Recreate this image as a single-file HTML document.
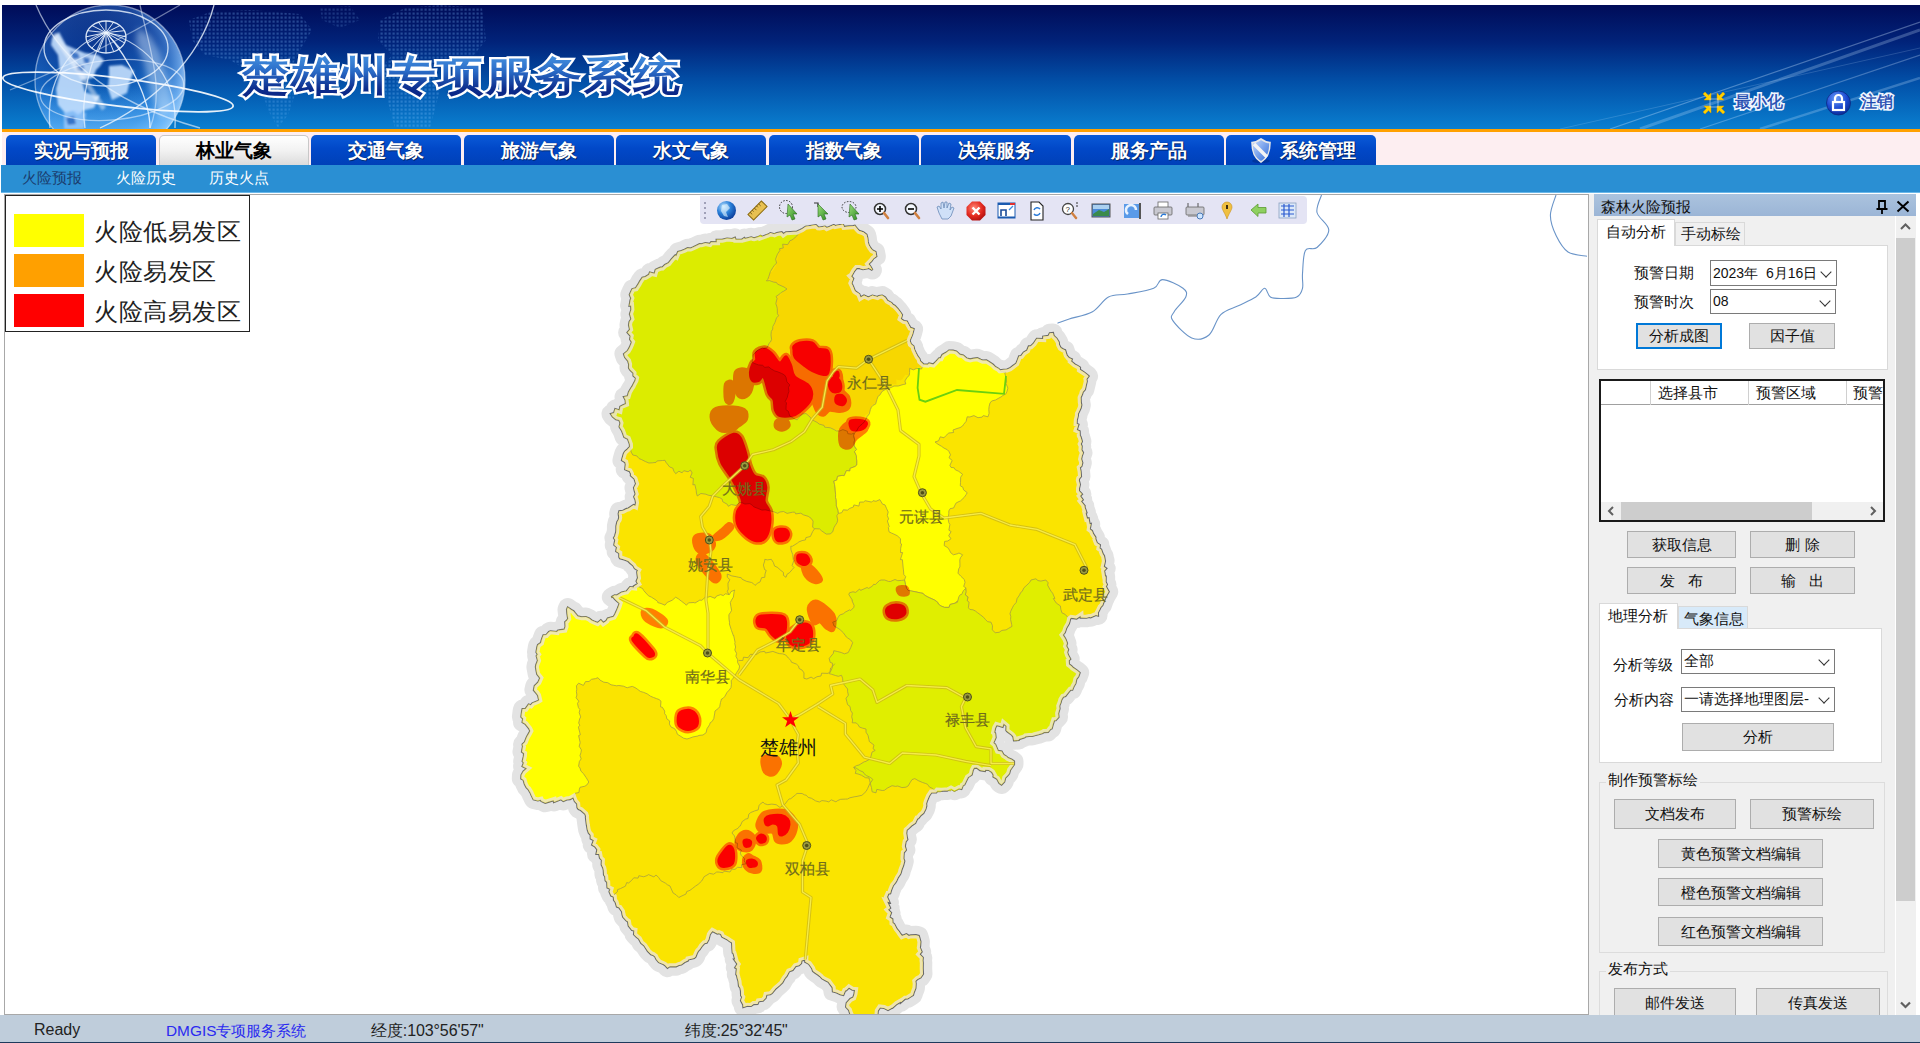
<!DOCTYPE html>
<html><head><meta charset="utf-8">
<style>
*{box-sizing:border-box;margin:0;padding:0}
html,body{width:1920px;height:1043px;overflow:hidden;background:#fff;font-family:"Liberation Sans",sans-serif;position:relative}
.a{position:absolute}
#hdr{left:2px;top:5px;width:1918px;height:124px;background:linear-gradient(180deg,#000c58 0%,#01237a 30%,#0250a8 62%,#0a7fd0 100%);overflow:hidden}
#orange{left:2px;top:129px;width:1918px;height:3px;background:#ffa000}
#tabbar{left:2px;top:132px;width:1918px;height:33px;background:#fdeef1}
.tab{top:135px;height:30px;width:150px;border-radius:5px 5px 0 0;background:linear-gradient(180deg,#0a5ad8 0%,#0148c8 45%,#0040b8 100%);color:#fff;font-weight:bold;font-size:19px;text-align:center;line-height:32px;text-shadow:0 0 1px #002060,1px 1px 0 #002a70}
.tab.act{background:linear-gradient(180deg,#ffffff 0%,#f2f2f2 50%,#dcdcdc 100%);color:#000;text-shadow:none;border:1px solid #c8c8c8;border-bottom:none;line-height:30px}
#subnav{left:1px;top:165px;width:1919px;height:28px;background:#2a8fd3;border-bottom:1px solid #6ab8ea}
.sn{top:169px;font-size:15px;color:#fff;line-height:18px}
#map{left:4px;top:194px;width:1585px;height:821px;border:1px solid #a8a8a8;background:#fff;overflow:hidden}
#mapsvg{left:0;top:0}
#legend{left:5px;top:195px;width:245px;height:137px;border:1px solid #222;background:#fff}
.sw{left:8px;width:70px;height:33px}
.lt{left:88px;font-size:24px;line-height:26px;color:#222;letter-spacing:0.5px}
#toolbar{left:700px;top:196px;width:607px;height:28px;background:#e4e4f4;border-radius:0 4px 4px 4px}
#panel{left:1589px;top:194px;width:331px;height:821px;background:#f0f0f0}
#status{left:0;top:1015px;width:1920px;height:27px;background:#bfcddb;font-size:16px;color:#222}
#sbot{left:0;top:1042px;width:1920px;height:1px;background:#1e3a5c}
.ptitle{left:1594px;top:194px;width:322px;height:22px;background:linear-gradient(180deg,#abc3de,#9bb5d6)}
.pt{font-size:15px;color:#111;line-height:18px;white-space:nowrap}
.btn{background:#e1e1e1;border:1px solid #adadad;font-size:15px;color:#111;text-align:center;white-space:nowrap}
.combo{background:#fff;border:1px solid #7a7a7a;font-size:14px;color:#111;white-space:nowrap;overflow:hidden}
.chev{position:absolute;right:6px;top:7px;width:8px;height:8px;border-right:1.5px solid #333;border-bottom:1.5px solid #333;transform:rotate(45deg)}
.mlab{font-size:15px;color:#706c1c;line-height:18px;white-space:nowrap;-webkit-text-stroke:0.2px #706c1c}

</style></head><body>
<div id="hdr" class="a">
<svg class="a" style="left:0;top:0" width="1918" height="124" viewBox="2 5 1918 124">
<defs>
<radialGradient id="gl" cx="0.38" cy="0.42" r="0.66"><stop offset="0" stop-color="#1050b0" stop-opacity="0.25"/><stop offset="0.7" stop-color="#3a8ae8" stop-opacity="0.45"/><stop offset="0.9" stop-color="#8cc4ff" stop-opacity="0.75"/><stop offset="1" stop-color="#d8ecff" stop-opacity="0.9"/></radialGradient>
<linearGradient id="glow2" x1="0" y1="0" x2="0" y2="1"><stop offset="0" stop-color="#60b0ff" stop-opacity="0"/><stop offset="1" stop-color="#70c0ff" stop-opacity="0.6"/></linearGradient>
<pattern id="dots" width="4" height="4" patternUnits="userSpaceOnUse"><rect x="0.5" y="0.5" width="2.2" height="2.2" fill="#80c0ff" fill-opacity="0.28"/></pattern>
<linearGradient id="streak" x1="0" y1="1" x2="1" y2="0"><stop offset="0" stop-color="#fff" stop-opacity="0"/><stop offset="0.5" stop-color="#fff" stop-opacity="0.35"/><stop offset="1" stop-color="#fff" stop-opacity="0"/></linearGradient>
<filter id="blur1" x="-20%" y="-20%" width="140%" height="140%"><feGaussianBlur stdDeviation="0.8"/></filter>
<filter id="blur3" x="-50%" y="-50%" width="200%" height="200%"><feGaussianBlur stdDeviation="3"/></filter>
</defs>
<path d="M189,20 L210,12 L250,10 L300,14 L312,30 L300,50 L290,70 L270,78 L250,72 L230,60 L205,55 L192,40Z" fill="url(#dots)"/>
<path d="M268,78 L285,80 L295,95 L288,115 L278,128 L268,110 L262,92Z" fill="url(#dots)" opacity="0.8"/>
<path d="M380,20 L405,8 L440,5 L482,8 L486,40 L470,60 L445,62 L430,66 L440,90 L430,128 L395,128 L386,95 L380,70 L392,55 L378,40Z" fill="url(#dots)"/>
<path d="M320,8 L350,6 L360,20 L340,28 L322,20Z" fill="url(#dots)" opacity="0.7"/>

<circle cx="110" cy="80" r="75" fill="url(#gl)"/>
<rect x="35" y="85" width="150" height="44" fill="url(#glow2)" clip-path="circle(75px at 75px -5px)"/>
<g filter="url(#blur1)">
<path d="M52,38 L59,32 L66,45 L75,49 L85,53 L98,55 L104,60 L100,66 L96,70 L93,78 L82,80 L85,92 L96,96 L100,95 L94,108 L85,110 L78,115 L73,111 L65,113 L58,105 L56,89 L60,73 L58,55 L51,45Z" fill="#c8e2ff" fill-opacity="0.88"/>
<path d="M109,66 L122,65 L134,71 L130,81 L127,93 L112,100 L108,89 L109,77Z" fill="#c8e2ff" fill-opacity="0.88"/>
<path d="M64,113 L75,110 L86,113 L84,129 L64,129Z" fill="#a8d0ff" fill-opacity="0.7"/>
<path d="M70,51 L78,53 L80,58 L72,60Z M83,57 L90,58 L89,64 L84,63Z M76,64 L84,66 L83,72 L77,71Z M66,118 L74,116 L76,124 L68,125Z" fill="#1a5ab8" fill-opacity="0.75"/>
</g>
<path d="M54,34 L104,109" stroke="#ffffff" stroke-opacity="0.45" stroke-width="5" filter="url(#blur1)"/>

<path d="M138,28 L150,36 L160,52 L168,80 L172,110 L160,118 L150,90 L144,62 L136,42Z" fill="#d8ecff" fill-opacity="0.45" filter="url(#blur3)"/>
<g fill="none" stroke="#eef6ff" stroke-width="1.3" stroke-opacity="0.9">
<ellipse cx="106" cy="37" rx="20" ry="16"/>
<path d="M106,32.6 L126.0,36.8 M106,32.6 L124.5,42.9 M106,32.6 L120.1,48.1 M106,32.6 L113.7,51.6 M106,32.6 L106.0,52.8 M106,32.6 L98.3,51.6 M106,32.6 L91.9,48.1 M106,32.6 L87.5,42.9 M106,32.6 L86.0,36.8 M106,32.6 L87.5,30.7 M106,32.6 L91.9,25.5 M106,32.6 L98.3,22.0 M106,32.6 L106.0,20.8 M106,32.6 L113.7,22.0 M106,32.6 L120.1,25.5 M106,32.6 L124.5,30.7" stroke-width="1"/>
<ellipse cx="106" cy="48" rx="62" ry="38" stroke-opacity="0.8"/>
<ellipse cx="110" cy="80" rx="75" ry="75" stroke-opacity="0.5"/>
<path d="M106,32 C70,45 45,80 50,128" stroke-opacity="0.7"/>
<path d="M106,32 C90,60 80,100 85,128" stroke-opacity="0.7"/>
<path d="M106,32 C130,60 150,100 150,128"/>
<path d="M106,32 C150,45 178,80 175,128" stroke-opacity="0.7"/>
<ellipse cx="112" cy="90" rx="72" ry="30" transform="rotate(-5 112 90)" stroke-opacity="0.55"/>
<ellipse cx="118" cy="92" rx="116" ry="14" transform="rotate(7 118 92)" stroke-width="1.8" stroke="#fff"/>
<path d="M36,5 C55,50 100,100 200,128" stroke-opacity="0.6"/>
<path d="M180,5 C120,40 60,70 10,90" stroke-opacity="0.45"/>
<path d="M214,5 C200,60 150,105 100,128" stroke-opacity="0.8"/>
<path d="M140,5 C150,50 165,90 150,128" stroke-opacity="0.5"/>
</g>
<g>
<path d="M1610,129 L1920,22" stroke="#cfe6ff" stroke-opacity="0.35" stroke-width="1.2"/>
<path d="M1640,129 L1920,30" stroke="#cfe6ff" stroke-opacity="0.25" stroke-width="3"/>
<path d="M1700,129 L1920,55" stroke="#cfe6ff" stroke-opacity="0.3" stroke-width="1.2"/>
<path d="M1760,129 L1920,78" stroke="#cfe6ff" stroke-opacity="0.25" stroke-width="2.5"/>
<path d="M1560,129 L1920,48" stroke="#cfe6ff" stroke-opacity="0.18" stroke-width="1"/>
</g>
<g transform="translate(1714,103)">
<g fill="#ffd000" stroke="#d89a00" stroke-width="0.5">
<path d="M-3,-3 L-3,-10 L-5.5,-7.5 L-9,-11 L-11,-9 L-7.5,-5.5 L-10,-3Z"/>
<path d="M3,-3 L3,-10 L5.5,-7.5 L9,-11 L11,-9 L7.5,-5.5 L10,-3Z"/>
<path d="M-3,3 L-3,10 L-5.5,7.5 L-9,11 L-11,9 L-7.5,5.5 L-10,3Z"/>
<path d="M3,3 L3,10 L5.5,7.5 L9,11 L11,9 L7.5,5.5 L10,3Z"/>
</g>
<rect x="-4" y="-4" width="8" height="8" fill="none" stroke="#d0e0f0" stroke-width="1" opacity="0.6"/>
</g>
<defs><radialGradient id="lockg" cx="0.4" cy="0.3" r="0.75"><stop offset="0" stop-color="#6a9af8"/><stop offset="0.6" stop-color="#1a48d0"/><stop offset="1" stop-color="#0a2890"/></radialGradient></defs>
<g transform="translate(1838.5,103)">
<circle r="12" fill="url(#lockg)" stroke="#0a2a80" stroke-width="0.8"/>
<rect x="-5.5" y="-1" width="11" height="8" fill="none" stroke="#fff" stroke-width="2.2"/>
<path d="M-3.5,-1 L-3.5,-4.5 A3.5,3.5 0 0 1 3.5,-4.5 L3.5,-1" fill="none" stroke="#fff" stroke-width="2.2"/>
</g>
</svg>
<div class="a" style="left:239.5px;top:44.5px;font-size:47px;font-weight:900;letter-spacing:2.2px;line-height:60px;color:#fff;-webkit-text-stroke:5px #fff;text-shadow:0 0 3px #001a60;white-space:nowrap;transform:scale(0.993,0.87);transform-origin:0 0">楚雄州专项服务系统</div>
<div class="a" style="left:239.5px;top:44.5px;font-size:47px;font-weight:900;letter-spacing:2.2px;line-height:60px;transform:scale(0.993,0.87);transform-origin:0 0;color:transparent;background:linear-gradient(180deg,#4d9de6 0%,#2a6cc8 40%,#0c2c8c 75%,#0a2080 100%);-webkit-background-clip:text;background-clip:text;white-space:nowrap">楚雄州专项服务系统</div>
<div class="a" style="left:1733px;top:87px;font-size:16px;color:#fff;-webkit-text-stroke:3.5px #f0f6ff;white-space:nowrap">最小化</div>
<div class="a" style="left:1733px;top:87px;font-size:16px;color:#1c48b0;-webkit-text-stroke:0.4px #1c48b0;white-space:nowrap">最小化</div>
<div class="a" style="left:1859px;top:87px;font-size:16px;color:#fff;-webkit-text-stroke:3.5px #f0f6ff;white-space:nowrap">注销</div>
<div class="a" style="left:1859px;top:87px;font-size:16px;color:#1c48b0;-webkit-text-stroke:0.4px #1c48b0;white-space:nowrap">注销</div>
</div>

<div id="orange" class="a"></div>
<div id="tabbar" class="a"></div>
<div class="a tab" style="left:6px">实况与预报</div>
<div class="a tab act" style="left:159px">林业气象</div>
<div class="a tab" style="left:311px">交通气象</div>
<div class="a tab" style="left:464px">旅游气象</div>
<div class="a tab" style="left:616px">水文气象</div>
<div class="a tab" style="left:769px">指数气象</div>
<div class="a tab" style="left:921px">决策服务</div>
<div class="a tab" style="left:1074px">服务产品</div>
<div class="a tab" style="left:1226px;text-align:left;padding-left:54px">系统管理<svg class="a" style="left:24px;top:3px" width="22" height="26" viewBox="0 0 22 26"><defs><linearGradient id="shg" x1="0" y1="0" x2="1" y2="1"><stop offset="0" stop-color="#c8dcff"/><stop offset="1" stop-color="#2a68d8"/></linearGradient></defs><ellipse cx="11" cy="23" rx="9" ry="2" fill="#002a80" opacity="0.5"/><path d="M11,1 C7,4 4,4.5 2,4.5 C2,14 4,20 11,24 C18,20 20,14 20,4.5 C18,4.5 15,4 11,1Z" fill="url(#shg)" stroke="#e8e8e8" stroke-width="1.6"/><path d="M4,6 L17,19" stroke="#f4f4f4" stroke-width="3.5"/></svg></div>
<div id="subnav" class="a"></div>
<div class="a sn" style="left:22px;color:#1b3d6e">火险预报</div>
<div class="a sn" style="left:116px">火险历史</div>
<div class="a sn" style="left:209px">历史火点</div>
<div id="map" class="a"></div>
<svg id="mapsvg" class="a" width="1920" height="1043" viewBox="0 0 1920 1043">
<defs><clipPath id="mc"><rect x="5" y="195" width="1583" height="819"/></clipPath></defs><g clip-path="url(#mc)">
<path d="M631.0,292.0 L632.4,289.1 L635.8,288.3 L638.5,284.2 L640.0,281.4 L642.5,277.7 L645.5,277.0 L649.1,274.7 L649.9,272.6 L654.6,273.7 L655.7,269.8 L660.4,267.7 L662.4,267.6 L665.0,265.0 L668.5,263.3 L669.8,261.7 L671.7,259.3 L675.2,255.5 L676.3,256.2 L678.1,251.9 L681.5,251.0 L684.6,249.8 L687.7,248.2 L690.6,248.5 L693.4,247.3 L696.0,246.0 L699.6,244.2 L701.6,244.3 L705.4,243.1 L709.8,243.9 L711.2,242.2 L716.9,242.3 L716.7,239.8 L722.3,239.8 L725.0,239.0 L727.1,238.5 L732.1,239.0 L734.9,237.8 L735.6,239.8 L741.9,239.7 L744.3,238.1 L744.8,239.0 L751.2,237.3 L753.0,238.0 L754.2,238.2 L760.6,236.4 L760.8,237.3 L766.5,235.1 L767.8,234.8 L770.4,233.1 L774.5,234.3 L777.0,233.0 L781.7,232.2 L783.4,234.2 L786.0,232.3 L790.4,232.0 L793.9,231.8 L796.5,231.8 L800.2,230.1 L801.8,229.3 L805.5,226.8 L808.6,226.3 L810.2,226.0 L815.9,225.1 L818.2,227.4 L819.6,227.5 L824.9,226.6 L826.8,228.1 L829.9,226.7 L833.8,225.0 L835.2,226.1 L840.0,225.0 L843.0,224.6 L844.1,226.9 L849.0,226.4 L852.6,226.3 L854.7,225.8 L857.8,229.6 L859.1,230.9 L863.3,232.3 L866.5,234.7 L867.3,237.8 L867.8,242.0 L868.4,244.5 L870.2,247.7 L872.2,250.3 L875.5,251.9 L876.3,256.3 L873.3,258.4 L871.5,261.0 L868.4,264.0 L870.4,266.6 L872.4,270.0 L868.6,267.7 L867.8,268.2 L863.0,269.2 L859.5,268.1 L856.6,268.0 L854.2,271.0 L851.7,275.4 L850.8,276.0 L853.2,278.6 L851.4,283.2 L852.7,285.8 L854.7,290.7 L855.4,291.5 L859.3,294.1 L860.6,297.5 L864.0,295.4 L868.4,297.5 L872.4,295.6 L877.5,297.0 L879.0,296.1 L882.2,295.6 L885.1,297.4 L887.3,300.7 L891.5,303.0 L892.5,304.4 L894.9,305.9 L898.0,309.3 L900.8,313.0 L902.0,315.0 L900.7,318.9 L903.8,321.0 L906.9,321.6 L908.5,324.6 L910.4,327.9 L913.6,329.0 L912.8,332.3 L912.0,334.9 L910.3,338.8 L909.7,340.8 L910.8,344.1 L913.5,346.3 L914.2,349.6 L915.8,353.0 L917.6,356.5 L919.4,358.7 L920.1,361.3 L923.5,364.4 L927.7,364.7 L929.0,363.5 L933.3,364.4 L936.1,361.7 L939.2,358.3 L940.7,358.3 L942.4,354.9 L946.6,352.5 L949.0,350.6 L953.1,350.7 L956.2,351.4 L957.7,352.8 L959.7,354.7 L963.2,355.4 L966.7,358.5 L970.2,359.4 L972.4,358.9 L977.3,358.2 L980.6,359.8 L982.6,360.6 L986.4,360.4 L988.9,362.0 L993.0,364.7 L995.2,367.0 L998.5,368.8 L1000.0,370.3 L1003.5,369.8 L1007.0,369.5 L1010.0,368.3 L1013.0,366.0 L1016.3,363.6 L1018.0,359.3 L1019.1,356.2 L1021.2,356.0 L1023.7,352.6 L1027.2,350.4 L1028.8,346.4 L1030.8,346.3 L1033.7,343.5 L1035.5,340.8 L1036.9,338.8 L1043.2,339.1 L1043.2,336.6 L1048.4,335.9 L1049.8,333.3 L1053.0,333.0 L1053.6,335.7 L1056.6,338.6 L1058.8,342.3 L1059.0,344.7 L1060.7,347.9 L1063.3,349.5 L1065.1,350.2 L1066.7,355.4 L1068.9,358.0 L1071.8,359.3 L1071.0,361.3 L1074.8,364.4 L1077.9,366.1 L1080.0,367.5 L1079.9,369.8 L1084.3,372.6 L1087.7,375.3 L1088.6,376.2 L1086.4,379.1 L1086.8,381.3 L1085.9,385.1 L1084.9,389.4 L1082.7,392.0 L1082.2,393.8 L1080.6,397.6 L1080.8,402.3 L1081.3,405.0 L1080.7,407.8 L1079.0,411.6 L1077.9,413.7 L1077.9,415.7 L1076.8,420.0 L1076.6,423.8 L1078.4,424.6 L1076.7,429.9 L1079.6,431.3 L1079.8,435.7 L1080.5,436.7 L1081.9,441.5 L1080.7,444.0 L1081.7,446.3 L1081.4,449.9 L1083.0,452.7 L1081.7,456.2 L1081.1,459.0 L1082.3,462.7 L1081.5,465.9 L1079.8,467.6 L1080.6,471.4 L1081.0,476.4 L1079.2,478.5 L1078.8,480.3 L1079.9,484.6 L1079.0,488.3 L1079.0,491.0 L1081.9,494.1 L1080.0,496.0 L1082.7,499.7 L1080.9,501.2 L1084.7,506.0 L1084.4,506.8 L1086.4,512.5 L1085.5,512.7 L1087.0,518.7 L1088.6,518.4 L1089.6,524.3 L1090.7,524.0 L1089.7,529.2 L1092.0,531.0 L1093.0,533.7 L1095.4,537.4 L1095.3,538.9 L1096.9,543.1 L1099.9,545.0 L1099.4,548.3 L1101.1,549.4 L1102.7,553.9 L1104.0,556.0 L1104.9,560.9 L1105.1,560.4 L1103.7,566.7 L1106.2,568.4 L1104.1,570.7 L1105.0,576.5 L1105.7,576.5 L1105.6,581.9 L1106.9,584.5 L1105.8,586.5 L1108.7,591.7 L1107.5,593.8 L1105.8,596.7 L1103.8,601.3 L1102.4,605.2 L1100.5,607.3 L1099.6,609.2 L1097.9,612.4 L1098.0,615.6 L1095.9,615.0 L1090.6,617.3 L1089.1,617.0 L1086.4,617.7 L1080.7,617.6 L1080.6,615.8 L1076.6,618.6 L1071.3,617.8 L1070.0,618.8 L1069.8,620.4 L1068.9,623.5 L1066.3,627.9 L1064.8,632.4 L1062.7,634.9 L1064.9,638.3 L1065.5,639.4 L1067.0,643.3 L1066.1,646.1 L1068.1,649.5 L1067.1,652.3 L1068.0,655.0 L1070.2,659.1 L1068.7,660.4 L1069.0,664.4 L1071.3,666.1 L1072.8,667.7 L1076.7,670.3 L1079.6,672.8 L1078.3,676.5 L1076.3,679.1 L1075.4,683.4 L1073.7,686.2 L1072.3,689.7 L1070.4,689.7 L1068.1,692.5 L1065.4,696.0 L1063.1,696.8 L1061.3,699.7 L1060.6,702.4 L1059.2,705.9 L1059.5,708.7 L1058.1,713.4 L1058.5,717.1 L1055.7,720.2 L1054.1,720.2 L1052.8,724.3 L1051.7,728.5 L1050.4,728.9 L1048.0,732.0 L1043.9,732.1 L1042.6,732.9 L1038.6,734.3 L1034.6,735.2 L1032.1,736.0 L1029.0,736.0 L1025.6,736.3 L1024.6,737.3 L1018.9,739.1 L1018.8,740.0 L1014.0,740.3 L1013.4,736.8 L1012.1,735.0 L1007.3,731.3 L1006.4,730.4 L1006.6,726.0 L1003.6,723.5 L1002.6,726.8 L996.7,725.0 L995.2,727.7 L994.1,732.4 L995.1,733.3 L995.6,737.5 L993.3,742.9 L995.2,744.6 L996.9,748.6 L997.9,750.9 L1001.6,751.6 L1003.6,755.0 L1006.3,756.6 L1007.8,758.0 L1011.7,759.7 L1014.0,761.4 L1014.0,764.5 L1012.4,766.7 L1010.1,769.9 L1009.1,773.4 L1007.4,775.6 L1005.2,777.8 L1004.2,781.8 L1001.5,784.6 L999.4,783.1 L997.1,778.8 L993.5,776.6 L993.8,775.0 L992.1,772.1 L988.9,769.9 L985.2,769.8 L984.9,770.9 L980.1,770.1 L976.8,767.6 L974.0,767.8 L972.7,770.3 L971.7,774.6 L970.2,775.7 L967.9,777.2 L965.8,781.6 L964.4,784.5 L962.8,785.4 L961.4,788.9 L958.9,788.3 L954.6,790.6 L951.0,788.6 L947.2,790.6 L944.8,790.4 L941.5,790.8 L937.5,790.6 L936.2,792.5 L931.4,792.5 L929.0,796.0 L926.9,801.0 L926.1,803.6 L926.3,805.8 L925.5,808.9 L923.4,813.0 L920.6,815.3 L918.3,818.3 L917.3,818.5 L915.2,822.9 L911.4,825.6 L908.7,828.2 L906.6,830.0 L906.2,833.3 L906.9,837.8 L907.3,839.4 L905.6,841.5 L904.8,846.3 L905.9,850.0 L903.8,852.5 L903.5,855.9 L903.4,858.8 L904.3,861.1 L903.1,865.6 L901.3,870.3 L901.0,872.0 L900.2,874.1 L897.8,877.6 L896.4,880.8 L895.3,882.5 L893.0,885.4 L891.1,890.1 L890.2,893.2 L888.4,893.6 L887.0,897.0 L889.4,902.3 L887.0,901.6 L890.1,908.0 L888.0,909.7 L891.0,912.8 L889.3,917.3 L892.3,919.2 L892.5,923.0 L894.1,924.0 L896.7,928.9 L898.9,931.6 L899.9,933.2 L902.0,936.0 L906.4,934.2 L908.8,936.0 L910.7,935.4 L916.0,935.2 L918.8,936.0 L919.7,939.0 L920.4,941.6 L920.1,946.1 L919.8,947.6 L921.6,951.8 L919.5,954.3 L922.8,957.6 L922.5,960.6 L922.8,962.8 L922.7,968.6 L922.8,970.4 L923.0,974.0 L920.6,977.4 L917.5,979.0 L915.3,981.1 L915.7,983.6 L915.4,988.2 L913.7,992.5 L913.0,995.0 L910.8,996.4 L907.6,998.4 L905.2,998.6 L900.9,1002.3 L900.9,1001.5 L896.7,1004.0 L892.3,1007.8 L891.9,1007.8 L888.0,1010.0 L884.0,1007.9 L880.0,1007.5 L877.8,1010.8 L877.5,1014.0 L876.7,1018.0 L873.4,1017.3 L870.6,1018.5 L868.6,1017.3 L863.2,1017.2 L861.7,1019.1 L859.9,1018.2 L854.7,1017.3 L852.5,1018.0 L850.2,1013.8 L849.0,1010.0 L846.1,1006.9 L846.7,1003.0 L850.3,999.0 L853.3,997.5 L854.5,993.9 L855.0,990.0 L852.4,989.8 L849.0,987.5 L846.3,990.2 L845.1,990.6 L843.3,995.0 L840.3,994.2 L836.7,992.5 L832.9,991.4 L832.7,987.6 L829.9,983.8 L828.4,981.7 L825.0,980.0 L822.2,978.4 L820.7,976.7 L818.3,974.8 L815.3,972.8 L813.0,971.0 L812.2,968.4 L809.0,963.9 L805.2,961.8 L805.3,959.4 L801.4,960.6 L801.1,963.2 L798.9,965.2 L795.6,966.1 L792.7,970.1 L791.0,970.6 L789.0,971.4 L786.6,976.1 L785.1,977.7 L784.0,979.4 L782.3,982.5 L779.3,985.5 L775.6,988.6 L774.4,990.0 L772.0,992.9 L770.2,994.3 L766.4,994.7 L765.6,998.0 L762.9,1000.8 L758.7,1001.2 L757.5,1004.0 L753.6,1004.1 L751.0,1005.9 L747.4,1005.8 L743.4,1007.0 L743.2,1004.6 L741.0,1000.6 L742.2,997.1 L741.1,995.4 L741.0,991.1 L740.4,987.9 L739.0,986.1 L738.5,981.2 L737.8,979.0 L736.8,974.8 L736.3,974.4 L736.9,968.4 L735.3,967.6 L737.5,964.1 L734.2,959.5 L735.2,959.4 L733.5,953.2 L732.7,952.7 L732.3,947.7 L732.3,946.3 L732.0,942.5 L729.3,940.9 L727.1,939.2 L722.2,936.8 L721.0,934.0 L718.9,933.2 L717.3,933.6 L712.5,931.0 L711.0,932.7 L709.8,934.5 L708.5,939.6 L706.7,942.7 L704.4,943.2 L701.9,945.9 L699.7,949.3 L698.0,951.0 L696.7,953.6 L695.6,956.6 L694.2,958.0 L688.2,959.4 L687.8,960.6 L684.6,962.0 L681.3,964.5 L678.8,965.0 L676.1,966.3 L669.8,966.2 L667.5,967.8 L665.2,965.3 L663.8,964.3 L658.9,962.2 L656.4,959.2 L655.1,956.5 L653.1,954.9 L651.0,954.2 L647.8,951.0 L645.5,947.5 L644.2,945.5 L641.2,943.1 L638.9,938.7 L636.6,937.0 L634.0,934.4 L634.4,930.5 L632.0,929.9 L628.7,925.8 L628.0,921.6 L626.4,920.5 L623.2,916.9 L622.5,914.4 L622.0,911.4 L619.3,907.5 L616.9,906.6 L615.6,902.2 L614.0,900.0 L613.8,896.8 L611.2,895.6 L609.5,891.8 L610.4,889.0 L607.5,887.6 L607.2,882.1 L605.6,880.6 L605.2,876.2 L604.0,874.9 L603.8,870.4 L603.3,868.0 L601.7,864.8 L601.9,859.9 L600.0,858.0 L599.2,854.0 L596.5,854.0 L597.4,849.5 L595.1,846.5 L592.2,844.8 L593.9,840.2 L590.7,838.6 L590.7,834.9 L588.8,832.8 L587.7,829.8 L586.9,825.1 L586.8,824.4 L585.9,817.4 L586.0,816.0 L585.3,814.0 L580.9,810.1 L578.6,809.1 L577.5,807.5 L577.2,803.7 L574.8,801.2 L573.3,797.2 L570.0,799.1 L566.7,799.4 L563.3,801.0 L560.9,799.2 L554.0,802.0 L553.7,800.2 L549.0,801.6 L545.3,802.8 L541.3,800.9 L540.8,799.7 L537.9,800.4 L533.6,799.4 L531.4,794.9 L530.5,792.7 L528.4,789.2 L526.5,787.3 L524.8,784.0 L523.6,779.9 L521.3,778.6 L521.5,775.1 L523.5,771.4 L527.0,768.5 L522.6,766.3 L524.0,762.7 L522.7,761.3 L523.9,756.2 L524.1,753.3 L522.0,751.7 L523.0,746.5 L522.6,744.3 L524.8,742.3 L526.3,738.5 L527.2,736.5 L528.7,733.9 L530.3,731.0 L529.2,728.6 L525.4,723.8 L522.6,722.2 L523.2,718.6 L521.4,716.9 L522.1,711.3 L522.6,709.0 L525.6,708.9 L528.7,704.6 L530.8,705.3 L532.4,703.3 L538.1,700.9 L539.2,700.2 L538.1,695.5 L536.8,693.4 L533.9,690.1 L534.8,685.9 L536.5,684.2 L538.3,682.4 L540.3,678.0 L537.2,674.1 L536.5,670.3 L535.9,667.0 L536.3,664.9 L538.0,660.5 L536.7,655.9 L537.9,654.4 L536.5,652.3 L537.3,647.2 L538.0,645.0 L541.0,642.9 L542.0,639.2 L543.5,635.2 L546.2,635.1 L549.0,631.9 L550.4,631.3 L557.1,632.0 L557.8,630.8 L560.4,630.2 L564.5,629.7 L565.6,626.6 L565.3,622.0 L566.9,620.7 L568.2,618.8 L567.4,613.5 L567.0,609.6 L567.8,607.6 L571.2,610.0 L573.4,611.2 L574.8,613.0 L577.7,616.4 L581.6,617.3 L585.8,617.0 L589.1,618.4 L591.6,620.4 L594.0,621.5 L597.6,623.0 L600.8,620.3 L603.3,623.0 L606.4,620.9 L607.8,618.5 L613.7,616.8 L615.2,614.2 L616.8,610.8 L618.6,606.5 L619.6,603.2 L616.7,600.7 L614.9,598.9 L613.0,596.6 L611.3,597.2 L614.7,595.3 L616.8,595.5 L621.7,592.5 L624.7,591.8 L626.5,591.5 L630.1,587.1 L633.9,587.5 L633.8,586.4 L638.0,583.8 L636.6,581.3 L638.0,578.0 L637.2,571.9 L638.0,570.3 L634.8,568.2 L633.2,565.5 L630.3,563.1 L628.3,561.1 L624.3,559.5 L620.0,558.2 L619.3,557.0 L619.3,553.2 L616.2,551.2 L617.0,547.3 L614.3,544.9 L615.3,540.0 L614.0,538.0 L615.1,535.9 L616.2,532.0 L616.4,529.6 L616.4,526.2 L617.3,521.9 L618.7,519.8 L619.2,517.3 L618.7,513.8 L619.3,511.3 L623.0,510.8 L626.7,508.9 L628.4,508.5 L633.6,505.1 L635.4,506.0 L636.0,502.8 L635.5,499.7 L634.2,496.8 L635.7,493.9 L634.8,491.1 L634.0,487.8 L636.1,483.7 L635.4,481.7 L634.5,478.7 L630.9,475.5 L631.0,473.8 L629.6,471.1 L625.2,469.4 L625.8,464.5 L625.3,462.2 L622.0,460.3 L622.5,458.2 L623.9,453.5 L625.0,451.6 L627.0,449.9 L630.0,446.8 L629.9,444.2 L627.9,438.7 L624.3,437.0 L622.9,433.0 L622.0,430.7 L619.6,426.8 L620.5,422.9 L619.3,420.0 L616.0,419.2 L612.7,416.6 L611.0,414.0 L614.1,413.1 L615.3,409.1 L619.6,410.5 L620.3,406.7 L623.1,405.2 L626.0,404.0 L625.6,400.0 L624.0,397.0 L627.7,396.3 L629.0,392.0 L631.3,388.0 L632.6,386.2 L633.4,384.4 L635.5,380.4 L636.0,378.0 L633.5,375.7 L633.5,373.1 L630.2,369.7 L629.0,368.0 L629.1,364.1 L628.1,360.7 L625.1,357.2 L624.0,354.0 L627.7,351.0 L629.8,347.4 L631.1,344.3 L632.0,342.0 L630.1,339.3 L630.7,335.9 L627.6,332.4 L630.1,329.5 L629.0,325.0 L629.6,321.7 L631.4,319.0 L630.5,315.6 L629.9,314.2 L631.4,309.6 L631.1,305.5 L629.6,305.7 L630.5,300.4 L631.3,298.2 L629.8,294.7Z" fill="#e2e2e2" stroke="#e3e3e3" stroke-width="19" stroke-linejoin="round"/>
<path d="M631.0,292.0 L632.4,289.1 L635.8,288.3 L638.5,284.2 L640.0,281.4 L642.5,277.7 L645.5,277.0 L649.1,274.7 L649.9,272.6 L654.6,273.7 L655.7,269.8 L660.4,267.7 L662.4,267.6 L665.0,265.0 L668.5,263.3 L669.8,261.7 L671.7,259.3 L675.2,255.5 L676.3,256.2 L678.1,251.9 L681.5,251.0 L684.6,249.8 L687.7,248.2 L690.6,248.5 L693.4,247.3 L696.0,246.0 L699.6,244.2 L701.6,244.3 L705.4,243.1 L709.8,243.9 L711.2,242.2 L716.9,242.3 L716.7,239.8 L722.3,239.8 L725.0,239.0 L727.1,238.5 L732.1,239.0 L734.9,237.8 L735.6,239.8 L741.9,239.7 L744.3,238.1 L744.8,239.0 L751.2,237.3 L753.0,238.0 L754.2,238.2 L760.6,236.4 L760.8,237.3 L766.5,235.1 L767.8,234.8 L770.4,233.1 L774.5,234.3 L777.0,233.0 L781.7,232.2 L783.4,234.2 L786.0,232.3 L790.4,232.0 L793.9,231.8 L796.5,231.8 L800.2,230.1 L801.8,229.3 L805.5,226.8 L808.6,226.3 L810.2,226.0 L815.9,225.1 L818.2,227.4 L819.6,227.5 L824.9,226.6 L826.8,228.1 L829.9,226.7 L833.8,225.0 L835.2,226.1 L840.0,225.0 L843.0,224.6 L844.1,226.9 L849.0,226.4 L852.6,226.3 L854.7,225.8 L857.8,229.6 L859.1,230.9 L863.3,232.3 L866.5,234.7 L867.3,237.8 L867.8,242.0 L868.4,244.5 L870.2,247.7 L872.2,250.3 L875.5,251.9 L876.3,256.3 L873.3,258.4 L871.5,261.0 L868.4,264.0 L870.4,266.6 L872.4,270.0 L868.6,267.7 L867.8,268.2 L863.0,269.2 L859.5,268.1 L856.6,268.0 L854.2,271.0 L851.7,275.4 L850.8,276.0 L853.2,278.6 L851.4,283.2 L852.7,285.8 L854.7,290.7 L855.4,291.5 L859.3,294.1 L860.6,297.5 L864.0,295.4 L868.4,297.5 L872.4,295.6 L877.5,297.0 L879.0,296.1 L882.2,295.6 L885.1,297.4 L887.3,300.7 L891.5,303.0 L892.5,304.4 L894.9,305.9 L898.0,309.3 L900.8,313.0 L902.0,315.0 L900.7,318.9 L903.8,321.0 L906.9,321.6 L908.5,324.6 L910.4,327.9 L913.6,329.0 L912.8,332.3 L912.0,334.9 L910.3,338.8 L909.7,340.8 L910.8,344.1 L913.5,346.3 L914.2,349.6 L915.8,353.0 L917.6,356.5 L919.4,358.7 L920.1,361.3 L923.5,364.4 L927.7,364.7 L929.0,363.5 L933.3,364.4 L936.1,361.7 L939.2,358.3 L940.7,358.3 L942.4,354.9 L946.6,352.5 L949.0,350.6 L953.1,350.7 L956.2,351.4 L957.7,352.8 L959.7,354.7 L963.2,355.4 L966.7,358.5 L970.2,359.4 L972.4,358.9 L977.3,358.2 L980.6,359.8 L982.6,360.6 L986.4,360.4 L988.9,362.0 L993.0,364.7 L995.2,367.0 L998.5,368.8 L1000.0,370.3 L1003.5,369.8 L1007.0,369.5 L1010.0,368.3 L1013.0,366.0 L1016.3,363.6 L1018.0,359.3 L1019.1,356.2 L1021.2,356.0 L1023.7,352.6 L1027.2,350.4 L1028.8,346.4 L1030.8,346.3 L1033.7,343.5 L1035.5,340.8 L1036.9,338.8 L1043.2,339.1 L1043.2,336.6 L1048.4,335.9 L1049.8,333.3 L1053.0,333.0 L1053.6,335.7 L1056.6,338.6 L1058.8,342.3 L1059.0,344.7 L1060.7,347.9 L1063.3,349.5 L1065.1,350.2 L1066.7,355.4 L1068.9,358.0 L1071.8,359.3 L1071.0,361.3 L1074.8,364.4 L1077.9,366.1 L1080.0,367.5 L1079.9,369.8 L1084.3,372.6 L1087.7,375.3 L1088.6,376.2 L1086.4,379.1 L1086.8,381.3 L1085.9,385.1 L1084.9,389.4 L1082.7,392.0 L1082.2,393.8 L1080.6,397.6 L1080.8,402.3 L1081.3,405.0 L1080.7,407.8 L1079.0,411.6 L1077.9,413.7 L1077.9,415.7 L1076.8,420.0 L1076.6,423.8 L1078.4,424.6 L1076.7,429.9 L1079.6,431.3 L1079.8,435.7 L1080.5,436.7 L1081.9,441.5 L1080.7,444.0 L1081.7,446.3 L1081.4,449.9 L1083.0,452.7 L1081.7,456.2 L1081.1,459.0 L1082.3,462.7 L1081.5,465.9 L1079.8,467.6 L1080.6,471.4 L1081.0,476.4 L1079.2,478.5 L1078.8,480.3 L1079.9,484.6 L1079.0,488.3 L1079.0,491.0 L1081.9,494.1 L1080.0,496.0 L1082.7,499.7 L1080.9,501.2 L1084.7,506.0 L1084.4,506.8 L1086.4,512.5 L1085.5,512.7 L1087.0,518.7 L1088.6,518.4 L1089.6,524.3 L1090.7,524.0 L1089.7,529.2 L1092.0,531.0 L1093.0,533.7 L1095.4,537.4 L1095.3,538.9 L1096.9,543.1 L1099.9,545.0 L1099.4,548.3 L1101.1,549.4 L1102.7,553.9 L1104.0,556.0 L1104.9,560.9 L1105.1,560.4 L1103.7,566.7 L1106.2,568.4 L1104.1,570.7 L1105.0,576.5 L1105.7,576.5 L1105.6,581.9 L1106.9,584.5 L1105.8,586.5 L1108.7,591.7 L1107.5,593.8 L1105.8,596.7 L1103.8,601.3 L1102.4,605.2 L1100.5,607.3 L1099.6,609.2 L1097.9,612.4 L1098.0,615.6 L1095.9,615.0 L1090.6,617.3 L1089.1,617.0 L1086.4,617.7 L1080.7,617.6 L1080.6,615.8 L1076.6,618.6 L1071.3,617.8 L1070.0,618.8 L1069.8,620.4 L1068.9,623.5 L1066.3,627.9 L1064.8,632.4 L1062.7,634.9 L1064.9,638.3 L1065.5,639.4 L1067.0,643.3 L1066.1,646.1 L1068.1,649.5 L1067.1,652.3 L1068.0,655.0 L1070.2,659.1 L1068.7,660.4 L1069.0,664.4 L1071.3,666.1 L1072.8,667.7 L1076.7,670.3 L1079.6,672.8 L1078.3,676.5 L1076.3,679.1 L1075.4,683.4 L1073.7,686.2 L1072.3,689.7 L1070.4,689.7 L1068.1,692.5 L1065.4,696.0 L1063.1,696.8 L1061.3,699.7 L1060.6,702.4 L1059.2,705.9 L1059.5,708.7 L1058.1,713.4 L1058.5,717.1 L1055.7,720.2 L1054.1,720.2 L1052.8,724.3 L1051.7,728.5 L1050.4,728.9 L1048.0,732.0 L1043.9,732.1 L1042.6,732.9 L1038.6,734.3 L1034.6,735.2 L1032.1,736.0 L1029.0,736.0 L1025.6,736.3 L1024.6,737.3 L1018.9,739.1 L1018.8,740.0 L1014.0,740.3 L1013.4,736.8 L1012.1,735.0 L1007.3,731.3 L1006.4,730.4 L1006.6,726.0 L1003.6,723.5 L1002.6,726.8 L996.7,725.0 L995.2,727.7 L994.1,732.4 L995.1,733.3 L995.6,737.5 L993.3,742.9 L995.2,744.6 L996.9,748.6 L997.9,750.9 L1001.6,751.6 L1003.6,755.0 L1006.3,756.6 L1007.8,758.0 L1011.7,759.7 L1014.0,761.4 L1014.0,764.5 L1012.4,766.7 L1010.1,769.9 L1009.1,773.4 L1007.4,775.6 L1005.2,777.8 L1004.2,781.8 L1001.5,784.6 L999.4,783.1 L997.1,778.8 L993.5,776.6 L993.8,775.0 L992.1,772.1 L988.9,769.9 L985.2,769.8 L984.9,770.9 L980.1,770.1 L976.8,767.6 L974.0,767.8 L972.7,770.3 L971.7,774.6 L970.2,775.7 L967.9,777.2 L965.8,781.6 L964.4,784.5 L962.8,785.4 L961.4,788.9 L958.9,788.3 L954.6,790.6 L951.0,788.6 L947.2,790.6 L944.8,790.4 L941.5,790.8 L937.5,790.6 L936.2,792.5 L931.4,792.5 L929.0,796.0 L926.9,801.0 L926.1,803.6 L926.3,805.8 L925.5,808.9 L923.4,813.0 L920.6,815.3 L918.3,818.3 L917.3,818.5 L915.2,822.9 L911.4,825.6 L908.7,828.2 L906.6,830.0 L906.2,833.3 L906.9,837.8 L907.3,839.4 L905.6,841.5 L904.8,846.3 L905.9,850.0 L903.8,852.5 L903.5,855.9 L903.4,858.8 L904.3,861.1 L903.1,865.6 L901.3,870.3 L901.0,872.0 L900.2,874.1 L897.8,877.6 L896.4,880.8 L895.3,882.5 L893.0,885.4 L891.1,890.1 L890.2,893.2 L888.4,893.6 L887.0,897.0 L889.4,902.3 L887.0,901.6 L890.1,908.0 L888.0,909.7 L891.0,912.8 L889.3,917.3 L892.3,919.2 L892.5,923.0 L894.1,924.0 L896.7,928.9 L898.9,931.6 L899.9,933.2 L902.0,936.0 L906.4,934.2 L908.8,936.0 L910.7,935.4 L916.0,935.2 L918.8,936.0 L919.7,939.0 L920.4,941.6 L920.1,946.1 L919.8,947.6 L921.6,951.8 L919.5,954.3 L922.8,957.6 L922.5,960.6 L922.8,962.8 L922.7,968.6 L922.8,970.4 L923.0,974.0 L920.6,977.4 L917.5,979.0 L915.3,981.1 L915.7,983.6 L915.4,988.2 L913.7,992.5 L913.0,995.0 L910.8,996.4 L907.6,998.4 L905.2,998.6 L900.9,1002.3 L900.9,1001.5 L896.7,1004.0 L892.3,1007.8 L891.9,1007.8 L888.0,1010.0 L884.0,1007.9 L880.0,1007.5 L877.8,1010.8 L877.5,1014.0 L876.7,1018.0 L873.4,1017.3 L870.6,1018.5 L868.6,1017.3 L863.2,1017.2 L861.7,1019.1 L859.9,1018.2 L854.7,1017.3 L852.5,1018.0 L850.2,1013.8 L849.0,1010.0 L846.1,1006.9 L846.7,1003.0 L850.3,999.0 L853.3,997.5 L854.5,993.9 L855.0,990.0 L852.4,989.8 L849.0,987.5 L846.3,990.2 L845.1,990.6 L843.3,995.0 L840.3,994.2 L836.7,992.5 L832.9,991.4 L832.7,987.6 L829.9,983.8 L828.4,981.7 L825.0,980.0 L822.2,978.4 L820.7,976.7 L818.3,974.8 L815.3,972.8 L813.0,971.0 L812.2,968.4 L809.0,963.9 L805.2,961.8 L805.3,959.4 L801.4,960.6 L801.1,963.2 L798.9,965.2 L795.6,966.1 L792.7,970.1 L791.0,970.6 L789.0,971.4 L786.6,976.1 L785.1,977.7 L784.0,979.4 L782.3,982.5 L779.3,985.5 L775.6,988.6 L774.4,990.0 L772.0,992.9 L770.2,994.3 L766.4,994.7 L765.6,998.0 L762.9,1000.8 L758.7,1001.2 L757.5,1004.0 L753.6,1004.1 L751.0,1005.9 L747.4,1005.8 L743.4,1007.0 L743.2,1004.6 L741.0,1000.6 L742.2,997.1 L741.1,995.4 L741.0,991.1 L740.4,987.9 L739.0,986.1 L738.5,981.2 L737.8,979.0 L736.8,974.8 L736.3,974.4 L736.9,968.4 L735.3,967.6 L737.5,964.1 L734.2,959.5 L735.2,959.4 L733.5,953.2 L732.7,952.7 L732.3,947.7 L732.3,946.3 L732.0,942.5 L729.3,940.9 L727.1,939.2 L722.2,936.8 L721.0,934.0 L718.9,933.2 L717.3,933.6 L712.5,931.0 L711.0,932.7 L709.8,934.5 L708.5,939.6 L706.7,942.7 L704.4,943.2 L701.9,945.9 L699.7,949.3 L698.0,951.0 L696.7,953.6 L695.6,956.6 L694.2,958.0 L688.2,959.4 L687.8,960.6 L684.6,962.0 L681.3,964.5 L678.8,965.0 L676.1,966.3 L669.8,966.2 L667.5,967.8 L665.2,965.3 L663.8,964.3 L658.9,962.2 L656.4,959.2 L655.1,956.5 L653.1,954.9 L651.0,954.2 L647.8,951.0 L645.5,947.5 L644.2,945.5 L641.2,943.1 L638.9,938.7 L636.6,937.0 L634.0,934.4 L634.4,930.5 L632.0,929.9 L628.7,925.8 L628.0,921.6 L626.4,920.5 L623.2,916.9 L622.5,914.4 L622.0,911.4 L619.3,907.5 L616.9,906.6 L615.6,902.2 L614.0,900.0 L613.8,896.8 L611.2,895.6 L609.5,891.8 L610.4,889.0 L607.5,887.6 L607.2,882.1 L605.6,880.6 L605.2,876.2 L604.0,874.9 L603.8,870.4 L603.3,868.0 L601.7,864.8 L601.9,859.9 L600.0,858.0 L599.2,854.0 L596.5,854.0 L597.4,849.5 L595.1,846.5 L592.2,844.8 L593.9,840.2 L590.7,838.6 L590.7,834.9 L588.8,832.8 L587.7,829.8 L586.9,825.1 L586.8,824.4 L585.9,817.4 L586.0,816.0 L585.3,814.0 L580.9,810.1 L578.6,809.1 L577.5,807.5 L577.2,803.7 L574.8,801.2 L573.3,797.2 L570.0,799.1 L566.7,799.4 L563.3,801.0 L560.9,799.2 L554.0,802.0 L553.7,800.2 L549.0,801.6 L545.3,802.8 L541.3,800.9 L540.8,799.7 L537.9,800.4 L533.6,799.4 L531.4,794.9 L530.5,792.7 L528.4,789.2 L526.5,787.3 L524.8,784.0 L523.6,779.9 L521.3,778.6 L521.5,775.1 L523.5,771.4 L527.0,768.5 L522.6,766.3 L524.0,762.7 L522.7,761.3 L523.9,756.2 L524.1,753.3 L522.0,751.7 L523.0,746.5 L522.6,744.3 L524.8,742.3 L526.3,738.5 L527.2,736.5 L528.7,733.9 L530.3,731.0 L529.2,728.6 L525.4,723.8 L522.6,722.2 L523.2,718.6 L521.4,716.9 L522.1,711.3 L522.6,709.0 L525.6,708.9 L528.7,704.6 L530.8,705.3 L532.4,703.3 L538.1,700.9 L539.2,700.2 L538.1,695.5 L536.8,693.4 L533.9,690.1 L534.8,685.9 L536.5,684.2 L538.3,682.4 L540.3,678.0 L537.2,674.1 L536.5,670.3 L535.9,667.0 L536.3,664.9 L538.0,660.5 L536.7,655.9 L537.9,654.4 L536.5,652.3 L537.3,647.2 L538.0,645.0 L541.0,642.9 L542.0,639.2 L543.5,635.2 L546.2,635.1 L549.0,631.9 L550.4,631.3 L557.1,632.0 L557.8,630.8 L560.4,630.2 L564.5,629.7 L565.6,626.6 L565.3,622.0 L566.9,620.7 L568.2,618.8 L567.4,613.5 L567.0,609.6 L567.8,607.6 L571.2,610.0 L573.4,611.2 L574.8,613.0 L577.7,616.4 L581.6,617.3 L585.8,617.0 L589.1,618.4 L591.6,620.4 L594.0,621.5 L597.6,623.0 L600.8,620.3 L603.3,623.0 L606.4,620.9 L607.8,618.5 L613.7,616.8 L615.2,614.2 L616.8,610.8 L618.6,606.5 L619.6,603.2 L616.7,600.7 L614.9,598.9 L613.0,596.6 L611.3,597.2 L614.7,595.3 L616.8,595.5 L621.7,592.5 L624.7,591.8 L626.5,591.5 L630.1,587.1 L633.9,587.5 L633.8,586.4 L638.0,583.8 L636.6,581.3 L638.0,578.0 L637.2,571.9 L638.0,570.3 L634.8,568.2 L633.2,565.5 L630.3,563.1 L628.3,561.1 L624.3,559.5 L620.0,558.2 L619.3,557.0 L619.3,553.2 L616.2,551.2 L617.0,547.3 L614.3,544.9 L615.3,540.0 L614.0,538.0 L615.1,535.9 L616.2,532.0 L616.4,529.6 L616.4,526.2 L617.3,521.9 L618.7,519.8 L619.2,517.3 L618.7,513.8 L619.3,511.3 L623.0,510.8 L626.7,508.9 L628.4,508.5 L633.6,505.1 L635.4,506.0 L636.0,502.8 L635.5,499.7 L634.2,496.8 L635.7,493.9 L634.8,491.1 L634.0,487.8 L636.1,483.7 L635.4,481.7 L634.5,478.7 L630.9,475.5 L631.0,473.8 L629.6,471.1 L625.2,469.4 L625.8,464.5 L625.3,462.2 L622.0,460.3 L622.5,458.2 L623.9,453.5 L625.0,451.6 L627.0,449.9 L630.0,446.8 L629.9,444.2 L627.9,438.7 L624.3,437.0 L622.9,433.0 L622.0,430.7 L619.6,426.8 L620.5,422.9 L619.3,420.0 L616.0,419.2 L612.7,416.6 L611.0,414.0 L614.1,413.1 L615.3,409.1 L619.6,410.5 L620.3,406.7 L623.1,405.2 L626.0,404.0 L625.6,400.0 L624.0,397.0 L627.7,396.3 L629.0,392.0 L631.3,388.0 L632.6,386.2 L633.4,384.4 L635.5,380.4 L636.0,378.0 L633.5,375.7 L633.5,373.1 L630.2,369.7 L629.0,368.0 L629.1,364.1 L628.1,360.7 L625.1,357.2 L624.0,354.0 L627.7,351.0 L629.8,347.4 L631.1,344.3 L632.0,342.0 L630.1,339.3 L630.7,335.9 L627.6,332.4 L630.1,329.5 L629.0,325.0 L629.6,321.7 L631.4,319.0 L630.5,315.6 L629.9,314.2 L631.4,309.6 L631.1,305.5 L629.6,305.7 L630.5,300.4 L631.3,298.2 L629.8,294.7Z" fill="none" stroke="#6a6a6a" stroke-width="2.2"/>
<clipPath id="oc"><path d="M631.0,292.0 L632.4,289.1 L635.8,288.3 L638.5,284.2 L640.0,281.4 L642.5,277.7 L645.5,277.0 L649.1,274.7 L649.9,272.6 L654.6,273.7 L655.7,269.8 L660.4,267.7 L662.4,267.6 L665.0,265.0 L668.5,263.3 L669.8,261.7 L671.7,259.3 L675.2,255.5 L676.3,256.2 L678.1,251.9 L681.5,251.0 L684.6,249.8 L687.7,248.2 L690.6,248.5 L693.4,247.3 L696.0,246.0 L699.6,244.2 L701.6,244.3 L705.4,243.1 L709.8,243.9 L711.2,242.2 L716.9,242.3 L716.7,239.8 L722.3,239.8 L725.0,239.0 L727.1,238.5 L732.1,239.0 L734.9,237.8 L735.6,239.8 L741.9,239.7 L744.3,238.1 L744.8,239.0 L751.2,237.3 L753.0,238.0 L754.2,238.2 L760.6,236.4 L760.8,237.3 L766.5,235.1 L767.8,234.8 L770.4,233.1 L774.5,234.3 L777.0,233.0 L781.7,232.2 L783.4,234.2 L786.0,232.3 L790.4,232.0 L793.9,231.8 L796.5,231.8 L800.2,230.1 L801.8,229.3 L805.5,226.8 L808.6,226.3 L810.2,226.0 L815.9,225.1 L818.2,227.4 L819.6,227.5 L824.9,226.6 L826.8,228.1 L829.9,226.7 L833.8,225.0 L835.2,226.1 L840.0,225.0 L843.0,224.6 L844.1,226.9 L849.0,226.4 L852.6,226.3 L854.7,225.8 L857.8,229.6 L859.1,230.9 L863.3,232.3 L866.5,234.7 L867.3,237.8 L867.8,242.0 L868.4,244.5 L870.2,247.7 L872.2,250.3 L875.5,251.9 L876.3,256.3 L873.3,258.4 L871.5,261.0 L868.4,264.0 L870.4,266.6 L872.4,270.0 L868.6,267.7 L867.8,268.2 L863.0,269.2 L859.5,268.1 L856.6,268.0 L854.2,271.0 L851.7,275.4 L850.8,276.0 L853.2,278.6 L851.4,283.2 L852.7,285.8 L854.7,290.7 L855.4,291.5 L859.3,294.1 L860.6,297.5 L864.0,295.4 L868.4,297.5 L872.4,295.6 L877.5,297.0 L879.0,296.1 L882.2,295.6 L885.1,297.4 L887.3,300.7 L891.5,303.0 L892.5,304.4 L894.9,305.9 L898.0,309.3 L900.8,313.0 L902.0,315.0 L900.7,318.9 L903.8,321.0 L906.9,321.6 L908.5,324.6 L910.4,327.9 L913.6,329.0 L912.8,332.3 L912.0,334.9 L910.3,338.8 L909.7,340.8 L910.8,344.1 L913.5,346.3 L914.2,349.6 L915.8,353.0 L917.6,356.5 L919.4,358.7 L920.1,361.3 L923.5,364.4 L927.7,364.7 L929.0,363.5 L933.3,364.4 L936.1,361.7 L939.2,358.3 L940.7,358.3 L942.4,354.9 L946.6,352.5 L949.0,350.6 L953.1,350.7 L956.2,351.4 L957.7,352.8 L959.7,354.7 L963.2,355.4 L966.7,358.5 L970.2,359.4 L972.4,358.9 L977.3,358.2 L980.6,359.8 L982.6,360.6 L986.4,360.4 L988.9,362.0 L993.0,364.7 L995.2,367.0 L998.5,368.8 L1000.0,370.3 L1003.5,369.8 L1007.0,369.5 L1010.0,368.3 L1013.0,366.0 L1016.3,363.6 L1018.0,359.3 L1019.1,356.2 L1021.2,356.0 L1023.7,352.6 L1027.2,350.4 L1028.8,346.4 L1030.8,346.3 L1033.7,343.5 L1035.5,340.8 L1036.9,338.8 L1043.2,339.1 L1043.2,336.6 L1048.4,335.9 L1049.8,333.3 L1053.0,333.0 L1053.6,335.7 L1056.6,338.6 L1058.8,342.3 L1059.0,344.7 L1060.7,347.9 L1063.3,349.5 L1065.1,350.2 L1066.7,355.4 L1068.9,358.0 L1071.8,359.3 L1071.0,361.3 L1074.8,364.4 L1077.9,366.1 L1080.0,367.5 L1079.9,369.8 L1084.3,372.6 L1087.7,375.3 L1088.6,376.2 L1086.4,379.1 L1086.8,381.3 L1085.9,385.1 L1084.9,389.4 L1082.7,392.0 L1082.2,393.8 L1080.6,397.6 L1080.8,402.3 L1081.3,405.0 L1080.7,407.8 L1079.0,411.6 L1077.9,413.7 L1077.9,415.7 L1076.8,420.0 L1076.6,423.8 L1078.4,424.6 L1076.7,429.9 L1079.6,431.3 L1079.8,435.7 L1080.5,436.7 L1081.9,441.5 L1080.7,444.0 L1081.7,446.3 L1081.4,449.9 L1083.0,452.7 L1081.7,456.2 L1081.1,459.0 L1082.3,462.7 L1081.5,465.9 L1079.8,467.6 L1080.6,471.4 L1081.0,476.4 L1079.2,478.5 L1078.8,480.3 L1079.9,484.6 L1079.0,488.3 L1079.0,491.0 L1081.9,494.1 L1080.0,496.0 L1082.7,499.7 L1080.9,501.2 L1084.7,506.0 L1084.4,506.8 L1086.4,512.5 L1085.5,512.7 L1087.0,518.7 L1088.6,518.4 L1089.6,524.3 L1090.7,524.0 L1089.7,529.2 L1092.0,531.0 L1093.0,533.7 L1095.4,537.4 L1095.3,538.9 L1096.9,543.1 L1099.9,545.0 L1099.4,548.3 L1101.1,549.4 L1102.7,553.9 L1104.0,556.0 L1104.9,560.9 L1105.1,560.4 L1103.7,566.7 L1106.2,568.4 L1104.1,570.7 L1105.0,576.5 L1105.7,576.5 L1105.6,581.9 L1106.9,584.5 L1105.8,586.5 L1108.7,591.7 L1107.5,593.8 L1105.8,596.7 L1103.8,601.3 L1102.4,605.2 L1100.5,607.3 L1099.6,609.2 L1097.9,612.4 L1098.0,615.6 L1095.9,615.0 L1090.6,617.3 L1089.1,617.0 L1086.4,617.7 L1080.7,617.6 L1080.6,615.8 L1076.6,618.6 L1071.3,617.8 L1070.0,618.8 L1069.8,620.4 L1068.9,623.5 L1066.3,627.9 L1064.8,632.4 L1062.7,634.9 L1064.9,638.3 L1065.5,639.4 L1067.0,643.3 L1066.1,646.1 L1068.1,649.5 L1067.1,652.3 L1068.0,655.0 L1070.2,659.1 L1068.7,660.4 L1069.0,664.4 L1071.3,666.1 L1072.8,667.7 L1076.7,670.3 L1079.6,672.8 L1078.3,676.5 L1076.3,679.1 L1075.4,683.4 L1073.7,686.2 L1072.3,689.7 L1070.4,689.7 L1068.1,692.5 L1065.4,696.0 L1063.1,696.8 L1061.3,699.7 L1060.6,702.4 L1059.2,705.9 L1059.5,708.7 L1058.1,713.4 L1058.5,717.1 L1055.7,720.2 L1054.1,720.2 L1052.8,724.3 L1051.7,728.5 L1050.4,728.9 L1048.0,732.0 L1043.9,732.1 L1042.6,732.9 L1038.6,734.3 L1034.6,735.2 L1032.1,736.0 L1029.0,736.0 L1025.6,736.3 L1024.6,737.3 L1018.9,739.1 L1018.8,740.0 L1014.0,740.3 L1013.4,736.8 L1012.1,735.0 L1007.3,731.3 L1006.4,730.4 L1006.6,726.0 L1003.6,723.5 L1002.6,726.8 L996.7,725.0 L995.2,727.7 L994.1,732.4 L995.1,733.3 L995.6,737.5 L993.3,742.9 L995.2,744.6 L996.9,748.6 L997.9,750.9 L1001.6,751.6 L1003.6,755.0 L1006.3,756.6 L1007.8,758.0 L1011.7,759.7 L1014.0,761.4 L1014.0,764.5 L1012.4,766.7 L1010.1,769.9 L1009.1,773.4 L1007.4,775.6 L1005.2,777.8 L1004.2,781.8 L1001.5,784.6 L999.4,783.1 L997.1,778.8 L993.5,776.6 L993.8,775.0 L992.1,772.1 L988.9,769.9 L985.2,769.8 L984.9,770.9 L980.1,770.1 L976.8,767.6 L974.0,767.8 L972.7,770.3 L971.7,774.6 L970.2,775.7 L967.9,777.2 L965.8,781.6 L964.4,784.5 L962.8,785.4 L961.4,788.9 L958.9,788.3 L954.6,790.6 L951.0,788.6 L947.2,790.6 L944.8,790.4 L941.5,790.8 L937.5,790.6 L936.2,792.5 L931.4,792.5 L929.0,796.0 L926.9,801.0 L926.1,803.6 L926.3,805.8 L925.5,808.9 L923.4,813.0 L920.6,815.3 L918.3,818.3 L917.3,818.5 L915.2,822.9 L911.4,825.6 L908.7,828.2 L906.6,830.0 L906.2,833.3 L906.9,837.8 L907.3,839.4 L905.6,841.5 L904.8,846.3 L905.9,850.0 L903.8,852.5 L903.5,855.9 L903.4,858.8 L904.3,861.1 L903.1,865.6 L901.3,870.3 L901.0,872.0 L900.2,874.1 L897.8,877.6 L896.4,880.8 L895.3,882.5 L893.0,885.4 L891.1,890.1 L890.2,893.2 L888.4,893.6 L887.0,897.0 L889.4,902.3 L887.0,901.6 L890.1,908.0 L888.0,909.7 L891.0,912.8 L889.3,917.3 L892.3,919.2 L892.5,923.0 L894.1,924.0 L896.7,928.9 L898.9,931.6 L899.9,933.2 L902.0,936.0 L906.4,934.2 L908.8,936.0 L910.7,935.4 L916.0,935.2 L918.8,936.0 L919.7,939.0 L920.4,941.6 L920.1,946.1 L919.8,947.6 L921.6,951.8 L919.5,954.3 L922.8,957.6 L922.5,960.6 L922.8,962.8 L922.7,968.6 L922.8,970.4 L923.0,974.0 L920.6,977.4 L917.5,979.0 L915.3,981.1 L915.7,983.6 L915.4,988.2 L913.7,992.5 L913.0,995.0 L910.8,996.4 L907.6,998.4 L905.2,998.6 L900.9,1002.3 L900.9,1001.5 L896.7,1004.0 L892.3,1007.8 L891.9,1007.8 L888.0,1010.0 L884.0,1007.9 L880.0,1007.5 L877.8,1010.8 L877.5,1014.0 L876.7,1018.0 L873.4,1017.3 L870.6,1018.5 L868.6,1017.3 L863.2,1017.2 L861.7,1019.1 L859.9,1018.2 L854.7,1017.3 L852.5,1018.0 L850.2,1013.8 L849.0,1010.0 L846.1,1006.9 L846.7,1003.0 L850.3,999.0 L853.3,997.5 L854.5,993.9 L855.0,990.0 L852.4,989.8 L849.0,987.5 L846.3,990.2 L845.1,990.6 L843.3,995.0 L840.3,994.2 L836.7,992.5 L832.9,991.4 L832.7,987.6 L829.9,983.8 L828.4,981.7 L825.0,980.0 L822.2,978.4 L820.7,976.7 L818.3,974.8 L815.3,972.8 L813.0,971.0 L812.2,968.4 L809.0,963.9 L805.2,961.8 L805.3,959.4 L801.4,960.6 L801.1,963.2 L798.9,965.2 L795.6,966.1 L792.7,970.1 L791.0,970.6 L789.0,971.4 L786.6,976.1 L785.1,977.7 L784.0,979.4 L782.3,982.5 L779.3,985.5 L775.6,988.6 L774.4,990.0 L772.0,992.9 L770.2,994.3 L766.4,994.7 L765.6,998.0 L762.9,1000.8 L758.7,1001.2 L757.5,1004.0 L753.6,1004.1 L751.0,1005.9 L747.4,1005.8 L743.4,1007.0 L743.2,1004.6 L741.0,1000.6 L742.2,997.1 L741.1,995.4 L741.0,991.1 L740.4,987.9 L739.0,986.1 L738.5,981.2 L737.8,979.0 L736.8,974.8 L736.3,974.4 L736.9,968.4 L735.3,967.6 L737.5,964.1 L734.2,959.5 L735.2,959.4 L733.5,953.2 L732.7,952.7 L732.3,947.7 L732.3,946.3 L732.0,942.5 L729.3,940.9 L727.1,939.2 L722.2,936.8 L721.0,934.0 L718.9,933.2 L717.3,933.6 L712.5,931.0 L711.0,932.7 L709.8,934.5 L708.5,939.6 L706.7,942.7 L704.4,943.2 L701.9,945.9 L699.7,949.3 L698.0,951.0 L696.7,953.6 L695.6,956.6 L694.2,958.0 L688.2,959.4 L687.8,960.6 L684.6,962.0 L681.3,964.5 L678.8,965.0 L676.1,966.3 L669.8,966.2 L667.5,967.8 L665.2,965.3 L663.8,964.3 L658.9,962.2 L656.4,959.2 L655.1,956.5 L653.1,954.9 L651.0,954.2 L647.8,951.0 L645.5,947.5 L644.2,945.5 L641.2,943.1 L638.9,938.7 L636.6,937.0 L634.0,934.4 L634.4,930.5 L632.0,929.9 L628.7,925.8 L628.0,921.6 L626.4,920.5 L623.2,916.9 L622.5,914.4 L622.0,911.4 L619.3,907.5 L616.9,906.6 L615.6,902.2 L614.0,900.0 L613.8,896.8 L611.2,895.6 L609.5,891.8 L610.4,889.0 L607.5,887.6 L607.2,882.1 L605.6,880.6 L605.2,876.2 L604.0,874.9 L603.8,870.4 L603.3,868.0 L601.7,864.8 L601.9,859.9 L600.0,858.0 L599.2,854.0 L596.5,854.0 L597.4,849.5 L595.1,846.5 L592.2,844.8 L593.9,840.2 L590.7,838.6 L590.7,834.9 L588.8,832.8 L587.7,829.8 L586.9,825.1 L586.8,824.4 L585.9,817.4 L586.0,816.0 L585.3,814.0 L580.9,810.1 L578.6,809.1 L577.5,807.5 L577.2,803.7 L574.8,801.2 L573.3,797.2 L570.0,799.1 L566.7,799.4 L563.3,801.0 L560.9,799.2 L554.0,802.0 L553.7,800.2 L549.0,801.6 L545.3,802.8 L541.3,800.9 L540.8,799.7 L537.9,800.4 L533.6,799.4 L531.4,794.9 L530.5,792.7 L528.4,789.2 L526.5,787.3 L524.8,784.0 L523.6,779.9 L521.3,778.6 L521.5,775.1 L523.5,771.4 L527.0,768.5 L522.6,766.3 L524.0,762.7 L522.7,761.3 L523.9,756.2 L524.1,753.3 L522.0,751.7 L523.0,746.5 L522.6,744.3 L524.8,742.3 L526.3,738.5 L527.2,736.5 L528.7,733.9 L530.3,731.0 L529.2,728.6 L525.4,723.8 L522.6,722.2 L523.2,718.6 L521.4,716.9 L522.1,711.3 L522.6,709.0 L525.6,708.9 L528.7,704.6 L530.8,705.3 L532.4,703.3 L538.1,700.9 L539.2,700.2 L538.1,695.5 L536.8,693.4 L533.9,690.1 L534.8,685.9 L536.5,684.2 L538.3,682.4 L540.3,678.0 L537.2,674.1 L536.5,670.3 L535.9,667.0 L536.3,664.9 L538.0,660.5 L536.7,655.9 L537.9,654.4 L536.5,652.3 L537.3,647.2 L538.0,645.0 L541.0,642.9 L542.0,639.2 L543.5,635.2 L546.2,635.1 L549.0,631.9 L550.4,631.3 L557.1,632.0 L557.8,630.8 L560.4,630.2 L564.5,629.7 L565.6,626.6 L565.3,622.0 L566.9,620.7 L568.2,618.8 L567.4,613.5 L567.0,609.6 L567.8,607.6 L571.2,610.0 L573.4,611.2 L574.8,613.0 L577.7,616.4 L581.6,617.3 L585.8,617.0 L589.1,618.4 L591.6,620.4 L594.0,621.5 L597.6,623.0 L600.8,620.3 L603.3,623.0 L606.4,620.9 L607.8,618.5 L613.7,616.8 L615.2,614.2 L616.8,610.8 L618.6,606.5 L619.6,603.2 L616.7,600.7 L614.9,598.9 L613.0,596.6 L611.3,597.2 L614.7,595.3 L616.8,595.5 L621.7,592.5 L624.7,591.8 L626.5,591.5 L630.1,587.1 L633.9,587.5 L633.8,586.4 L638.0,583.8 L636.6,581.3 L638.0,578.0 L637.2,571.9 L638.0,570.3 L634.8,568.2 L633.2,565.5 L630.3,563.1 L628.3,561.1 L624.3,559.5 L620.0,558.2 L619.3,557.0 L619.3,553.2 L616.2,551.2 L617.0,547.3 L614.3,544.9 L615.3,540.0 L614.0,538.0 L615.1,535.9 L616.2,532.0 L616.4,529.6 L616.4,526.2 L617.3,521.9 L618.7,519.8 L619.2,517.3 L618.7,513.8 L619.3,511.3 L623.0,510.8 L626.7,508.9 L628.4,508.5 L633.6,505.1 L635.4,506.0 L636.0,502.8 L635.5,499.7 L634.2,496.8 L635.7,493.9 L634.8,491.1 L634.0,487.8 L636.1,483.7 L635.4,481.7 L634.5,478.7 L630.9,475.5 L631.0,473.8 L629.6,471.1 L625.2,469.4 L625.8,464.5 L625.3,462.2 L622.0,460.3 L622.5,458.2 L623.9,453.5 L625.0,451.6 L627.0,449.9 L630.0,446.8 L629.9,444.2 L627.9,438.7 L624.3,437.0 L622.9,433.0 L622.0,430.7 L619.6,426.8 L620.5,422.9 L619.3,420.0 L616.0,419.2 L612.7,416.6 L611.0,414.0 L614.1,413.1 L615.3,409.1 L619.6,410.5 L620.3,406.7 L623.1,405.2 L626.0,404.0 L625.6,400.0 L624.0,397.0 L627.7,396.3 L629.0,392.0 L631.3,388.0 L632.6,386.2 L633.4,384.4 L635.5,380.4 L636.0,378.0 L633.5,375.7 L633.5,373.1 L630.2,369.7 L629.0,368.0 L629.1,364.1 L628.1,360.7 L625.1,357.2 L624.0,354.0 L627.7,351.0 L629.8,347.4 L631.1,344.3 L632.0,342.0 L630.1,339.3 L630.7,335.9 L627.6,332.4 L630.1,329.5 L629.0,325.0 L629.6,321.7 L631.4,319.0 L630.5,315.6 L629.9,314.2 L631.4,309.6 L631.1,305.5 L629.6,305.7 L630.5,300.4 L631.3,298.2 L629.8,294.7Z"/></clipPath>
<path d="M631.0,292.0 L632.4,289.1 L635.8,288.3 L638.5,284.2 L640.0,281.4 L642.5,277.7 L645.5,277.0 L649.1,274.7 L649.9,272.6 L654.6,273.7 L655.7,269.8 L660.4,267.7 L662.4,267.6 L665.0,265.0 L668.5,263.3 L669.8,261.7 L671.7,259.3 L675.2,255.5 L676.3,256.2 L678.1,251.9 L681.5,251.0 L684.6,249.8 L687.7,248.2 L690.6,248.5 L693.4,247.3 L696.0,246.0 L699.6,244.2 L701.6,244.3 L705.4,243.1 L709.8,243.9 L711.2,242.2 L716.9,242.3 L716.7,239.8 L722.3,239.8 L725.0,239.0 L727.1,238.5 L732.1,239.0 L734.9,237.8 L735.6,239.8 L741.9,239.7 L744.3,238.1 L744.8,239.0 L751.2,237.3 L753.0,238.0 L754.2,238.2 L760.6,236.4 L760.8,237.3 L766.5,235.1 L767.8,234.8 L770.4,233.1 L774.5,234.3 L777.0,233.0 L781.7,232.2 L783.4,234.2 L786.0,232.3 L790.4,232.0 L793.9,231.8 L796.5,231.8 L800.2,230.1 L801.8,229.3 L805.5,226.8 L808.6,226.3 L810.2,226.0 L815.9,225.1 L818.2,227.4 L819.6,227.5 L824.9,226.6 L826.8,228.1 L829.9,226.7 L833.8,225.0 L835.2,226.1 L840.0,225.0 L843.0,224.6 L844.1,226.9 L849.0,226.4 L852.6,226.3 L854.7,225.8 L857.8,229.6 L859.1,230.9 L863.3,232.3 L866.5,234.7 L867.3,237.8 L867.8,242.0 L868.4,244.5 L870.2,247.7 L872.2,250.3 L875.5,251.9 L876.3,256.3 L873.3,258.4 L871.5,261.0 L868.4,264.0 L870.4,266.6 L872.4,270.0 L868.6,267.7 L867.8,268.2 L863.0,269.2 L859.5,268.1 L856.6,268.0 L854.2,271.0 L851.7,275.4 L850.8,276.0 L853.2,278.6 L851.4,283.2 L852.7,285.8 L854.7,290.7 L855.4,291.5 L859.3,294.1 L860.6,297.5 L864.0,295.4 L868.4,297.5 L872.4,295.6 L877.5,297.0 L879.0,296.1 L882.2,295.6 L885.1,297.4 L887.3,300.7 L891.5,303.0 L892.5,304.4 L894.9,305.9 L898.0,309.3 L900.8,313.0 L902.0,315.0 L900.7,318.9 L903.8,321.0 L906.9,321.6 L908.5,324.6 L910.4,327.9 L913.6,329.0 L912.8,332.3 L912.0,334.9 L910.3,338.8 L909.7,340.8 L910.8,344.1 L913.5,346.3 L914.2,349.6 L915.8,353.0 L917.6,356.5 L919.4,358.7 L920.1,361.3 L923.5,364.4 L927.7,364.7 L929.0,363.5 L933.3,364.4 L936.1,361.7 L939.2,358.3 L940.7,358.3 L942.4,354.9 L946.6,352.5 L949.0,350.6 L953.1,350.7 L956.2,351.4 L957.7,352.8 L959.7,354.7 L963.2,355.4 L966.7,358.5 L970.2,359.4 L972.4,358.9 L977.3,358.2 L980.6,359.8 L982.6,360.6 L986.4,360.4 L988.9,362.0 L993.0,364.7 L995.2,367.0 L998.5,368.8 L1000.0,370.3 L1003.5,369.8 L1007.0,369.5 L1010.0,368.3 L1013.0,366.0 L1016.3,363.6 L1018.0,359.3 L1019.1,356.2 L1021.2,356.0 L1023.7,352.6 L1027.2,350.4 L1028.8,346.4 L1030.8,346.3 L1033.7,343.5 L1035.5,340.8 L1036.9,338.8 L1043.2,339.1 L1043.2,336.6 L1048.4,335.9 L1049.8,333.3 L1053.0,333.0 L1053.6,335.7 L1056.6,338.6 L1058.8,342.3 L1059.0,344.7 L1060.7,347.9 L1063.3,349.5 L1065.1,350.2 L1066.7,355.4 L1068.9,358.0 L1071.8,359.3 L1071.0,361.3 L1074.8,364.4 L1077.9,366.1 L1080.0,367.5 L1079.9,369.8 L1084.3,372.6 L1087.7,375.3 L1088.6,376.2 L1086.4,379.1 L1086.8,381.3 L1085.9,385.1 L1084.9,389.4 L1082.7,392.0 L1082.2,393.8 L1080.6,397.6 L1080.8,402.3 L1081.3,405.0 L1080.7,407.8 L1079.0,411.6 L1077.9,413.7 L1077.9,415.7 L1076.8,420.0 L1076.6,423.8 L1078.4,424.6 L1076.7,429.9 L1079.6,431.3 L1079.8,435.7 L1080.5,436.7 L1081.9,441.5 L1080.7,444.0 L1081.7,446.3 L1081.4,449.9 L1083.0,452.7 L1081.7,456.2 L1081.1,459.0 L1082.3,462.7 L1081.5,465.9 L1079.8,467.6 L1080.6,471.4 L1081.0,476.4 L1079.2,478.5 L1078.8,480.3 L1079.9,484.6 L1079.0,488.3 L1079.0,491.0 L1081.9,494.1 L1080.0,496.0 L1082.7,499.7 L1080.9,501.2 L1084.7,506.0 L1084.4,506.8 L1086.4,512.5 L1085.5,512.7 L1087.0,518.7 L1088.6,518.4 L1089.6,524.3 L1090.7,524.0 L1089.7,529.2 L1092.0,531.0 L1093.0,533.7 L1095.4,537.4 L1095.3,538.9 L1096.9,543.1 L1099.9,545.0 L1099.4,548.3 L1101.1,549.4 L1102.7,553.9 L1104.0,556.0 L1104.9,560.9 L1105.1,560.4 L1103.7,566.7 L1106.2,568.4 L1104.1,570.7 L1105.0,576.5 L1105.7,576.5 L1105.6,581.9 L1106.9,584.5 L1105.8,586.5 L1108.7,591.7 L1107.5,593.8 L1105.8,596.7 L1103.8,601.3 L1102.4,605.2 L1100.5,607.3 L1099.6,609.2 L1097.9,612.4 L1098.0,615.6 L1095.9,615.0 L1090.6,617.3 L1089.1,617.0 L1086.4,617.7 L1080.7,617.6 L1080.6,615.8 L1076.6,618.6 L1071.3,617.8 L1070.0,618.8 L1069.8,620.4 L1068.9,623.5 L1066.3,627.9 L1064.8,632.4 L1062.7,634.9 L1064.9,638.3 L1065.5,639.4 L1067.0,643.3 L1066.1,646.1 L1068.1,649.5 L1067.1,652.3 L1068.0,655.0 L1070.2,659.1 L1068.7,660.4 L1069.0,664.4 L1071.3,666.1 L1072.8,667.7 L1076.7,670.3 L1079.6,672.8 L1078.3,676.5 L1076.3,679.1 L1075.4,683.4 L1073.7,686.2 L1072.3,689.7 L1070.4,689.7 L1068.1,692.5 L1065.4,696.0 L1063.1,696.8 L1061.3,699.7 L1060.6,702.4 L1059.2,705.9 L1059.5,708.7 L1058.1,713.4 L1058.5,717.1 L1055.7,720.2 L1054.1,720.2 L1052.8,724.3 L1051.7,728.5 L1050.4,728.9 L1048.0,732.0 L1043.9,732.1 L1042.6,732.9 L1038.6,734.3 L1034.6,735.2 L1032.1,736.0 L1029.0,736.0 L1025.6,736.3 L1024.6,737.3 L1018.9,739.1 L1018.8,740.0 L1014.0,740.3 L1013.4,736.8 L1012.1,735.0 L1007.3,731.3 L1006.4,730.4 L1006.6,726.0 L1003.6,723.5 L1002.6,726.8 L996.7,725.0 L995.2,727.7 L994.1,732.4 L995.1,733.3 L995.6,737.5 L993.3,742.9 L995.2,744.6 L996.9,748.6 L997.9,750.9 L1001.6,751.6 L1003.6,755.0 L1006.3,756.6 L1007.8,758.0 L1011.7,759.7 L1014.0,761.4 L1014.0,764.5 L1012.4,766.7 L1010.1,769.9 L1009.1,773.4 L1007.4,775.6 L1005.2,777.8 L1004.2,781.8 L1001.5,784.6 L999.4,783.1 L997.1,778.8 L993.5,776.6 L993.8,775.0 L992.1,772.1 L988.9,769.9 L985.2,769.8 L984.9,770.9 L980.1,770.1 L976.8,767.6 L974.0,767.8 L972.7,770.3 L971.7,774.6 L970.2,775.7 L967.9,777.2 L965.8,781.6 L964.4,784.5 L962.8,785.4 L961.4,788.9 L958.9,788.3 L954.6,790.6 L951.0,788.6 L947.2,790.6 L944.8,790.4 L941.5,790.8 L937.5,790.6 L936.2,792.5 L931.4,792.5 L929.0,796.0 L926.9,801.0 L926.1,803.6 L926.3,805.8 L925.5,808.9 L923.4,813.0 L920.6,815.3 L918.3,818.3 L917.3,818.5 L915.2,822.9 L911.4,825.6 L908.7,828.2 L906.6,830.0 L906.2,833.3 L906.9,837.8 L907.3,839.4 L905.6,841.5 L904.8,846.3 L905.9,850.0 L903.8,852.5 L903.5,855.9 L903.4,858.8 L904.3,861.1 L903.1,865.6 L901.3,870.3 L901.0,872.0 L900.2,874.1 L897.8,877.6 L896.4,880.8 L895.3,882.5 L893.0,885.4 L891.1,890.1 L890.2,893.2 L888.4,893.6 L887.0,897.0 L889.4,902.3 L887.0,901.6 L890.1,908.0 L888.0,909.7 L891.0,912.8 L889.3,917.3 L892.3,919.2 L892.5,923.0 L894.1,924.0 L896.7,928.9 L898.9,931.6 L899.9,933.2 L902.0,936.0 L906.4,934.2 L908.8,936.0 L910.7,935.4 L916.0,935.2 L918.8,936.0 L919.7,939.0 L920.4,941.6 L920.1,946.1 L919.8,947.6 L921.6,951.8 L919.5,954.3 L922.8,957.6 L922.5,960.6 L922.8,962.8 L922.7,968.6 L922.8,970.4 L923.0,974.0 L920.6,977.4 L917.5,979.0 L915.3,981.1 L915.7,983.6 L915.4,988.2 L913.7,992.5 L913.0,995.0 L910.8,996.4 L907.6,998.4 L905.2,998.6 L900.9,1002.3 L900.9,1001.5 L896.7,1004.0 L892.3,1007.8 L891.9,1007.8 L888.0,1010.0 L884.0,1007.9 L880.0,1007.5 L877.8,1010.8 L877.5,1014.0 L876.7,1018.0 L873.4,1017.3 L870.6,1018.5 L868.6,1017.3 L863.2,1017.2 L861.7,1019.1 L859.9,1018.2 L854.7,1017.3 L852.5,1018.0 L850.2,1013.8 L849.0,1010.0 L846.1,1006.9 L846.7,1003.0 L850.3,999.0 L853.3,997.5 L854.5,993.9 L855.0,990.0 L852.4,989.8 L849.0,987.5 L846.3,990.2 L845.1,990.6 L843.3,995.0 L840.3,994.2 L836.7,992.5 L832.9,991.4 L832.7,987.6 L829.9,983.8 L828.4,981.7 L825.0,980.0 L822.2,978.4 L820.7,976.7 L818.3,974.8 L815.3,972.8 L813.0,971.0 L812.2,968.4 L809.0,963.9 L805.2,961.8 L805.3,959.4 L801.4,960.6 L801.1,963.2 L798.9,965.2 L795.6,966.1 L792.7,970.1 L791.0,970.6 L789.0,971.4 L786.6,976.1 L785.1,977.7 L784.0,979.4 L782.3,982.5 L779.3,985.5 L775.6,988.6 L774.4,990.0 L772.0,992.9 L770.2,994.3 L766.4,994.7 L765.6,998.0 L762.9,1000.8 L758.7,1001.2 L757.5,1004.0 L753.6,1004.1 L751.0,1005.9 L747.4,1005.8 L743.4,1007.0 L743.2,1004.6 L741.0,1000.6 L742.2,997.1 L741.1,995.4 L741.0,991.1 L740.4,987.9 L739.0,986.1 L738.5,981.2 L737.8,979.0 L736.8,974.8 L736.3,974.4 L736.9,968.4 L735.3,967.6 L737.5,964.1 L734.2,959.5 L735.2,959.4 L733.5,953.2 L732.7,952.7 L732.3,947.7 L732.3,946.3 L732.0,942.5 L729.3,940.9 L727.1,939.2 L722.2,936.8 L721.0,934.0 L718.9,933.2 L717.3,933.6 L712.5,931.0 L711.0,932.7 L709.8,934.5 L708.5,939.6 L706.7,942.7 L704.4,943.2 L701.9,945.9 L699.7,949.3 L698.0,951.0 L696.7,953.6 L695.6,956.6 L694.2,958.0 L688.2,959.4 L687.8,960.6 L684.6,962.0 L681.3,964.5 L678.8,965.0 L676.1,966.3 L669.8,966.2 L667.5,967.8 L665.2,965.3 L663.8,964.3 L658.9,962.2 L656.4,959.2 L655.1,956.5 L653.1,954.9 L651.0,954.2 L647.8,951.0 L645.5,947.5 L644.2,945.5 L641.2,943.1 L638.9,938.7 L636.6,937.0 L634.0,934.4 L634.4,930.5 L632.0,929.9 L628.7,925.8 L628.0,921.6 L626.4,920.5 L623.2,916.9 L622.5,914.4 L622.0,911.4 L619.3,907.5 L616.9,906.6 L615.6,902.2 L614.0,900.0 L613.8,896.8 L611.2,895.6 L609.5,891.8 L610.4,889.0 L607.5,887.6 L607.2,882.1 L605.6,880.6 L605.2,876.2 L604.0,874.9 L603.8,870.4 L603.3,868.0 L601.7,864.8 L601.9,859.9 L600.0,858.0 L599.2,854.0 L596.5,854.0 L597.4,849.5 L595.1,846.5 L592.2,844.8 L593.9,840.2 L590.7,838.6 L590.7,834.9 L588.8,832.8 L587.7,829.8 L586.9,825.1 L586.8,824.4 L585.9,817.4 L586.0,816.0 L585.3,814.0 L580.9,810.1 L578.6,809.1 L577.5,807.5 L577.2,803.7 L574.8,801.2 L573.3,797.2 L570.0,799.1 L566.7,799.4 L563.3,801.0 L560.9,799.2 L554.0,802.0 L553.7,800.2 L549.0,801.6 L545.3,802.8 L541.3,800.9 L540.8,799.7 L537.9,800.4 L533.6,799.4 L531.4,794.9 L530.5,792.7 L528.4,789.2 L526.5,787.3 L524.8,784.0 L523.6,779.9 L521.3,778.6 L521.5,775.1 L523.5,771.4 L527.0,768.5 L522.6,766.3 L524.0,762.7 L522.7,761.3 L523.9,756.2 L524.1,753.3 L522.0,751.7 L523.0,746.5 L522.6,744.3 L524.8,742.3 L526.3,738.5 L527.2,736.5 L528.7,733.9 L530.3,731.0 L529.2,728.6 L525.4,723.8 L522.6,722.2 L523.2,718.6 L521.4,716.9 L522.1,711.3 L522.6,709.0 L525.6,708.9 L528.7,704.6 L530.8,705.3 L532.4,703.3 L538.1,700.9 L539.2,700.2 L538.1,695.5 L536.8,693.4 L533.9,690.1 L534.8,685.9 L536.5,684.2 L538.3,682.4 L540.3,678.0 L537.2,674.1 L536.5,670.3 L535.9,667.0 L536.3,664.9 L538.0,660.5 L536.7,655.9 L537.9,654.4 L536.5,652.3 L537.3,647.2 L538.0,645.0 L541.0,642.9 L542.0,639.2 L543.5,635.2 L546.2,635.1 L549.0,631.9 L550.4,631.3 L557.1,632.0 L557.8,630.8 L560.4,630.2 L564.5,629.7 L565.6,626.6 L565.3,622.0 L566.9,620.7 L568.2,618.8 L567.4,613.5 L567.0,609.6 L567.8,607.6 L571.2,610.0 L573.4,611.2 L574.8,613.0 L577.7,616.4 L581.6,617.3 L585.8,617.0 L589.1,618.4 L591.6,620.4 L594.0,621.5 L597.6,623.0 L600.8,620.3 L603.3,623.0 L606.4,620.9 L607.8,618.5 L613.7,616.8 L615.2,614.2 L616.8,610.8 L618.6,606.5 L619.6,603.2 L616.7,600.7 L614.9,598.9 L613.0,596.6 L611.3,597.2 L614.7,595.3 L616.8,595.5 L621.7,592.5 L624.7,591.8 L626.5,591.5 L630.1,587.1 L633.9,587.5 L633.8,586.4 L638.0,583.8 L636.6,581.3 L638.0,578.0 L637.2,571.9 L638.0,570.3 L634.8,568.2 L633.2,565.5 L630.3,563.1 L628.3,561.1 L624.3,559.5 L620.0,558.2 L619.3,557.0 L619.3,553.2 L616.2,551.2 L617.0,547.3 L614.3,544.9 L615.3,540.0 L614.0,538.0 L615.1,535.9 L616.2,532.0 L616.4,529.6 L616.4,526.2 L617.3,521.9 L618.7,519.8 L619.2,517.3 L618.7,513.8 L619.3,511.3 L623.0,510.8 L626.7,508.9 L628.4,508.5 L633.6,505.1 L635.4,506.0 L636.0,502.8 L635.5,499.7 L634.2,496.8 L635.7,493.9 L634.8,491.1 L634.0,487.8 L636.1,483.7 L635.4,481.7 L634.5,478.7 L630.9,475.5 L631.0,473.8 L629.6,471.1 L625.2,469.4 L625.8,464.5 L625.3,462.2 L622.0,460.3 L622.5,458.2 L623.9,453.5 L625.0,451.6 L627.0,449.9 L630.0,446.8 L629.9,444.2 L627.9,438.7 L624.3,437.0 L622.9,433.0 L622.0,430.7 L619.6,426.8 L620.5,422.9 L619.3,420.0 L616.0,419.2 L612.7,416.6 L611.0,414.0 L614.1,413.1 L615.3,409.1 L619.6,410.5 L620.3,406.7 L623.1,405.2 L626.0,404.0 L625.6,400.0 L624.0,397.0 L627.7,396.3 L629.0,392.0 L631.3,388.0 L632.6,386.2 L633.4,384.4 L635.5,380.4 L636.0,378.0 L633.5,375.7 L633.5,373.1 L630.2,369.7 L629.0,368.0 L629.1,364.1 L628.1,360.7 L625.1,357.2 L624.0,354.0 L627.7,351.0 L629.8,347.4 L631.1,344.3 L632.0,342.0 L630.1,339.3 L630.7,335.9 L627.6,332.4 L630.1,329.5 L629.0,325.0 L629.6,321.7 L631.4,319.0 L630.5,315.6 L629.9,314.2 L631.4,309.6 L631.1,305.5 L629.6,305.7 L630.5,300.4 L631.3,298.2 L629.8,294.7Z" fill="#fae400"/>
<path d="M801.0,232.0 L803.9,228.9 L805.5,226.8 L808.6,226.3 L810.2,226.0 L815.9,225.1 L818.2,227.4 L819.6,227.5 L824.9,226.6 L826.8,228.1 L829.9,226.7 L833.8,225.0 L835.2,226.1 L840.0,225.0 L843.0,224.6 L844.1,226.9 L849.0,226.4 L852.6,226.3 L854.7,225.8 L857.8,229.6 L859.1,230.9 L863.3,232.3 L866.5,234.7 L867.3,237.8 L867.8,242.0 L868.4,244.5 L870.2,247.7 L872.2,250.3 L875.5,251.9 L876.3,256.3 L873.3,258.4 L871.5,261.0 L868.4,264.0 L870.4,266.6 L872.4,270.0 L868.6,267.7 L867.8,268.2 L863.0,269.2 L859.5,268.1 L856.6,268.0 L854.2,271.0 L851.7,275.4 L850.8,276.0 L853.2,278.6 L851.4,283.2 L852.7,285.8 L854.7,290.7 L855.4,291.5 L859.3,294.1 L860.6,297.5 L864.0,295.4 L868.4,297.5 L872.4,295.6 L877.5,297.0 L879.0,296.1 L882.2,295.6 L885.1,297.4 L887.3,300.7 L891.5,303.0 L892.5,304.4 L894.9,305.9 L898.0,309.3 L900.8,313.0 L902.0,315.0 L900.7,318.9 L903.8,321.0 L906.9,321.6 L908.5,324.6 L910.4,327.9 L913.6,329.0 L912.8,332.3 L912.0,334.9 L910.3,338.8 L909.7,340.8 L910.8,344.1 L913.5,346.3 L914.2,349.6 L915.8,353.0 L917.6,356.5 L919.4,358.7 L920.1,361.3 L923.5,364.4 L921.5,367.0 L916.9,366.8 L916.4,369.7 L914.2,371.5 L908.6,372.4 L909.0,375.6 L905.3,374.7 L902.7,378.7 L900.5,380.6 L896.3,379.6 L896.5,384.3 L892.1,384.1 L888.6,386.6 L888.2,388.9 L884.7,388.0 L882.0,391.5 L879.7,395.1 L878.1,395.4 L876.8,399.1 L875.6,403.2 L874.3,403.8 L872.4,405.2 L870.1,410.3 L867.8,413.9 L865.9,414.4 L864.4,416.8 L863.2,421.1 L861.8,422.9 L860.1,423.8 L858.1,427.2 L856.3,431.0 L854.5,433.0 L851.5,433.8 L847.1,433.3 L846.3,431.3 L843.9,429.8 L839.0,429.5 L836.8,429.7 L834.2,428.9 L830.8,427.5 L826.3,426.5 L823.3,426.5 L822.0,426.7 L817.0,426.5 L813.7,425.8 L812.8,424.9 L809.5,424.5 L806.1,424.6 L803.1,424.4 L801.4,423.3 L797.0,422.0 L793.3,419.2 L794.5,417.6 L791.7,414.5 L789.1,412.5 L788.5,410.7 L786.0,406.3 L784.5,405.5 L782.4,403.7 L781.2,400.4 L778.3,396.3 L777.9,396.7 L775.3,394.4 L772.5,389.4 L773.6,388.1 L768.9,386.9 L767.8,384.1 L767.6,379.9 L764.1,379.5 L762.2,376.3 L761.6,373.9 L759.9,372.0 L755.7,369.0 L756.8,366.2 L754.1,364.7 L752.0,362.0 L753.4,359.3 L756.1,356.0 L758.2,354.5 L759.9,352.1 L761.6,347.9 L763.4,344.8 L765.3,343.4 L767.0,340.8 L768.2,336.6 L769.8,335.0 L771.1,331.7 L771.9,329.8 L774.0,326.5 L774.6,322.0 L777.0,318.0 L778.0,316.0 L776.7,314.2 L777.1,307.8 L776.2,307.3 L776.0,303.0 L776.9,298.9 L776.0,296.5 L780.5,294.7 L782.4,291.6 L785.7,290.0 L783.2,288.1 L779.8,286.5 L777.5,284.8 L774.8,283.0 L772.4,281.1 L770.5,279.4 L766.5,278.0 L768.3,273.7 L770.3,272.7 L772.7,271.1 L775.3,267.1 L776.0,265.0 L777.2,262.0 L777.2,259.2 L778.5,254.3 L779.9,250.3 L779.9,249.2 L780.0,245.7 L783.7,243.3 L784.4,242.2 L787.1,241.1 L792.4,237.4 L791.9,239.0 L795.8,234.9 L798.5,232.5Z" fill="#f7d700" stroke="none"/>
<path d="M632.8,455.0 L631.2,452.1 L630.0,446.8 L629.9,444.2 L627.9,438.7 L624.3,437.0 L622.9,433.0 L622.0,430.7 L619.6,426.8 L620.5,422.9 L619.3,420.0 L616.0,419.2 L612.7,416.6 L611.0,414.0 L614.1,413.1 L615.3,409.1 L619.6,410.5 L620.3,406.7 L623.1,405.2 L626.0,404.0 L625.6,400.0 L624.0,397.0 L627.7,396.3 L629.0,392.0 L631.3,388.0 L632.6,386.2 L633.4,384.4 L635.5,380.4 L636.0,378.0 L633.5,375.7 L633.5,373.1 L630.2,369.7 L629.0,368.0 L629.1,364.1 L628.1,360.7 L625.1,357.2 L624.0,354.0 L627.7,351.0 L629.8,347.4 L631.1,344.3 L632.0,342.0 L630.1,339.3 L630.7,335.9 L627.6,332.4 L630.1,329.5 L629.0,325.0 L629.6,321.7 L631.4,319.0 L630.5,315.6 L629.9,314.2 L631.4,309.6 L631.1,305.5 L629.6,305.7 L630.5,300.4 L631.3,298.2 L629.8,294.7 L631.0,292.0 L632.4,289.1 L635.8,288.3 L638.5,284.2 L640.0,281.4 L642.5,277.7 L645.5,277.0 L649.1,274.7 L649.9,272.6 L654.6,273.7 L655.7,269.8 L660.4,267.7 L662.4,267.6 L665.0,265.0 L668.5,263.3 L669.8,261.7 L671.7,259.3 L675.2,255.5 L676.3,256.2 L678.1,251.9 L681.5,251.0 L684.6,249.8 L687.7,248.2 L690.6,248.5 L693.4,247.3 L696.0,246.0 L699.6,244.2 L701.6,244.3 L705.4,243.1 L709.8,243.9 L711.2,242.2 L716.9,242.3 L716.7,239.8 L722.3,239.8 L725.0,239.0 L727.1,238.5 L732.1,239.0 L734.9,237.8 L735.6,239.8 L741.9,239.7 L744.3,238.1 L744.8,239.0 L751.2,237.3 L753.0,238.0 L755.2,238.1 L760.7,235.1 L763.5,237.2 L767.2,234.3 L770.4,235.5 L775.4,233.3 L776.2,235.1 L780.6,232.6 L784.3,234.5 L787.0,232.1 L790.6,232.9 L794.1,233.2 L798.3,232.3 L801.0,232.0 L798.8,232.5 L796.8,236.0 L793.7,238.7 L792.0,240.0 L790.1,240.6 L787.7,244.6 L782.6,244.2 L783.3,248.0 L779.5,248.7 L779.9,250.4 L777.5,254.1 L775.6,259.1 L776.6,263.0 L774.4,265.4 L772.9,267.5 L770.4,271.6 L768.9,276.3 L767.8,279.4 L766.4,280.9 L769.6,280.6 L773.9,282.2 L776.4,282.4 L777.6,284.2 L780.0,285.2 L784.0,287.0 L787.0,289.0 L783.4,291.4 L781.8,292.0 L780.3,293.5 L776.0,296.5 L777.1,298.5 L775.8,303.6 L776.7,306.1 L777.3,308.6 L777.4,313.7 L778.6,315.7 L776.5,317.9 L775.0,322.4 L772.9,326.4 L772.7,329.1 L771.3,331.5 L771.0,335.0 L771.6,339.5 L770.4,342.1 L769.0,343.3 L767.3,347.5 L763.9,348.6 L762.6,347.8 L758.0,350.0 L755.3,352.5 L753.2,355.0 L752.7,359.4 L752.0,362.0 L754.2,363.4 L758.5,364.9 L762.6,365.3 L764.8,367.4 L768.8,366.9 L771.1,368.9 L774.8,371.0 L777.1,371.6 L781.8,373.5 L784.5,375.0 L786.0,377.4 L786.9,381.9 L789.8,384.9 L788.5,387.3 L788.9,391.6 L788.0,394.1 L787.3,397.3 L785.2,401.5 L786.5,402.9 L786.1,405.6 L786.0,409.8 L788.3,411.2 L789.8,416.0 L795.3,419.3 L797.2,419.8 L799.1,417.2 L802.6,414.0 L806.0,413.5 L810.0,417.0 L811.8,419.6 L814.7,421.2 L817.0,422.3 L819.2,424.1 L824.0,425.4 L824.7,427.2 L826.1,427.3 L830.4,427.8 L834.4,429.7 L836.4,430.9 L839.6,431.0 L842.9,429.6 L847.4,431.3 L847.8,433.7 L851.4,434.1 L854.5,433.0 L853.7,435.7 L854.8,440.2 L854.2,441.9 L854.3,446.0 L856.6,449.4 L854.5,451.6 L856.4,455.7 L856.5,458.9 L856.9,460.8 L856.8,465.0 L855.1,466.5 L850.2,468.3 L849.8,471.0 L846.5,470.5 L844.2,475.7 L842.1,475.4 L837.5,476.4 L836.8,480.1 L833.8,481.0 L834.5,484.3 L835.1,488.0 L835.2,490.0 L835.6,494.4 L835.5,497.4 L836.2,499.5 L836.4,504.9 L836.4,505.9 L838.1,510.5 L838.4,513.4 L836.8,515.7 L837.7,520.1 L837.0,522.8 L835.3,525.3 L834.0,527.5 L832.7,531.9 L830.2,533.9 L826.3,534.1 L823.1,531.9 L821.3,530.6 L819.5,528.9 L814.6,528.7 L812.6,527.2 L813.1,521.1 L811.2,518.4 L808.2,516.3 L803.5,514.9 L800.8,513.2 L795.7,513.9 L794.7,512.1 L792.5,512.2 L787.1,513.4 L783.6,511.5 L779.9,512.0 L777.7,513.3 L773.2,511.5 L769.5,510.8 L765.8,509.9 L764.4,509.9 L762.0,510.1 L757.1,508.1 L753.5,506.7 L752.5,505.4 L749.9,503.6 L744.9,504.0 L742.8,503.0 L739.9,502.3 L736.0,505.5 L731.3,504.5 L728.3,506.3 L727.3,504.3 L722.7,501.7 L722.1,499.0 L719.7,497.7 L716.9,496.9 L712.6,495.9 L708.2,495.2 L705.9,494.2 L700.9,493.5 L697.3,496.0 L696.4,493.0 L696.2,490.2 L694.8,484.5 L692.9,484.9 L693.4,478.4 L690.2,477.2 L692.1,472.9 L690.4,470.0 L688.1,471.8 L683.8,470.7 L682.1,472.8 L678.9,471.2 L675.7,473.7 L673.9,471.2 L672.8,468.1 L669.7,467.0 L665.8,462.1 L665.0,460.3 L662.6,460.5 L657.2,460.9 L656.0,462.4 L652.4,462.8 L648.9,463.0 L645.3,461.5 L641.8,459.7 L639.0,458.5 L636.8,455.9Z" fill="#dcec00" stroke="#a8a040" stroke-width="0.8"/>
<path d="M882.0,391.5 L886.4,388.8 L887.8,388.7 L891.0,387.5 L894.0,386.0 L898.2,386.0 L903.2,384.5 L905.8,384.0 L904.9,381.0 L907.1,377.3 L909.2,375.5 L909.6,372.5 L909.7,368.3 L913.3,369.9 L916.6,368.4 L921.5,369.0 L923.5,364.4 L927.7,364.7 L929.0,363.5 L933.3,364.4 L936.1,361.7 L939.2,358.3 L940.7,358.3 L942.4,354.9 L946.6,352.5 L949.0,350.6 L953.1,350.7 L956.2,351.4 L957.7,352.8 L959.7,354.7 L963.2,355.4 L966.7,358.5 L970.2,359.4 L972.4,358.9 L977.3,358.2 L980.6,359.8 L982.6,360.6 L986.4,360.4 L988.9,362.0 L993.0,364.7 L995.2,367.0 L998.5,368.8 L1000.0,370.3 L1001.8,371.9 L1006.0,372.0 L1004.8,373.1 L1006.4,379.1 L1006.6,382.1 L1005.8,383.1 L1007.9,388.1 L1007.0,391.3 L1006.0,393.8 L1002.7,395.6 L1001.1,396.9 L998.1,398.5 L995.5,400.0 L991.7,401.0 L990.0,403.0 L989.1,406.6 L988.8,409.4 L989.1,413.3 L988.0,416.8 L983.3,415.6 L982.1,417.1 L978.0,417.7 L973.9,415.6 L969.9,417.0 L967.2,416.8 L966.1,421.4 L963.7,424.3 L962.6,426.0 L960.1,427.6 L957.0,428.5 L953.0,430.0 L953.6,432.5 L948.8,433.0 L945.6,435.9 L944.0,437.8 L940.3,436.8 L938.6,440.8 L935.0,442.0 L937.9,444.2 L941.5,446.3 L944.0,448.1 L947.3,449.7 L948.8,451.3 L950.5,454.8 L949.0,457.7 L952.2,460.5 L949.9,465.3 L951.0,467.4 L954.2,467.8 L955.2,469.7 L958.7,471.3 L962.6,474.3 L960.7,477.2 L960.5,482.4 L960.3,485.8 L962.9,487.3 L963.5,489.8 L967.2,492.7 L966.1,494.7 L964.1,497.5 L960.5,500.9 L958.0,502.0 L955.9,503.2 L953.6,508.0 L950.2,508.6 L948.8,511.0 L948.8,513.3 L948.2,519.1 L948.8,522.6 L949.9,524.5 L948.9,530.2 L951.1,531.6 L948.7,535.7 L951.0,538.7 L947.8,541.0 L944.6,541.4 L944.2,545.6 L947.7,547.6 L949.5,550.2 L950.7,552.7 L953.4,554.8 L958.0,553.6 L958.9,553.0 L962.6,554.8 L960.5,557.7 L959.8,559.8 L959.9,563.7 L959.9,567.0 L958.7,568.9 L958.0,573.2 L960.8,576.2 L964.3,579.5 L965.0,582.4 L963.7,586.5 L965.9,587.8 L965.7,591.8 L965.4,595.0 L968.0,597.0 L967.2,600.8 L964.7,600.6 L961.2,602.2 L957.0,601.1 L955.0,603.2 L950.0,604.5 L949.1,607.4 L944.6,607.4 L941.0,606.0 L938.4,604.1 L937.5,602.1 L934.3,599.9 L929.3,597.7 L927.7,596.9 L924.4,595.1 L923.1,593.4 L920.4,592.9 L915.9,591.9 L911.3,591.0 L908.3,590.5 L906.6,588.4 L905.4,584.3 L904.5,580.0 L905.7,576.6 L903.8,574.5 L903.4,569.2 L903.2,568.1 L902.8,564.0 L902.4,559.7 L900.4,559.6 L902.6,552.6 L900.5,552.5 L900.7,548.2 L901.6,544.0 L900.4,543.3 L900.5,538.7 L897.2,535.7 L893.9,534.1 L891.4,533.0 L889.0,531.8 L888.4,527.5 L889.2,526.6 L887.4,521.0 L888.6,518.9 L887.3,515.5 L888.2,512.0 L886.7,508.8 L885.0,504.9 L882.6,504.2 L879.8,499.6 L876.0,501.3 L873.0,500.7 L871.7,502.1 L865.1,500.7 L863.7,502.0 L859.7,502.1 L858.9,506.1 L853.9,504.9 L853.4,507.0 L849.7,508.4 L847.4,510.2 L843.3,509.8 L841.8,512.7 L838.4,513.4 L838.1,510.5 L836.4,505.9 L836.4,504.9 L836.2,499.5 L835.5,497.4 L835.6,494.4 L835.2,490.0 L835.1,488.0 L834.5,484.3 L833.8,481.0 L836.8,480.1 L837.5,476.4 L842.1,475.4 L844.2,475.7 L846.5,470.5 L849.8,471.0 L850.2,468.3 L855.1,466.5 L856.8,465.0 L856.9,460.8 L856.5,458.9 L856.4,455.7 L854.5,451.6 L856.6,449.4 L854.3,446.0 L854.2,441.9 L854.8,440.2 L853.7,435.7 L854.5,433.0 L856.7,430.9 L858.3,427.7 L859.9,425.7 L862.0,424.3 L864.4,421.8 L866.0,419.0 L867.2,416.5 L869.3,413.9 L870.4,409.5 L871.4,407.2 L873.0,405.3 L875.6,404.1 L876.9,399.5 L878.1,396.2 L879.7,395.3Z" fill="#ffff00" stroke="#a8a040" stroke-width="0.8"/>
<path d="M849.6,592.7 L853.0,591.8 L855.7,592.4 L859.6,589.0 L860.6,590.4 L867.1,587.5 L868.6,588.4 L872.3,586.2 L873.6,584.3 L875.3,584.6 L879.5,580.5 L881.3,580.0 L884.7,580.0 L888.4,581.4 L890.4,581.5 L895.0,579.5 L897.8,580.7 L901.5,580.4 L904.5,580.0 L905.4,584.3 L906.6,588.4 L908.3,590.5 L911.3,591.0 L915.9,591.9 L920.4,592.9 L923.1,593.4 L924.4,595.1 L927.7,596.9 L929.3,597.7 L934.3,599.9 L937.5,602.1 L938.4,604.1 L941.0,606.0 L944.6,607.4 L949.1,607.4 L950.0,604.5 L955.0,603.2 L957.4,602.3 L958.8,596.9 L960.1,594.8 L961.6,594.5 L963.3,590.8 L965.6,588.4 L966.1,591.7 L965.3,595.0 L967.9,596.9 L967.2,600.8 L969.1,602.1 L968.4,607.8 L969.9,609.5 L973.0,609.8 L975.4,611.0 L977.4,612.6 L980.4,614.8 L983.6,617.3 L985.5,619.6 L987.7,621.7 L991.0,622.2 L992.5,625.7 L992.2,629.8 L995.2,632.7 L999.2,632.3 L1001.9,630.4 L1006.1,629.9 L1008.3,628.5 L1012.0,626.4 L1011.7,624.7 L1010.6,619.5 L1010.8,616.4 L1010.0,613.8 L1010.7,611.3 L1012.4,607.8 L1013.7,605.3 L1016.2,602.5 L1017.1,598.5 L1019.6,594.9 L1020.5,592.7 L1022.1,591.5 L1024.0,587.7 L1026.9,585.1 L1029.7,582.4 L1031.0,580.0 L1035.8,578.8 L1038.0,580.6 L1040.9,581.1 L1045.8,580.0 L1048.2,582.8 L1047.6,585.1 L1049.7,589.0 L1051.0,591.2 L1052.6,593.2 L1054.9,598.4 L1053.3,598.6 L1056.4,603.2 L1060.4,605.9 L1060.8,609.2 L1061.9,612.8 L1065.2,614.4 L1067.6,617.1 L1069.0,620.0 L1067.9,622.9 L1067.3,624.8 L1065.3,628.2 L1064.3,632.9 L1062.7,634.9 L1064.9,638.3 L1065.5,639.4 L1067.0,643.3 L1066.1,646.1 L1068.1,649.5 L1067.1,652.3 L1068.0,655.0 L1070.2,659.1 L1068.7,660.4 L1069.0,664.4 L1071.3,666.1 L1072.8,667.7 L1076.7,670.3 L1079.6,672.8 L1078.3,676.5 L1076.3,679.1 L1075.4,683.4 L1073.7,686.2 L1072.3,689.7 L1070.4,689.7 L1068.1,692.5 L1065.4,696.0 L1063.1,696.8 L1061.3,699.7 L1060.6,702.4 L1059.2,705.9 L1059.5,708.7 L1058.1,713.4 L1058.5,717.1 L1055.7,720.2 L1054.1,720.2 L1052.8,724.3 L1051.7,728.5 L1050.4,728.9 L1048.0,732.0 L1043.9,732.1 L1042.6,732.9 L1038.6,734.3 L1034.6,735.2 L1032.1,736.0 L1029.0,736.0 L1025.6,736.3 L1024.6,737.3 L1018.9,739.1 L1018.8,740.0 L1014.0,740.3 L1013.4,736.8 L1012.1,735.0 L1007.3,731.3 L1006.4,730.4 L1006.6,726.0 L1003.6,723.5 L1002.6,726.8 L996.7,725.0 L995.2,727.7 L994.1,732.4 L995.1,733.3 L995.6,737.5 L993.3,742.9 L995.2,744.6 L996.9,748.6 L997.9,750.9 L1001.6,751.6 L1003.6,755.0 L1006.3,756.6 L1007.8,758.0 L1011.7,759.7 L1014.0,761.4 L1014.0,764.5 L1012.4,766.7 L1010.1,769.9 L1009.1,773.4 L1007.4,775.6 L1005.2,777.8 L1004.2,781.8 L1001.5,784.6 L999.4,783.1 L997.1,778.8 L993.5,776.6 L993.8,775.0 L992.1,772.1 L988.9,769.9 L985.2,769.8 L984.9,770.9 L980.1,770.1 L976.8,767.6 L974.0,767.8 L972.7,770.3 L971.7,774.6 L970.2,775.7 L967.9,777.2 L965.8,781.6 L964.4,784.5 L962.8,785.4 L961.4,788.9 L959.9,788.7 L954.3,791.5 L951.5,789.9 L950.4,790.9 L944.9,789.9 L942.8,790.5 L940.3,791.8 L936.6,791.8 L932.2,788.3 L929.5,787.1 L927.4,784.2 L925.3,783.4 L922.3,782.4 L918.2,780.6 L914.8,778.6 L912.0,779.6 L910.1,782.6 L908.3,785.8 L906.0,787.2 L901.9,787.6 L897.8,786.0 L895.5,786.4 L892.0,785.7 L887.2,788.2 L884.4,790.3 L882.3,790.5 L876.8,789.4 L876.0,792.8 L872.1,791.8 L871.5,787.5 L871.0,786.1 L869.6,780.4 L869.0,778.0 L865.4,777.7 L861.6,775.3 L858.1,774.0 L855.3,773.4 L856.0,770.6 L853.7,767.3 L856.5,765.6 L859.0,765.0 L864.4,761.7 L865.0,761.8 L869.0,759.6 L870.8,757.0 L872.0,752.1 L875.2,750.4 L873.0,748.7 L874.0,745.1 L869.3,741.5 L869.0,739.7 L868.0,735.4 L866.0,732.2 L866.0,729.0 L862.4,728.1 L859.5,727.1 L858.2,724.9 L856.2,722.9 L852.2,722.8 L852.6,720.0 L851.7,716.9 L852.4,713.1 L850.7,710.6 L850.0,706.4 L847.6,704.7 L846.7,701.2 L846.0,698.3 L848.4,695.2 L847.6,691.6 L847.6,689.0 L844.8,685.6 L843.0,683.0 L842.6,678.3 L841.5,675.3 L838.3,676.3 L835.7,675.6 L831.3,674.2 L829.2,673.7 L830.4,671.9 L832.3,667.6 L832.5,663.2 L830.2,662.4 L829.2,658.4 L833.3,653.4 L833.8,650.7 L837.8,651.6 L841.2,652.5 L844.5,653.8 L848.2,652.6 L850.7,647.7 L852.7,642.7 L850.7,640.0 L847.7,638.0 L846.4,637.1 L843.3,632.7 L840.0,629.6 L838.0,628.3 L834.1,626.0 L832.7,622.2 L836.8,620.6 L837.8,617.9 L839.7,615.0 L843.3,613.8 L845.3,612.1 L849.6,609.9 L850.8,610.5 L853.8,607.4 L854.1,605.4 L851.9,600.5 L852.5,600.4 L848.8,594.5Z" fill="#e0ee00" stroke="#a8a040" stroke-width="0.8"/>
<path d="M611.3,597.2 L614.7,595.3 L616.8,595.5 L621.7,592.5 L624.7,591.8 L626.6,591.3 L632.9,588.3 L634.3,588.3 L638.0,586.4 L642.6,588.5 L643.7,590.5 L645.9,593.0 L648.5,595.8 L651.5,597.2 L656.0,600.1 L657.7,601.6 L657.8,602.6 L661.0,603.5 L665.0,605.2 L667.2,602.4 L671.0,600.8 L672.6,599.9 L675.7,597.2 L678.5,598.9 L681.3,601.1 L684.9,603.8 L686.4,605.2 L688.6,602.8 L694.2,602.5 L694.9,603.1 L699.8,600.1 L701.8,600.3 L705.5,597.0 L708.0,597.2 L710.1,596.4 L715.0,598.3 L716.6,596.0 L720.7,594.6 L723.3,595.6 L725.3,593.8 L729.4,594.5 L731.1,591.6 L734.8,590.0 L734.1,591.8 L733.4,597.1 L731.4,600.3 L730.3,602.6 L730.9,606.5 L731.6,610.3 L730.6,612.2 L728.9,614.8 L729.0,619.0 L729.6,622.8 L729.4,623.9 L731.2,629.5 L731.5,630.5 L733.5,636.0 L733.7,635.7 L735.1,642.4 L734.7,643.2 L735.6,647.0 L734.8,650.0 L736.6,653.4 L735.9,656.3 L737.7,659.7 L737.6,662.5 L739.6,666.1 L739.0,669.0 L736.6,672.6 L735.0,675.6 L732.9,678.8 L731.2,680.4 L731.4,684.3 L731.0,687.6 L729.3,690.0 L727.1,692.3 L724.9,696.3 L723.0,698.4 L721.5,699.0 L720.5,702.4 L719.7,706.8 L718.6,708.2 L715.0,711.0 L714.6,713.9 L713.8,718.5 L712.2,721.4 L710.3,722.6 L709.5,724.8 L707.0,728.7 L706.1,732.7 L703.0,735.0 L699.0,735.4 L697.9,736.0 L693.1,736.9 L689.3,738.3 L687.0,739.0 L683.6,738.2 L681.0,736.5 L677.3,734.2 L676.5,731.4 L674.5,728.6 L671.0,727.0 L669.4,724.0 L669.7,721.0 L666.8,718.8 L666.2,715.7 L664.6,713.6 L664.7,711.1 L662.4,707.3 L660.5,706.8 L661.0,701.2 L659.0,699.5 L656.5,698.6 L653.6,697.5 L650.5,696.2 L647.1,693.8 L643.7,692.4 L640.3,691.4 L637.2,689.0 L635.0,687.6 L632.3,686.4 L627.8,687.5 L627.2,687.8 L623.5,686.2 L618.9,685.5 L616.6,685.8 L613.2,685.2 L611.0,684.8 L607.8,682.7 L603.8,682.2 L600.0,680.1 L597.9,677.7 L595.6,678.6 L591.5,679.3 L589.0,681.5 L585.5,681.6 L583.4,685.4 L578.6,683.2 L576.4,685.8 L576.8,689.2 L576.4,691.6 L576.9,695.0 L576.1,697.8 L578.8,701.2 L577.5,703.4 L578.4,707.5 L579.9,709.6 L579.2,712.7 L580.7,716.9 L579.6,719.0 L578.7,723.1 L579.8,725.2 L578.4,727.1 L579.7,732.1 L580.3,734.9 L578.6,735.6 L580.1,742.2 L580.1,742.9 L579.2,746.3 L581.4,749.9 L580.9,752.8 L580.0,755.6 L581.2,758.9 L579.4,761.4 L578.6,766.2 L580.0,768.0 L580.9,771.1 L583.4,773.5 L586.2,777.7 L587.1,779.1 L588.8,782.0 L586.9,784.9 L584.9,786.2 L580.0,787.3 L579.4,789.1 L578.9,792.5 L574.7,793.4 L573.3,797.2 L570.0,799.1 L566.7,799.4 L563.3,801.0 L560.9,799.2 L554.0,802.0 L553.7,800.2 L549.0,801.6 L545.3,802.8 L541.3,800.9 L540.8,799.7 L537.9,800.4 L533.6,799.4 L531.4,794.9 L530.5,792.7 L528.4,789.2 L526.5,787.3 L524.8,784.0 L523.6,779.9 L521.3,778.6 L521.5,775.1 L523.5,771.4 L527.0,768.5 L522.6,766.3 L524.0,762.7 L522.7,761.3 L523.9,756.2 L524.1,753.3 L522.0,751.7 L523.0,746.5 L522.6,744.3 L524.8,742.3 L526.3,738.5 L527.2,736.5 L528.7,733.9 L530.3,731.0 L529.2,728.6 L525.4,723.8 L522.6,722.2 L523.2,718.6 L521.4,716.9 L522.1,711.3 L522.6,709.0 L525.6,708.9 L528.7,704.6 L530.8,705.3 L532.4,703.3 L538.1,700.9 L539.2,700.2 L538.1,695.5 L536.8,693.4 L533.9,690.1 L534.8,685.9 L536.5,684.2 L538.3,682.4 L540.3,678.0 L537.2,674.1 L536.5,670.3 L535.9,667.0 L536.3,664.9 L538.0,660.5 L536.7,655.9 L537.9,654.4 L536.5,652.3 L537.3,647.2 L538.0,645.0 L541.0,642.9 L542.0,639.2 L543.5,635.2 L546.2,635.1 L549.0,631.9 L550.4,631.3 L557.1,632.0 L557.8,630.8 L560.4,630.2 L564.5,629.7 L565.6,626.6 L565.3,622.0 L566.9,620.7 L568.2,618.8 L567.4,613.5 L567.0,609.6 L567.8,607.6 L571.2,610.0 L573.4,611.2 L574.8,613.0 L577.7,616.4 L581.6,617.3 L585.8,617.0 L589.1,618.4 L591.6,620.4 L594.0,621.5 L597.6,623.0 L600.8,620.3 L603.3,623.0 L606.4,620.9 L607.8,618.5 L613.7,616.8 L615.2,614.2 L616.8,610.8 L618.6,606.5 L619.6,603.2 L616.7,600.7 L614.9,598.9 L613.0,596.6Z" fill="#ffff00" stroke="#a8a040" stroke-width="0.8"/>
<path d="M919.0,368.0 L917.6,388.0 L919.5,399.7 L925.4,401.7 L957.0,390.0 L1004.0,393.8 L1006.0,376.0" fill="none" stroke="#6ad010" stroke-width="1.8"/>
<path d="M631.0,292.0 L632.4,289.1 L635.8,288.3 L638.5,284.2 L640.0,281.4 L642.5,277.7 L645.5,277.0 L649.1,274.7 L649.9,272.6 L654.6,273.7 L655.7,269.8 L660.4,267.7 L662.4,267.6 L665.0,265.0 L668.5,263.3 L669.8,261.7 L671.7,259.3 L675.2,255.5 L676.3,256.2 L678.1,251.9 L681.5,251.0 L684.6,249.8 L687.7,248.2 L690.6,248.5 L693.4,247.3 L696.0,246.0 L699.6,244.2 L701.6,244.3 L705.4,243.1 L709.8,243.9 L711.2,242.2 L716.9,242.3 L716.7,239.8 L722.3,239.8 L725.0,239.0 L727.1,238.5 L732.1,239.0 L734.9,237.8 L735.6,239.8 L741.9,239.7 L744.3,238.1 L744.8,239.0 L751.2,237.3 L753.0,238.0 L754.2,238.2 L760.6,236.4 L760.8,237.3 L766.5,235.1 L767.8,234.8 L770.4,233.1 L774.5,234.3 L777.0,233.0 L781.7,232.2 L783.4,234.2 L786.0,232.3 L790.4,232.0 L793.9,231.8 L796.5,231.8 L800.2,230.1 L801.8,229.3 L805.5,226.8 L808.6,226.3 L810.2,226.0 L815.9,225.1 L818.2,227.4 L819.6,227.5 L824.9,226.6 L826.8,228.1 L829.9,226.7 L833.8,225.0 L835.2,226.1 L840.0,225.0 L843.0,224.6 L844.1,226.9 L849.0,226.4 L852.6,226.3 L854.7,225.8 L857.8,229.6 L859.1,230.9 L863.3,232.3 L866.5,234.7 L867.3,237.8 L867.8,242.0 L868.4,244.5 L870.2,247.7 L872.2,250.3 L875.5,251.9 L876.3,256.3 L873.3,258.4 L871.5,261.0 L868.4,264.0 L870.4,266.6 L872.4,270.0 L868.6,267.7 L867.8,268.2 L863.0,269.2 L859.5,268.1 L856.6,268.0 L854.2,271.0 L851.7,275.4 L850.8,276.0 L853.2,278.6 L851.4,283.2 L852.7,285.8 L854.7,290.7 L855.4,291.5 L859.3,294.1 L860.6,297.5 L864.0,295.4 L868.4,297.5 L872.4,295.6 L877.5,297.0 L879.0,296.1 L882.2,295.6 L885.1,297.4 L887.3,300.7 L891.5,303.0 L892.5,304.4 L894.9,305.9 L898.0,309.3 L900.8,313.0 L902.0,315.0 L900.7,318.9 L903.8,321.0 L906.9,321.6 L908.5,324.6 L910.4,327.9 L913.6,329.0 L912.8,332.3 L912.0,334.9 L910.3,338.8 L909.7,340.8 L910.8,344.1 L913.5,346.3 L914.2,349.6 L915.8,353.0 L917.6,356.5 L919.4,358.7 L920.1,361.3 L923.5,364.4 L927.7,364.7 L929.0,363.5 L933.3,364.4 L936.1,361.7 L939.2,358.3 L940.7,358.3 L942.4,354.9 L946.6,352.5 L949.0,350.6 L953.1,350.7 L956.2,351.4 L957.7,352.8 L959.7,354.7 L963.2,355.4 L966.7,358.5 L970.2,359.4 L972.4,358.9 L977.3,358.2 L980.6,359.8 L982.6,360.6 L986.4,360.4 L988.9,362.0 L993.0,364.7 L995.2,367.0 L998.5,368.8 L1000.0,370.3 L1003.5,369.8 L1007.0,369.5 L1010.0,368.3 L1013.0,366.0 L1016.3,363.6 L1018.0,359.3 L1019.1,356.2 L1021.2,356.0 L1023.7,352.6 L1027.2,350.4 L1028.8,346.4 L1030.8,346.3 L1033.7,343.5 L1035.5,340.8 L1036.9,338.8 L1043.2,339.1 L1043.2,336.6 L1048.4,335.9 L1049.8,333.3 L1053.0,333.0 L1053.6,335.7 L1056.6,338.6 L1058.8,342.3 L1059.0,344.7 L1060.7,347.9 L1063.3,349.5 L1065.1,350.2 L1066.7,355.4 L1068.9,358.0 L1071.8,359.3 L1071.0,361.3 L1074.8,364.4 L1077.9,366.1 L1080.0,367.5 L1079.9,369.8 L1084.3,372.6 L1087.7,375.3 L1088.6,376.2 L1086.4,379.1 L1086.8,381.3 L1085.9,385.1 L1084.9,389.4 L1082.7,392.0 L1082.2,393.8 L1080.6,397.6 L1080.8,402.3 L1081.3,405.0 L1080.7,407.8 L1079.0,411.6 L1077.9,413.7 L1077.9,415.7 L1076.8,420.0 L1076.6,423.8 L1078.4,424.6 L1076.7,429.9 L1079.6,431.3 L1079.8,435.7 L1080.5,436.7 L1081.9,441.5 L1080.7,444.0 L1081.7,446.3 L1081.4,449.9 L1083.0,452.7 L1081.7,456.2 L1081.1,459.0 L1082.3,462.7 L1081.5,465.9 L1079.8,467.6 L1080.6,471.4 L1081.0,476.4 L1079.2,478.5 L1078.8,480.3 L1079.9,484.6 L1079.0,488.3 L1079.0,491.0 L1081.9,494.1 L1080.0,496.0 L1082.7,499.7 L1080.9,501.2 L1084.7,506.0 L1084.4,506.8 L1086.4,512.5 L1085.5,512.7 L1087.0,518.7 L1088.6,518.4 L1089.6,524.3 L1090.7,524.0 L1089.7,529.2 L1092.0,531.0 L1093.0,533.7 L1095.4,537.4 L1095.3,538.9 L1096.9,543.1 L1099.9,545.0 L1099.4,548.3 L1101.1,549.4 L1102.7,553.9 L1104.0,556.0 L1104.9,560.9 L1105.1,560.4 L1103.7,566.7 L1106.2,568.4 L1104.1,570.7 L1105.0,576.5 L1105.7,576.5 L1105.6,581.9 L1106.9,584.5 L1105.8,586.5 L1108.7,591.7 L1107.5,593.8 L1105.8,596.7 L1103.8,601.3 L1102.4,605.2 L1100.5,607.3 L1099.6,609.2 L1097.9,612.4 L1098.0,615.6 L1095.9,615.0 L1090.6,617.3 L1089.1,617.0 L1086.4,617.7 L1080.7,617.6 L1080.6,615.8 L1076.6,618.6 L1071.3,617.8 L1070.0,618.8 L1069.8,620.4 L1068.9,623.5 L1066.3,627.9 L1064.8,632.4 L1062.7,634.9 L1064.9,638.3 L1065.5,639.4 L1067.0,643.3 L1066.1,646.1 L1068.1,649.5 L1067.1,652.3 L1068.0,655.0 L1070.2,659.1 L1068.7,660.4 L1069.0,664.4 L1071.3,666.1 L1072.8,667.7 L1076.7,670.3 L1079.6,672.8 L1078.3,676.5 L1076.3,679.1 L1075.4,683.4 L1073.7,686.2 L1072.3,689.7 L1070.4,689.7 L1068.1,692.5 L1065.4,696.0 L1063.1,696.8 L1061.3,699.7 L1060.6,702.4 L1059.2,705.9 L1059.5,708.7 L1058.1,713.4 L1058.5,717.1 L1055.7,720.2 L1054.1,720.2 L1052.8,724.3 L1051.7,728.5 L1050.4,728.9 L1048.0,732.0 L1043.9,732.1 L1042.6,732.9 L1038.6,734.3 L1034.6,735.2 L1032.1,736.0 L1029.0,736.0 L1025.6,736.3 L1024.6,737.3 L1018.9,739.1 L1018.8,740.0 L1014.0,740.3 L1013.4,736.8 L1012.1,735.0 L1007.3,731.3 L1006.4,730.4 L1006.6,726.0 L1003.6,723.5 L1002.6,726.8 L996.7,725.0 L995.2,727.7 L994.1,732.4 L995.1,733.3 L995.6,737.5 L993.3,742.9 L995.2,744.6 L996.9,748.6 L997.9,750.9 L1001.6,751.6 L1003.6,755.0 L1006.3,756.6 L1007.8,758.0 L1011.7,759.7 L1014.0,761.4 L1014.0,764.5 L1012.4,766.7 L1010.1,769.9 L1009.1,773.4 L1007.4,775.6 L1005.2,777.8 L1004.2,781.8 L1001.5,784.6 L999.4,783.1 L997.1,778.8 L993.5,776.6 L993.8,775.0 L992.1,772.1 L988.9,769.9 L985.2,769.8 L984.9,770.9 L980.1,770.1 L976.8,767.6 L974.0,767.8 L972.7,770.3 L971.7,774.6 L970.2,775.7 L967.9,777.2 L965.8,781.6 L964.4,784.5 L962.8,785.4 L961.4,788.9 L958.9,788.3 L954.6,790.6 L951.0,788.6 L947.2,790.6 L944.8,790.4 L941.5,790.8 L937.5,790.6 L936.2,792.5 L931.4,792.5 L929.0,796.0 L926.9,801.0 L926.1,803.6 L926.3,805.8 L925.5,808.9 L923.4,813.0 L920.6,815.3 L918.3,818.3 L917.3,818.5 L915.2,822.9 L911.4,825.6 L908.7,828.2 L906.6,830.0 L906.2,833.3 L906.9,837.8 L907.3,839.4 L905.6,841.5 L904.8,846.3 L905.9,850.0 L903.8,852.5 L903.5,855.9 L903.4,858.8 L904.3,861.1 L903.1,865.6 L901.3,870.3 L901.0,872.0 L900.2,874.1 L897.8,877.6 L896.4,880.8 L895.3,882.5 L893.0,885.4 L891.1,890.1 L890.2,893.2 L888.4,893.6 L887.0,897.0 L889.4,902.3 L887.0,901.6 L890.1,908.0 L888.0,909.7 L891.0,912.8 L889.3,917.3 L892.3,919.2 L892.5,923.0 L894.1,924.0 L896.7,928.9 L898.9,931.6 L899.9,933.2 L902.0,936.0 L906.4,934.2 L908.8,936.0 L910.7,935.4 L916.0,935.2 L918.8,936.0 L919.7,939.0 L920.4,941.6 L920.1,946.1 L919.8,947.6 L921.6,951.8 L919.5,954.3 L922.8,957.6 L922.5,960.6 L922.8,962.8 L922.7,968.6 L922.8,970.4 L923.0,974.0 L920.6,977.4 L917.5,979.0 L915.3,981.1 L915.7,983.6 L915.4,988.2 L913.7,992.5 L913.0,995.0 L910.8,996.4 L907.6,998.4 L905.2,998.6 L900.9,1002.3 L900.9,1001.5 L896.7,1004.0 L892.3,1007.8 L891.9,1007.8 L888.0,1010.0 L884.0,1007.9 L880.0,1007.5 L877.8,1010.8 L877.5,1014.0 L876.7,1018.0 L873.4,1017.3 L870.6,1018.5 L868.6,1017.3 L863.2,1017.2 L861.7,1019.1 L859.9,1018.2 L854.7,1017.3 L852.5,1018.0 L850.2,1013.8 L849.0,1010.0 L846.1,1006.9 L846.7,1003.0 L850.3,999.0 L853.3,997.5 L854.5,993.9 L855.0,990.0 L852.4,989.8 L849.0,987.5 L846.3,990.2 L845.1,990.6 L843.3,995.0 L840.3,994.2 L836.7,992.5 L832.9,991.4 L832.7,987.6 L829.9,983.8 L828.4,981.7 L825.0,980.0 L822.2,978.4 L820.7,976.7 L818.3,974.8 L815.3,972.8 L813.0,971.0 L812.2,968.4 L809.0,963.9 L805.2,961.8 L805.3,959.4 L801.4,960.6 L801.1,963.2 L798.9,965.2 L795.6,966.1 L792.7,970.1 L791.0,970.6 L789.0,971.4 L786.6,976.1 L785.1,977.7 L784.0,979.4 L782.3,982.5 L779.3,985.5 L775.6,988.6 L774.4,990.0 L772.0,992.9 L770.2,994.3 L766.4,994.7 L765.6,998.0 L762.9,1000.8 L758.7,1001.2 L757.5,1004.0 L753.6,1004.1 L751.0,1005.9 L747.4,1005.8 L743.4,1007.0 L743.2,1004.6 L741.0,1000.6 L742.2,997.1 L741.1,995.4 L741.0,991.1 L740.4,987.9 L739.0,986.1 L738.5,981.2 L737.8,979.0 L736.8,974.8 L736.3,974.4 L736.9,968.4 L735.3,967.6 L737.5,964.1 L734.2,959.5 L735.2,959.4 L733.5,953.2 L732.7,952.7 L732.3,947.7 L732.3,946.3 L732.0,942.5 L729.3,940.9 L727.1,939.2 L722.2,936.8 L721.0,934.0 L718.9,933.2 L717.3,933.6 L712.5,931.0 L711.0,932.7 L709.8,934.5 L708.5,939.6 L706.7,942.7 L704.4,943.2 L701.9,945.9 L699.7,949.3 L698.0,951.0 L696.7,953.6 L695.6,956.6 L694.2,958.0 L688.2,959.4 L687.8,960.6 L684.6,962.0 L681.3,964.5 L678.8,965.0 L676.1,966.3 L669.8,966.2 L667.5,967.8 L665.2,965.3 L663.8,964.3 L658.9,962.2 L656.4,959.2 L655.1,956.5 L653.1,954.9 L651.0,954.2 L647.8,951.0 L645.5,947.5 L644.2,945.5 L641.2,943.1 L638.9,938.7 L636.6,937.0 L634.0,934.4 L634.4,930.5 L632.0,929.9 L628.7,925.8 L628.0,921.6 L626.4,920.5 L623.2,916.9 L622.5,914.4 L622.0,911.4 L619.3,907.5 L616.9,906.6 L615.6,902.2 L614.0,900.0 L613.8,896.8 L611.2,895.6 L609.5,891.8 L610.4,889.0 L607.5,887.6 L607.2,882.1 L605.6,880.6 L605.2,876.2 L604.0,874.9 L603.8,870.4 L603.3,868.0 L601.7,864.8 L601.9,859.9 L600.0,858.0 L599.2,854.0 L596.5,854.0 L597.4,849.5 L595.1,846.5 L592.2,844.8 L593.9,840.2 L590.7,838.6 L590.7,834.9 L588.8,832.8 L587.7,829.8 L586.9,825.1 L586.8,824.4 L585.9,817.4 L586.0,816.0 L585.3,814.0 L580.9,810.1 L578.6,809.1 L577.5,807.5 L577.2,803.7 L574.8,801.2 L573.3,797.2 L570.0,799.1 L566.7,799.4 L563.3,801.0 L560.9,799.2 L554.0,802.0 L553.7,800.2 L549.0,801.6 L545.3,802.8 L541.3,800.9 L540.8,799.7 L537.9,800.4 L533.6,799.4 L531.4,794.9 L530.5,792.7 L528.4,789.2 L526.5,787.3 L524.8,784.0 L523.6,779.9 L521.3,778.6 L521.5,775.1 L523.5,771.4 L527.0,768.5 L522.6,766.3 L524.0,762.7 L522.7,761.3 L523.9,756.2 L524.1,753.3 L522.0,751.7 L523.0,746.5 L522.6,744.3 L524.8,742.3 L526.3,738.5 L527.2,736.5 L528.7,733.9 L530.3,731.0 L529.2,728.6 L525.4,723.8 L522.6,722.2 L523.2,718.6 L521.4,716.9 L522.1,711.3 L522.6,709.0 L525.6,708.9 L528.7,704.6 L530.8,705.3 L532.4,703.3 L538.1,700.9 L539.2,700.2 L538.1,695.5 L536.8,693.4 L533.9,690.1 L534.8,685.9 L536.5,684.2 L538.3,682.4 L540.3,678.0 L537.2,674.1 L536.5,670.3 L535.9,667.0 L536.3,664.9 L538.0,660.5 L536.7,655.9 L537.9,654.4 L536.5,652.3 L537.3,647.2 L538.0,645.0 L541.0,642.9 L542.0,639.2 L543.5,635.2 L546.2,635.1 L549.0,631.9 L550.4,631.3 L557.1,632.0 L557.8,630.8 L560.4,630.2 L564.5,629.7 L565.6,626.6 L565.3,622.0 L566.9,620.7 L568.2,618.8 L567.4,613.5 L567.0,609.6 L567.8,607.6 L571.2,610.0 L573.4,611.2 L574.8,613.0 L577.7,616.4 L581.6,617.3 L585.8,617.0 L589.1,618.4 L591.6,620.4 L594.0,621.5 L597.6,623.0 L600.8,620.3 L603.3,623.0 L606.4,620.9 L607.8,618.5 L613.7,616.8 L615.2,614.2 L616.8,610.8 L618.6,606.5 L619.6,603.2 L616.7,600.7 L614.9,598.9 L613.0,596.6 L611.3,597.2 L614.7,595.3 L616.8,595.5 L621.7,592.5 L624.7,591.8 L626.5,591.5 L630.1,587.1 L633.9,587.5 L633.8,586.4 L638.0,583.8 L636.6,581.3 L638.0,578.0 L637.2,571.9 L638.0,570.3 L634.8,568.2 L633.2,565.5 L630.3,563.1 L628.3,561.1 L624.3,559.5 L620.0,558.2 L619.3,557.0 L619.3,553.2 L616.2,551.2 L617.0,547.3 L614.3,544.9 L615.3,540.0 L614.0,538.0 L615.1,535.9 L616.2,532.0 L616.4,529.6 L616.4,526.2 L617.3,521.9 L618.7,519.8 L619.2,517.3 L618.7,513.8 L619.3,511.3 L623.0,510.8 L626.7,508.9 L628.4,508.5 L633.6,505.1 L635.4,506.0 L636.0,502.8 L635.5,499.7 L634.2,496.8 L635.7,493.9 L634.8,491.1 L634.0,487.8 L636.1,483.7 L635.4,481.7 L634.5,478.7 L630.9,475.5 L631.0,473.8 L629.6,471.1 L625.2,469.4 L625.8,464.5 L625.3,462.2 L622.0,460.3 L622.5,458.2 L623.9,453.5 L625.0,451.6 L627.0,449.9 L630.0,446.8 L629.9,444.2 L627.9,438.7 L624.3,437.0 L622.9,433.0 L622.0,430.7 L619.6,426.8 L620.5,422.9 L619.3,420.0 L616.0,419.2 L612.7,416.6 L611.0,414.0 L614.1,413.1 L615.3,409.1 L619.6,410.5 L620.3,406.7 L623.1,405.2 L626.0,404.0 L625.6,400.0 L624.0,397.0 L627.7,396.3 L629.0,392.0 L631.3,388.0 L632.6,386.2 L633.4,384.4 L635.5,380.4 L636.0,378.0 L633.5,375.7 L633.5,373.1 L630.2,369.7 L629.0,368.0 L629.1,364.1 L628.1,360.7 L625.1,357.2 L624.0,354.0 L627.7,351.0 L629.8,347.4 L631.1,344.3 L632.0,342.0 L630.1,339.3 L630.7,335.9 L627.6,332.4 L630.1,329.5 L629.0,325.0 L629.6,321.7 L631.4,319.0 L630.5,315.6 L629.9,314.2 L631.4,309.6 L631.1,305.5 L629.6,305.7 L630.5,300.4 L631.3,298.2 L629.8,294.7Z" fill="none" stroke="#ece4d8" stroke-opacity="0.8" stroke-width="6" clip-path="url(#oc)"/>
<path d="M729.0,595.0 L727.3,591.4 L728.3,589.2 L728.0,585.9 L728.0,583.1 L729.9,579.7 L727.3,577.2 L727.3,574.0 L731.8,575.9 L736.2,576.7 L738.7,577.3 L741.2,577.7 L742.2,579.3 L746.7,581.4 L751.6,582.5 L752.9,583.2 L755.0,585.4 L757.6,583.2 L760.1,581.9 L761.6,577.7 L764.8,577.3 L765.0,574.0 L766.2,570.4 L764.6,569.6 L763.4,565.0 L764.7,561.1 L764.8,559.3 L767.5,559.9 L771.3,559.3 L773.4,562.6 L774.6,566.1 L777.8,567.5 L779.3,569.2 L783.5,572.5 L783.4,575.4 L786.0,577.3 L787.1,574.2 L789.4,572.8 L792.3,569.5 L794.0,567.5 L792.1,565.6 L793.9,560.3 L793.3,559.6 L792.7,554.3 L792.0,552.8 L791.0,549.9 L790.8,546.3 L792.5,546.2 L797.3,543.2 L798.9,541.9 L802.1,540.6 L805.5,539.9 L805.9,537.6 L810.4,536.5 L812.7,531.5 L814.6,528.7" fill="none" stroke="#a8a040" stroke-width="0.8"/>
<path d="M738.7,660.4 L742.8,660.5 L743.5,657.2 L748.1,657.7 L750.5,654.3 L754.2,654.5 L756.3,654.6 L760.0,652.0 L764.7,651.3 L765.4,653.0 L769.0,652.3 L772.9,651.4 L777.2,653.0 L779.3,653.6 L782.7,653.9 L785.8,655.0 L788.3,658.0 L790.8,660.4 L791.4,662.2 L796.4,664.1 L798.6,666.1 L799.0,668.4 L802.2,670.2 L804.0,672.9 L803.9,678.3 L806.8,679.0 L811.1,677.1 L813.6,678.7 L817.0,676.7 L821.0,676.0 L821.6,673.2 L828.0,673.4 L830.0,671.8 L830.6,668.0 L832.7,666.1 L834.8,663.7" fill="none" stroke="#a8a040" stroke-width="0.8"/>
<path d="M614.0,894.7 L617.4,891.8 L617.5,889.7 L620.4,888.6 L625.4,886.2 L626.7,882.6 L628.6,883.0 L631.7,880.3 L633.8,877.8 L638.1,878.1 L638.9,875.7 L643.7,876.8 L647.0,875.6 L648.5,874.6 L653.9,876.9 L656.0,875.0 L658.7,877.5 L660.7,880.6 L665.5,883.2 L667.5,884.8 L670.0,886.0 L671.3,889.0 L673.1,893.0 L676.1,894.8 L678.8,897.5 L681.1,896.3 L686.0,894.0 L686.7,891.6 L690.0,890.3 L692.3,888.6 L695.6,886.0 L698.1,884.4 L701.5,881.2 L703.0,878.9 L704.1,876.7 L707.0,875.0 L709.6,873.4 L713.6,874.2 L716.7,872.0 L719.2,872.1 L723.0,872.7 L724.2,871.1 L730.0,872.0 L731.9,869.1 L735.0,869.4 L737.5,867.3 L741.8,867.6 L741.5,864.6 L746.0,863.8 L744.2,860.9 L744.6,858.8 L741.2,855.3 L740.3,853.2 L741.4,850.1 L737.1,847.9 L737.5,843.3 L735.4,842.8 L734.8,837.3 L734.4,835.9 L732.0,833.0 L733.6,830.6 L738.0,828.3 L739.9,825.7 L740.3,826.0 L742.2,821.6 L745.7,819.1 L748.0,818.5 L748.8,814.2 L750.8,812.5 L754.8,810.9 L758.2,809.9 L759.0,805.6 L759.4,804.8 L763.0,802.0 L764.5,803.7 L767.8,804.7 L771.8,804.1 L776.2,804.7 L780.0,807.5 L782.2,806.0 L785.3,803.8 L787.7,800.4 L789.2,799.0 L790.8,798.7 L795.3,795.0 L797.0,793.4 L802.1,793.5 L804.5,794.9 L806.2,795.2 L808.2,797.4 L811.5,798.3 L815.6,800.9 L819.4,802.0 L821.9,800.6 L826.1,801.1 L828.8,801.9 L831.2,799.8 L835.9,801.8 L837.8,800.5 L840.7,799.3 L845.4,799.1 L847.5,799.0 L849.8,797.8 L854.9,796.7 L856.0,796.6 L861.9,795.3 L864.0,793.4 L866.0,791.5 L867.6,788.6 L869.7,783.9 L871.9,780.9 L872.8,779.4 L870.7,777.6 L866.3,775.5 L864.0,773.6 L863.2,772.0 L859.8,770.6 L856.0,768.0 L853.7,767.3" fill="none" stroke="#a8a040" stroke-width="0.8"/>
<g style="mix-blend-mode:multiply">
<path d="M736.0,372.0 C737.7,368.7 743.3,369.0 746.0,370.0 C748.7,371.0 751.7,374.3 752.4,378.0 C753.1,381.7 751.7,388.8 750.0,392.0 C748.3,395.2 744.3,397.6 742.0,397.3 C739.7,397.0 737.0,394.2 736.0,390.0 C735.0,385.8 734.3,375.3 736.0,372.0Z" fill="#ff8000" stroke="#ff8000" stroke-width="4" stroke-linejoin="round"/>
<path d="M726.0,384.0 C727.0,381.1 730.7,381.1 732.0,382.4 C733.3,383.7 733.9,388.7 733.7,392.0 C733.5,395.3 732.3,401.0 731.0,402.3 C729.7,403.6 726.8,403.1 726.0,400.0 C725.2,396.9 725.0,386.9 726.0,384.0Z" fill="#ff8000" stroke="#ff8000" stroke-width="4" stroke-linejoin="round"/>
<path d="M714.0,410.0 C716.7,407.9 723.0,407.3 728.0,407.3 C733.0,407.3 741.0,408.1 744.0,410.0 C747.0,411.9 747.0,416.3 746.0,419.0 C745.0,421.7 740.3,424.2 738.0,426.0 C735.7,427.8 735.0,429.3 732.0,430.0 C729.0,430.7 723.3,431.7 720.0,430.0 C716.7,428.3 713.0,423.3 712.0,420.0 C711.0,416.7 711.3,412.1 714.0,410.0Z" fill="#ff8000" stroke="#ff8000" stroke-width="4" stroke-linejoin="round"/>
<path d="M777.0,421.0 C778.7,419.8 784.1,419.2 786.0,420.0 C787.9,420.8 789.2,424.4 788.5,426.0 C787.8,427.6 784.1,429.5 782.0,429.7 C779.9,429.9 776.8,428.4 776.0,427.0 C775.2,425.6 775.3,422.2 777.0,421.0Z" fill="#ff8000" stroke="#ff8000" stroke-width="4" stroke-linejoin="round"/>
<path d="M794.7,369.9 C793.9,365.3 803.2,370.9 807.2,372.4 C811.2,373.8 815.5,378.0 818.4,378.6 C821.3,379.2 821.6,377.4 824.7,376.1 C827.8,374.9 834.4,371.3 837.1,371.1 C839.8,370.9 840.1,371.8 840.9,374.9 C841.7,378.0 840.9,386.1 842.1,389.8 C843.3,393.5 847.3,394.4 848.3,397.3 C849.3,400.2 849.8,405.0 848.3,407.3 C846.8,409.6 842.7,410.6 839.6,411.0 C836.5,411.4 832.3,409.2 829.6,409.8 C826.9,410.4 825.5,414.6 823.4,414.8 C821.3,415.0 819.1,413.5 817.2,411.0 C815.3,408.5 816.0,406.7 812.2,399.8 C808.5,392.9 795.5,374.5 794.7,369.9Z" fill="#ff8000" stroke="#ff8000" stroke-width="4" stroke-linejoin="round"/>
<path d="M795.0,360.0 C795.8,358.7 801.2,366.0 805.0,368.0 C808.8,370.0 815.2,369.7 818.0,372.0 C820.8,374.3 823.0,380.0 822.0,382.0 C821.0,384.0 815.7,385.0 812.0,384.0 C808.3,383.0 802.8,380.0 800.0,376.0 C797.2,372.0 794.2,361.3 795.0,360.0Z" fill="#ff8000" stroke="#ff8000" stroke-width="4" stroke-linejoin="round"/>
<path d="M842.0,428.0 C844.0,425.5 848.0,422.2 852.0,421.0 C856.0,419.8 863.7,419.5 866.0,421.0 C868.3,422.5 867.7,427.2 866.0,430.0 C864.3,432.8 858.7,435.2 856.0,438.0 C853.3,440.8 852.3,445.7 850.0,447.0 C847.7,448.3 843.7,447.8 842.0,446.0 C840.3,444.2 840.0,439.0 840.0,436.0 C840.0,433.0 840.0,430.5 842.0,428.0Z" fill="#ff8000" stroke="#ff8000" stroke-width="4" stroke-linejoin="round"/>
<path d="M695.0,537.0 C696.5,535.1 701.3,534.5 704.0,534.5 C706.7,534.5 709.3,535.2 711.0,537.0 C712.7,538.8 714.3,542.7 714.0,545.0 C713.7,547.3 711.3,549.8 709.0,551.0 C706.7,552.2 702.3,552.8 700.0,552.0 C697.7,551.2 695.8,548.5 695.0,546.0 C694.2,543.5 693.5,538.9 695.0,537.0Z" fill="#ff8000" stroke="#ff8000" stroke-width="4" stroke-linejoin="round"/>
<path d="M713.0,538.0 C713.2,536.7 719.3,532.3 722.0,530.0 C724.7,527.7 727.3,524.3 729.0,524.0 C730.7,523.7 733.3,525.7 732.0,528.0 C730.7,530.3 724.2,536.3 721.0,538.0 C717.8,539.7 712.8,539.3 713.0,538.0Z" fill="#ff8000" stroke="#ff8000" stroke-width="4" stroke-linejoin="round"/>
<path d="M698.0,557.0 C698.7,555.2 700.7,552.5 704.0,555.0 C707.3,557.5 715.5,568.0 718.0,572.0 C720.5,576.0 719.8,577.6 719.0,579.0 C718.2,580.4 716.2,582.7 713.0,580.5 C709.8,578.3 702.5,569.9 700.0,566.0 C697.5,562.1 697.3,558.8 698.0,557.0Z" fill="#ff8000" stroke="#ff8000" stroke-width="4" stroke-linejoin="round"/>
<path d="M803.0,566.0 C803.7,564.3 807.5,564.7 810.0,566.0 C812.5,567.3 816.2,571.7 818.0,574.0 C819.8,576.3 821.5,578.7 821.0,580.0 C820.5,581.3 817.5,582.7 815.0,582.0 C812.5,581.3 808.0,578.7 806.0,576.0 C804.0,573.3 802.3,567.7 803.0,566.0Z" fill="#ff8000" stroke="#ff8000" stroke-width="4" stroke-linejoin="round"/>
<path d="M643.0,611.0 C644.2,609.6 648.2,609.2 652.0,610.7 C655.8,612.2 663.8,617.5 665.6,620.0 C667.4,622.5 664.8,625.2 663.0,626.0 C661.2,626.8 658.0,626.2 655.0,625.0 C652.0,623.8 647.0,621.3 645.0,619.0 C643.0,616.7 641.8,612.4 643.0,611.0Z" fill="#ff8000" stroke="#ff8000" stroke-width="4" stroke-linejoin="round"/>
<path d="M808.8,608.2 C809.3,604.7 812.9,600.6 817.0,601.7 C821.1,602.8 830.5,610.2 833.2,614.8 C835.9,619.4 834.3,627.2 833.2,629.4 C832.1,631.6 828.9,629.1 826.7,627.8 C824.5,626.4 822.4,622.1 820.2,621.3 C818.0,620.5 815.6,625.1 813.7,622.9 C811.8,620.7 808.2,611.7 808.8,608.2Z" fill="#ff8000" stroke="#ff8000" stroke-width="4" stroke-linejoin="round"/>
<path d="M898.0,588.0 C899.0,586.9 904.4,586.5 906.0,587.5 C907.6,588.5 908.5,592.9 907.5,594.0 C906.5,595.1 901.6,595.0 900.0,594.0 C898.4,593.0 897.0,589.1 898.0,588.0Z" fill="#ff8000" stroke="#ff8000" stroke-width="4" stroke-linejoin="round"/>
<path d="M763.0,758.0 C764.8,755.5 773.2,756.0 776.0,757.0 C778.8,758.0 780.3,761.2 780.0,764.0 C779.7,766.8 776.5,772.7 774.0,774.0 C771.5,775.3 766.8,774.7 765.0,772.0 C763.2,769.3 761.2,760.5 763.0,758.0Z" fill="#ff8000" stroke="#ff8000" stroke-width="4" stroke-linejoin="round"/>
<path d="M758.0,822.0 C759.2,819.4 760.5,814.3 765.0,812.5 C769.5,810.7 780.0,809.8 785.0,811.0 C790.0,812.2 793.2,816.8 795.0,820.0 C796.8,823.2 796.3,826.7 795.5,830.0 C794.7,833.3 792.2,837.9 790.0,840.0 C787.8,842.1 784.3,842.4 782.0,842.5 C779.7,842.6 777.5,842.2 776.0,840.5 C774.5,838.8 775.2,833.4 773.0,832.0 C770.8,830.6 765.5,832.7 763.0,832.0 C760.5,831.3 758.8,829.7 758.0,828.0 C757.2,826.3 756.8,824.6 758.0,822.0Z" fill="#ff8000" stroke="#ff8000" stroke-width="4" stroke-linejoin="round"/>
<path d="M737.0,840.0 C737.8,837.8 739.8,834.2 742.0,833.0 C744.2,831.8 747.9,831.8 750.0,833.0 C752.1,834.2 754.3,837.3 754.5,840.0 C754.7,842.7 752.9,847.3 751.0,849.0 C749.1,850.7 745.3,850.5 743.0,850.0 C740.7,849.5 738.0,847.7 737.0,846.0 C736.0,844.3 736.2,842.2 737.0,840.0Z" fill="#ff8000" stroke="#ff8000" stroke-width="4" stroke-linejoin="round"/>
<path d="M744.0,860.0 C744.3,857.8 746.7,855.5 748.0,855.0 C749.3,854.5 750.2,856.0 752.0,857.0 C753.8,858.0 757.7,858.8 759.0,861.0 C760.3,863.2 760.8,868.2 760.0,870.0 C759.2,871.8 756.3,872.3 754.0,872.0 C751.7,871.7 747.7,870.0 746.0,868.0 C744.3,866.0 743.7,862.2 744.0,860.0Z" fill="#ff8000" stroke="#ff8000" stroke-width="4" stroke-linejoin="round"/>
<path d="M793.5,346.2 C794.5,344.9 796.6,343.1 799.7,342.5 C802.8,341.9 809.1,341.5 812.2,342.5 C815.3,343.5 815.9,347.4 818.4,348.7 C820.9,349.9 825.3,348.6 827.2,350.0 C829.1,351.4 829.4,353.7 829.6,357.4 C829.8,361.1 829.4,369.5 828.4,372.4 C827.4,375.3 826.1,375.1 823.4,374.9 C820.7,374.7 815.3,372.6 812.2,371.1 C809.1,369.7 807.6,368.5 804.7,366.2 C801.8,363.9 796.6,360.1 794.7,357.4 C792.8,354.7 793.7,351.9 793.5,350.0 C793.3,348.1 792.5,347.4 793.5,346.2Z" fill="#ff8000" stroke="#ff8000" stroke-width="7" stroke-linejoin="round"/>
<path d="M756.1,352.5 C757.5,350.6 762.1,348.5 764.8,348.7 C767.5,348.9 769.8,351.4 772.3,353.7 C774.8,356.0 777.5,362.0 779.8,362.4 C782.1,362.8 784.1,355.8 786.0,356.2 C787.9,356.6 789.5,361.6 791.0,364.9 C792.5,368.2 791.8,372.8 794.7,376.1 C797.6,379.4 805.6,382.0 808.5,384.9 C811.4,387.8 812.0,390.7 812.2,393.6 C812.4,396.5 811.8,399.2 809.7,402.3 C807.6,405.4 802.6,410.0 799.7,412.3 C796.8,414.6 795.5,415.4 792.2,416.0 C788.9,416.6 782.7,417.0 779.8,416.0 C776.9,415.0 775.8,412.5 774.8,409.8 C773.8,407.1 774.5,402.5 773.5,399.8 C772.5,397.1 770.2,397.3 768.6,393.6 C767.0,389.9 765.3,379.5 763.6,377.4 C761.9,375.3 760.5,380.5 758.6,381.1 C756.7,381.7 753.9,382.6 752.4,381.1 C750.9,379.7 749.9,375.3 749.9,372.4 C749.9,369.5 751.4,365.8 752.4,363.7 C753.4,361.6 755.5,361.8 756.1,359.9 C756.7,358.0 754.7,354.4 756.1,352.5Z" fill="#ff8000" stroke="#ff8000" stroke-width="7" stroke-linejoin="round"/>
<path d="M834.0,372.0 C834.7,371.2 837.3,371.2 838.0,372.0 C838.7,372.8 839.1,376.2 838.4,377.0 C837.7,377.8 834.7,377.8 834.0,377.0 C833.3,376.2 833.3,372.8 834.0,372.0Z" fill="#ff8000" stroke="#ff8000" stroke-width="7" stroke-linejoin="round"/>
<path d="M830.0,379.0 C831.3,377.7 835.2,377.2 837.0,378.0 C838.8,378.8 840.5,381.8 841.0,384.0 C841.5,386.2 841.3,389.7 840.0,391.0 C838.7,392.3 834.8,392.8 833.0,392.0 C831.2,391.2 829.5,388.2 829.0,386.0 C828.5,383.8 828.7,380.3 830.0,379.0Z" fill="#ff8000" stroke="#ff8000" stroke-width="7" stroke-linejoin="round"/>
<path d="M836.0,396.0 C837.0,394.7 840.3,394.3 842.0,395.0 C843.7,395.7 845.8,398.3 846.0,400.0 C846.2,401.7 844.7,404.5 843.0,405.0 C841.3,405.5 837.2,404.5 836.0,403.0 C834.8,401.5 835.0,397.3 836.0,396.0Z" fill="#ff8000" stroke="#ff8000" stroke-width="7" stroke-linejoin="round"/>
<path d="M850.0,421.0 C851.3,419.3 857.2,419.7 860.0,420.0 C862.8,420.3 866.5,421.5 867.0,423.0 C867.5,424.5 865.5,427.8 863.0,429.0 C860.5,430.2 854.2,431.3 852.0,430.0 C849.8,428.7 848.7,422.7 850.0,421.0Z" fill="#ff8000" stroke="#ff8000" stroke-width="7" stroke-linejoin="round"/>
<path d="M719.7,442.4 C722.3,439.8 730.0,434.6 733.5,433.8 C737.0,433.0 738.4,434.4 740.4,437.3 C742.4,440.2 744.2,446.5 745.6,451.1 C747.0,455.7 747.6,460.9 749.0,464.9 C750.4,468.9 751.9,472.9 754.2,475.2 C756.5,477.5 760.8,476.7 762.8,478.7 C764.8,480.7 766.0,483.6 766.3,487.3 C766.6,491.0 764.0,497.1 764.6,501.1 C765.2,505.1 768.9,507.2 769.7,511.5 C770.6,515.8 770.6,522.4 769.7,527.0 C768.9,531.6 767.2,536.8 764.6,539.1 C762.0,541.4 757.7,541.7 754.2,540.8 C750.8,539.9 746.8,536.8 743.9,533.9 C741.0,531.0 738.1,527.3 737.0,523.6 C735.9,519.9 736.1,515.0 737.0,511.5 C737.9,508.0 741.8,506.0 742.1,502.8 C742.4,499.6 740.4,496.5 738.7,492.5 C737.0,488.5 734.7,483.6 731.8,478.7 C728.9,473.8 723.7,468.0 721.4,463.1 C719.1,458.2 718.3,452.8 718.0,449.3 C717.7,445.9 717.1,445.0 719.7,442.4Z" fill="#ff8000" stroke="#ff8000" stroke-width="7" stroke-linejoin="round"/>
<path d="M776.0,530.0 C777.7,528.8 782.8,528.3 785.0,529.0 C787.2,529.7 788.8,532.2 789.0,534.0 C789.2,535.8 787.8,538.8 786.0,540.0 C784.2,541.2 779.8,541.7 778.0,541.0 C776.2,540.3 775.3,537.8 775.0,536.0 C774.7,534.2 774.3,531.2 776.0,530.0Z" fill="#ff8000" stroke="#ff8000" stroke-width="7" stroke-linejoin="round"/>
<path d="M798.0,555.0 C799.3,553.8 804.1,554.0 806.0,555.0 C807.9,556.0 809.6,559.3 809.4,561.0 C809.2,562.7 806.9,564.8 805.0,565.0 C803.1,565.2 799.2,563.7 798.0,562.0 C796.8,560.3 796.7,556.2 798.0,555.0Z" fill="#ff8000" stroke="#ff8000" stroke-width="7" stroke-linejoin="round"/>
<path d="M634.0,637.0 C634.8,636.0 635.0,632.8 638.0,635.0 C641.0,637.2 649.3,646.7 652.0,650.0 C654.7,653.3 654.3,653.8 654.0,655.0 C653.7,656.2 651.3,657.0 650.0,657.0 C648.7,657.0 648.8,657.7 646.0,655.0 C643.2,652.3 635.0,644.0 633.0,641.0 C631.0,638.0 633.2,638.0 634.0,637.0Z" fill="#ff8000" stroke="#ff8000" stroke-width="7" stroke-linejoin="round"/>
<path d="M680.0,712.0 C682.0,710.7 687.2,709.3 690.0,710.0 C692.8,710.7 695.8,713.3 697.0,716.0 C698.2,718.7 698.5,723.7 697.0,726.0 C695.5,728.3 691.0,730.0 688.0,730.0 C685.0,730.0 680.7,728.0 679.0,726.0 C677.3,724.0 677.5,720.3 677.7,718.0 C677.9,715.7 678.0,713.3 680.0,712.0Z" fill="#ff8000" stroke="#ff8000" stroke-width="7" stroke-linejoin="round"/>
<path d="M756.6,619.6 C757.1,617.8 757.4,616.3 761.5,615.6 C765.6,614.9 776.9,614.7 781.0,615.6 C785.1,616.5 785.5,617.9 786.0,621.3 C786.5,624.7 785.7,633.0 784.3,636.0 C782.9,639.0 780.0,639.5 777.8,639.2 C775.6,638.9 773.2,636.2 771.3,634.3 C769.4,632.4 768.6,629.1 766.4,627.8 C764.2,626.4 759.8,627.6 758.2,626.2 C756.6,624.8 756.1,621.4 756.6,619.6Z" fill="#ff8000" stroke="#ff8000" stroke-width="7" stroke-linejoin="round"/>
<path d="M787.6,634.3 C789.2,631.0 797.1,626.1 800.6,624.5 C804.1,622.9 806.9,623.4 808.8,624.5 C810.7,625.6 811.7,628.3 812.0,631.0 C812.3,633.7 812.3,638.3 810.4,640.8 C808.5,643.2 803.9,645.2 800.6,645.7 C797.3,646.2 793.0,645.9 790.8,644.0 C788.6,642.1 786.0,637.5 787.6,634.3Z" fill="#ff8000" stroke="#ff8000" stroke-width="7" stroke-linejoin="round"/>
<path d="M888.0,607.0 C889.7,605.8 893.3,604.5 896.0,604.5 C898.7,604.5 902.5,605.4 904.0,607.0 C905.5,608.6 906.0,612.2 905.0,614.0 C904.0,615.8 900.7,617.5 898.0,618.0 C895.3,618.5 891.0,618.0 889.0,617.0 C887.0,616.0 886.2,613.7 886.0,612.0 C885.8,610.3 886.3,608.2 888.0,607.0Z" fill="#ff8000" stroke="#ff8000" stroke-width="7" stroke-linejoin="round"/>
<path d="M765.0,818.5 C765.8,817.1 767.2,816.1 770.0,815.5 C772.8,814.9 778.5,814.5 781.5,815.0 C784.5,815.5 786.7,817.2 788.0,818.8 C789.3,820.4 789.7,822.3 789.5,824.5 C789.3,826.7 788.2,830.2 787.0,832.0 C785.8,833.8 783.3,835.2 782.0,835.5 C780.7,835.8 779.7,835.6 779.0,834.0 C778.3,832.4 779.0,827.8 778.0,826.0 C777.0,824.2 774.7,823.6 773.0,823.5 C771.3,823.4 769.2,825.4 768.0,825.5 C766.8,825.6 766.0,825.2 765.5,824.0 C765.0,822.8 764.2,819.9 765.0,818.5Z" fill="#ff8000" stroke="#ff8000" stroke-width="7" stroke-linejoin="round"/>
<path d="M743.5,841.0 C743.8,839.8 745.8,839.4 747.0,839.5 C748.2,839.6 750.5,840.4 751.0,841.5 C751.5,842.6 751.0,845.2 750.0,846.0 C749.0,846.8 746.1,847.3 745.0,846.5 C743.9,845.7 743.2,842.2 743.5,841.0Z" fill="#ff8000" stroke="#ff8000" stroke-width="7" stroke-linejoin="round"/>
<path d="M757.0,838.0 C757.2,836.7 759.6,834.7 761.0,834.5 C762.4,834.3 764.8,835.8 765.5,837.0 C766.2,838.2 765.9,840.6 765.0,841.5 C764.1,842.4 761.3,843.1 760.0,842.5 C758.7,841.9 756.8,839.3 757.0,838.0Z" fill="#ff8000" stroke="#ff8000" stroke-width="7" stroke-linejoin="round"/>
<path d="M719.5,857.0 C721.1,854.0 726.2,847.2 728.5,846.0 C730.8,844.8 732.8,847.1 733.5,850.0 C734.2,852.9 734.6,860.7 733.0,863.5 C731.4,866.3 726.3,866.9 724.0,867.0 C721.7,867.1 719.8,865.7 719.0,864.0 C718.2,862.3 717.9,860.0 719.5,857.0Z" fill="#ff8000" stroke="#ff8000" stroke-width="7" stroke-linejoin="round"/>
<path d="M747.0,861.0 C747.5,859.8 750.4,859.3 752.0,859.5 C753.6,859.7 755.8,860.9 756.5,862.0 C757.2,863.1 757.2,865.2 756.0,866.0 C754.8,866.8 750.5,867.3 749.0,866.5 C747.5,865.7 746.5,862.2 747.0,861.0Z" fill="#ff8000" stroke="#ff8000" stroke-width="7" stroke-linejoin="round"/>
<path d="M793.5,346.2 C794.5,344.9 796.6,343.1 799.7,342.5 C802.8,341.9 809.1,341.5 812.2,342.5 C815.3,343.5 815.9,347.4 818.4,348.7 C820.9,349.9 825.3,348.6 827.2,350.0 C829.1,351.4 829.4,353.7 829.6,357.4 C829.8,361.1 829.4,369.5 828.4,372.4 C827.4,375.3 826.1,375.1 823.4,374.9 C820.7,374.7 815.3,372.6 812.2,371.1 C809.1,369.7 807.6,368.5 804.7,366.2 C801.8,363.9 796.6,360.1 794.7,357.4 C792.8,354.7 793.7,351.9 793.5,350.0 C793.3,348.1 792.5,347.4 793.5,346.2Z" fill="#ff0000" stroke="#ff0000" stroke-width="2" stroke-linejoin="round"/>
<path d="M756.1,352.5 C757.5,350.6 762.1,348.5 764.8,348.7 C767.5,348.9 769.8,351.4 772.3,353.7 C774.8,356.0 777.5,362.0 779.8,362.4 C782.1,362.8 784.1,355.8 786.0,356.2 C787.9,356.6 789.5,361.6 791.0,364.9 C792.5,368.2 791.8,372.8 794.7,376.1 C797.6,379.4 805.6,382.0 808.5,384.9 C811.4,387.8 812.0,390.7 812.2,393.6 C812.4,396.5 811.8,399.2 809.7,402.3 C807.6,405.4 802.6,410.0 799.7,412.3 C796.8,414.6 795.5,415.4 792.2,416.0 C788.9,416.6 782.7,417.0 779.8,416.0 C776.9,415.0 775.8,412.5 774.8,409.8 C773.8,407.1 774.5,402.5 773.5,399.8 C772.5,397.1 770.2,397.3 768.6,393.6 C767.0,389.9 765.3,379.5 763.6,377.4 C761.9,375.3 760.5,380.5 758.6,381.1 C756.7,381.7 753.9,382.6 752.4,381.1 C750.9,379.7 749.9,375.3 749.9,372.4 C749.9,369.5 751.4,365.8 752.4,363.7 C753.4,361.6 755.5,361.8 756.1,359.9 C756.7,358.0 754.7,354.4 756.1,352.5Z" fill="#ff0000" stroke="#ff0000" stroke-width="2" stroke-linejoin="round"/>
<path d="M834.0,372.0 C834.7,371.2 837.3,371.2 838.0,372.0 C838.7,372.8 839.1,376.2 838.4,377.0 C837.7,377.8 834.7,377.8 834.0,377.0 C833.3,376.2 833.3,372.8 834.0,372.0Z" fill="#ff0000" stroke="#ff0000" stroke-width="2" stroke-linejoin="round"/>
<path d="M830.0,379.0 C831.3,377.7 835.2,377.2 837.0,378.0 C838.8,378.8 840.5,381.8 841.0,384.0 C841.5,386.2 841.3,389.7 840.0,391.0 C838.7,392.3 834.8,392.8 833.0,392.0 C831.2,391.2 829.5,388.2 829.0,386.0 C828.5,383.8 828.7,380.3 830.0,379.0Z" fill="#ff0000" stroke="#ff0000" stroke-width="2" stroke-linejoin="round"/>
<path d="M836.0,396.0 C837.0,394.7 840.3,394.3 842.0,395.0 C843.7,395.7 845.8,398.3 846.0,400.0 C846.2,401.7 844.7,404.5 843.0,405.0 C841.3,405.5 837.2,404.5 836.0,403.0 C834.8,401.5 835.0,397.3 836.0,396.0Z" fill="#ff0000" stroke="#ff0000" stroke-width="2" stroke-linejoin="round"/>
<path d="M850.0,421.0 C851.3,419.3 857.2,419.7 860.0,420.0 C862.8,420.3 866.5,421.5 867.0,423.0 C867.5,424.5 865.5,427.8 863.0,429.0 C860.5,430.2 854.2,431.3 852.0,430.0 C849.8,428.7 848.7,422.7 850.0,421.0Z" fill="#ff0000" stroke="#ff0000" stroke-width="2" stroke-linejoin="round"/>
<path d="M719.7,442.4 C722.3,439.8 730.0,434.6 733.5,433.8 C737.0,433.0 738.4,434.4 740.4,437.3 C742.4,440.2 744.2,446.5 745.6,451.1 C747.0,455.7 747.6,460.9 749.0,464.9 C750.4,468.9 751.9,472.9 754.2,475.2 C756.5,477.5 760.8,476.7 762.8,478.7 C764.8,480.7 766.0,483.6 766.3,487.3 C766.6,491.0 764.0,497.1 764.6,501.1 C765.2,505.1 768.9,507.2 769.7,511.5 C770.6,515.8 770.6,522.4 769.7,527.0 C768.9,531.6 767.2,536.8 764.6,539.1 C762.0,541.4 757.7,541.7 754.2,540.8 C750.8,539.9 746.8,536.8 743.9,533.9 C741.0,531.0 738.1,527.3 737.0,523.6 C735.9,519.9 736.1,515.0 737.0,511.5 C737.9,508.0 741.8,506.0 742.1,502.8 C742.4,499.6 740.4,496.5 738.7,492.5 C737.0,488.5 734.7,483.6 731.8,478.7 C728.9,473.8 723.7,468.0 721.4,463.1 C719.1,458.2 718.3,452.8 718.0,449.3 C717.7,445.9 717.1,445.0 719.7,442.4Z" fill="#ff0000" stroke="#ff0000" stroke-width="2" stroke-linejoin="round"/>
<path d="M776.0,530.0 C777.7,528.8 782.8,528.3 785.0,529.0 C787.2,529.7 788.8,532.2 789.0,534.0 C789.2,535.8 787.8,538.8 786.0,540.0 C784.2,541.2 779.8,541.7 778.0,541.0 C776.2,540.3 775.3,537.8 775.0,536.0 C774.7,534.2 774.3,531.2 776.0,530.0Z" fill="#ff0000" stroke="#ff0000" stroke-width="2" stroke-linejoin="round"/>
<path d="M798.0,555.0 C799.3,553.8 804.1,554.0 806.0,555.0 C807.9,556.0 809.6,559.3 809.4,561.0 C809.2,562.7 806.9,564.8 805.0,565.0 C803.1,565.2 799.2,563.7 798.0,562.0 C796.8,560.3 796.7,556.2 798.0,555.0Z" fill="#ff0000" stroke="#ff0000" stroke-width="2" stroke-linejoin="round"/>
<path d="M634.0,637.0 C634.8,636.0 635.0,632.8 638.0,635.0 C641.0,637.2 649.3,646.7 652.0,650.0 C654.7,653.3 654.3,653.8 654.0,655.0 C653.7,656.2 651.3,657.0 650.0,657.0 C648.7,657.0 648.8,657.7 646.0,655.0 C643.2,652.3 635.0,644.0 633.0,641.0 C631.0,638.0 633.2,638.0 634.0,637.0Z" fill="#ff0000" stroke="#ff0000" stroke-width="2" stroke-linejoin="round"/>
<path d="M680.0,712.0 C682.0,710.7 687.2,709.3 690.0,710.0 C692.8,710.7 695.8,713.3 697.0,716.0 C698.2,718.7 698.5,723.7 697.0,726.0 C695.5,728.3 691.0,730.0 688.0,730.0 C685.0,730.0 680.7,728.0 679.0,726.0 C677.3,724.0 677.5,720.3 677.7,718.0 C677.9,715.7 678.0,713.3 680.0,712.0Z" fill="#ff0000" stroke="#ff0000" stroke-width="2" stroke-linejoin="round"/>
<path d="M756.6,619.6 C757.1,617.8 757.4,616.3 761.5,615.6 C765.6,614.9 776.9,614.7 781.0,615.6 C785.1,616.5 785.5,617.9 786.0,621.3 C786.5,624.7 785.7,633.0 784.3,636.0 C782.9,639.0 780.0,639.5 777.8,639.2 C775.6,638.9 773.2,636.2 771.3,634.3 C769.4,632.4 768.6,629.1 766.4,627.8 C764.2,626.4 759.8,627.6 758.2,626.2 C756.6,624.8 756.1,621.4 756.6,619.6Z" fill="#ff0000" stroke="#ff0000" stroke-width="2" stroke-linejoin="round"/>
<path d="M787.6,634.3 C789.2,631.0 797.1,626.1 800.6,624.5 C804.1,622.9 806.9,623.4 808.8,624.5 C810.7,625.6 811.7,628.3 812.0,631.0 C812.3,633.7 812.3,638.3 810.4,640.8 C808.5,643.2 803.9,645.2 800.6,645.7 C797.3,646.2 793.0,645.9 790.8,644.0 C788.6,642.1 786.0,637.5 787.6,634.3Z" fill="#ff0000" stroke="#ff0000" stroke-width="2" stroke-linejoin="round"/>
<path d="M888.0,607.0 C889.7,605.8 893.3,604.5 896.0,604.5 C898.7,604.5 902.5,605.4 904.0,607.0 C905.5,608.6 906.0,612.2 905.0,614.0 C904.0,615.8 900.7,617.5 898.0,618.0 C895.3,618.5 891.0,618.0 889.0,617.0 C887.0,616.0 886.2,613.7 886.0,612.0 C885.8,610.3 886.3,608.2 888.0,607.0Z" fill="#ff0000" stroke="#ff0000" stroke-width="2" stroke-linejoin="round"/>
<path d="M765.0,818.5 C765.8,817.1 767.2,816.1 770.0,815.5 C772.8,814.9 778.5,814.5 781.5,815.0 C784.5,815.5 786.7,817.2 788.0,818.8 C789.3,820.4 789.7,822.3 789.5,824.5 C789.3,826.7 788.2,830.2 787.0,832.0 C785.8,833.8 783.3,835.2 782.0,835.5 C780.7,835.8 779.7,835.6 779.0,834.0 C778.3,832.4 779.0,827.8 778.0,826.0 C777.0,824.2 774.7,823.6 773.0,823.5 C771.3,823.4 769.2,825.4 768.0,825.5 C766.8,825.6 766.0,825.2 765.5,824.0 C765.0,822.8 764.2,819.9 765.0,818.5Z" fill="#ff0000" stroke="#ff0000" stroke-width="2" stroke-linejoin="round"/>
<path d="M743.5,841.0 C743.8,839.8 745.8,839.4 747.0,839.5 C748.2,839.6 750.5,840.4 751.0,841.5 C751.5,842.6 751.0,845.2 750.0,846.0 C749.0,846.8 746.1,847.3 745.0,846.5 C743.9,845.7 743.2,842.2 743.5,841.0Z" fill="#ff0000" stroke="#ff0000" stroke-width="2" stroke-linejoin="round"/>
<path d="M757.0,838.0 C757.2,836.7 759.6,834.7 761.0,834.5 C762.4,834.3 764.8,835.8 765.5,837.0 C766.2,838.2 765.9,840.6 765.0,841.5 C764.1,842.4 761.3,843.1 760.0,842.5 C758.7,841.9 756.8,839.3 757.0,838.0Z" fill="#ff0000" stroke="#ff0000" stroke-width="2" stroke-linejoin="round"/>
<path d="M719.5,857.0 C721.1,854.0 726.2,847.2 728.5,846.0 C730.8,844.8 732.8,847.1 733.5,850.0 C734.2,852.9 734.6,860.7 733.0,863.5 C731.4,866.3 726.3,866.9 724.0,867.0 C721.7,867.1 719.8,865.7 719.0,864.0 C718.2,862.3 717.9,860.0 719.5,857.0Z" fill="#ff0000" stroke="#ff0000" stroke-width="2" stroke-linejoin="round"/>
<path d="M747.0,861.0 C747.5,859.8 750.4,859.3 752.0,859.5 C753.6,859.7 755.8,860.9 756.5,862.0 C757.2,863.1 757.2,865.2 756.0,866.0 C754.8,866.8 750.5,867.3 749.0,866.5 C747.5,865.7 746.5,862.2 747.0,861.0Z" fill="#ff0000" stroke="#ff0000" stroke-width="2" stroke-linejoin="round"/>
</g>
<path d="M907.0,340.5 L868.6,359.3 L856.4,368.2 L838.5,366.6 L833.6,371.5 L827.0,381.0 L822.2,407.3 L812.4,418.7 L804.3,431.8 L791.2,441.5 L773.3,449.7 L752.5,454.5 L744.7,465.7 L723.0,485.6 L712.8,496.0 L709.3,506.3 L700.7,516.6 L702.4,527.0 L709.3,539.0 L711.0,551.0 L707.6,575.3 L706.0,600.0 L708.0,613.3 L708.0,648.0 L707.5,653.0 L738.8,679.6 L778.6,703.5 L790.5,719.4" fill="none" stroke="#c8b418" stroke-width="3.2" stroke-linejoin="round" stroke-opacity="0.75"/>
<path d="M907.0,340.5 L868.6,359.3 L856.4,368.2 L838.5,366.6 L833.6,371.5 L827.0,381.0 L822.2,407.3 L812.4,418.7 L804.3,431.8 L791.2,441.5 L773.3,449.7 L752.5,454.5 L744.7,465.7 L723.0,485.6 L712.8,496.0 L709.3,506.3 L700.7,516.6 L702.4,527.0 L709.3,539.0 L711.0,551.0 L707.6,575.3 L706.0,600.0 L708.0,613.3 L708.0,648.0 L707.5,653.0 L738.8,679.6 L778.6,703.5 L790.5,719.4" fill="none" stroke="#f8f050" stroke-width="1.3" stroke-linejoin="round" stroke-opacity="0.9"/>
<path d="M620.0,598.0 L646.0,610.6 L664.3,626.8 L700.5,645.6 L707.5,653.0" fill="none" stroke="#c8b418" stroke-width="3.2" stroke-linejoin="round" stroke-opacity="0.75"/>
<path d="M620.0,598.0 L646.0,610.6 L664.3,626.8 L700.5,645.6 L707.5,653.0" fill="none" stroke="#f8f050" stroke-width="1.3" stroke-linejoin="round" stroke-opacity="0.9"/>
<path d="M790.5,719.4 L800.0,714.6 L816.7,704.6 L832.7,694.0 L830.6,685.5 L860.0,679.0 L872.8,689.7 L877.0,702.4 L906.6,685.5 L946.7,687.6 L965.6,698.0 L961.4,706.6 L965.6,727.7 L976.2,746.7 L991.0,748.8 L991.0,763.5 L1014.0,763.5" fill="none" stroke="#c8b418" stroke-width="3.2" stroke-linejoin="round" stroke-opacity="0.75"/>
<path d="M790.5,719.4 L800.0,714.6 L816.7,704.6 L832.7,694.0 L830.6,685.5 L860.0,679.0 L872.8,689.7 L877.0,702.4 L906.6,685.5 L946.7,687.6 L965.6,698.0 L961.4,706.6 L965.6,727.7 L976.2,746.7 L991.0,748.8 L991.0,763.5 L1014.0,763.5" fill="none" stroke="#f8f050" stroke-width="1.3" stroke-linejoin="round" stroke-opacity="0.9"/>
<path d="M818.0,706.6 L845.4,723.5 L845.4,734.0 L864.4,757.2 L889.7,763.5 L902.4,753.0 L936.0,755.0 L965.6,761.4 L991.0,765.7" fill="none" stroke="#c8b418" stroke-width="3.2" stroke-linejoin="round" stroke-opacity="0.75"/>
<path d="M818.0,706.6 L845.4,723.5 L845.4,734.0 L864.4,757.2 L889.7,763.5 L902.4,753.0 L936.0,755.0 L965.6,761.4 L991.0,765.7" fill="none" stroke="#f8f050" stroke-width="1.3" stroke-linejoin="round" stroke-opacity="0.9"/>
<path d="M868.6,359.3 L886.7,387.0 L898.0,410.0 L900.5,430.6 L919.0,444.4 L919.0,456.0 L914.0,476.6 L921.0,492.7 L930.4,508.8 L944.0,518.0 L981.0,513.4 L1010.0,525.0 L1037.0,529.4 L1075.0,544.7 L1086.7,567.8" fill="none" stroke="#c8b418" stroke-width="3.2" stroke-linejoin="round" stroke-opacity="0.75"/>
<path d="M868.6,359.3 L886.7,387.0 L898.0,410.0 L900.5,430.6 L919.0,444.4 L919.0,456.0 L914.0,476.6 L921.0,492.7 L930.4,508.8 L944.0,518.0 L981.0,513.4 L1010.0,525.0 L1037.0,529.4 L1075.0,544.7 L1086.7,567.8" fill="none" stroke="#f8f050" stroke-width="1.3" stroke-linejoin="round" stroke-opacity="0.9"/>
<path d="M790.5,719.4 L795.3,729.2 L798.3,734.5 L796.8,746.0 L798.3,763.0 L786.0,780.0 L777.0,785.0 L782.8,804.7 L799.7,824.4 L808.0,844.0 L802.5,861.0 L802.5,892.0 L811.0,897.5 L805.3,959.4" fill="none" stroke="#c8b418" stroke-width="3.2" stroke-linejoin="round" stroke-opacity="0.75"/>
<path d="M790.5,719.4 L795.3,729.2 L798.3,734.5 L796.8,746.0 L798.3,763.0 L786.0,780.0 L777.0,785.0 L782.8,804.7 L799.7,824.4 L808.0,844.0 L802.5,861.0 L802.5,892.0 L811.0,897.5 L805.3,959.4" fill="none" stroke="#f8f050" stroke-width="1.3" stroke-linejoin="round" stroke-opacity="0.9"/>
<path d="M799.7,619.7 L790.0,632.0 L776.0,640.6 L757.5,650.0 L739.0,675.0" fill="none" stroke="#c8b418" stroke-width="3.2" stroke-linejoin="round" stroke-opacity="0.75"/>
<path d="M799.7,619.7 L790.0,632.0 L776.0,640.6 L757.5,650.0 L739.0,675.0" fill="none" stroke="#f8f050" stroke-width="1.3" stroke-linejoin="round" stroke-opacity="0.9"/>
<circle cx="868.6" cy="359.3" r="4" fill="#9a9a40" stroke="#505018" stroke-width="1"/><circle cx="868.6" cy="359.3" r="1.8" fill="#505018"/>
<circle cx="744.7" cy="465.7" r="4" fill="#9a9a40" stroke="#505018" stroke-width="1"/><circle cx="744.7" cy="465.7" r="1.8" fill="#505018"/>
<circle cx="709.3" cy="540" r="4" fill="#9a9a40" stroke="#505018" stroke-width="1"/><circle cx="709.3" cy="540" r="1.8" fill="#505018"/>
<circle cx="922.4" cy="492.7" r="4" fill="#9a9a40" stroke="#505018" stroke-width="1"/><circle cx="922.4" cy="492.7" r="1.8" fill="#505018"/>
<circle cx="1084" cy="570.3" r="4" fill="#9a9a40" stroke="#505018" stroke-width="1"/><circle cx="1084" cy="570.3" r="1.8" fill="#505018"/>
<circle cx="799.7" cy="619.7" r="4" fill="#9a9a40" stroke="#505018" stroke-width="1"/><circle cx="799.7" cy="619.7" r="1.8" fill="#505018"/>
<circle cx="707.5" cy="653" r="4" fill="#9a9a40" stroke="#505018" stroke-width="1"/><circle cx="707.5" cy="653" r="1.8" fill="#505018"/>
<circle cx="967.5" cy="697" r="4" fill="#9a9a40" stroke="#505018" stroke-width="1"/><circle cx="967.5" cy="697" r="1.8" fill="#505018"/>
<circle cx="806.7" cy="845.5" r="4" fill="#9a9a40" stroke="#505018" stroke-width="1"/><circle cx="806.7" cy="845.5" r="1.8" fill="#505018"/>
<path d="M790.5,711 L792.6,717.2 L799,717.2 L793.8,721 L795.8,727.2 L790.5,723.4 L785.2,727.2 L787.2,721 L782,717.2 L788.4,717.2Z" fill="#ff0000"/>
<path d="M1057.5,323.3 C1059.5,322.6 1063.4,320.9 1069.2,319.0 C1075.0,317.1 1086.0,315.4 1092.5,311.7 C1099.0,308.0 1102.7,299.9 1108.5,297.0 C1114.3,294.1 1120.0,295.4 1127.5,294.0 C1135.0,292.6 1147.9,290.7 1153.7,288.3 C1159.5,285.9 1157.6,279.6 1162.5,279.6 C1167.4,279.6 1179.1,285.4 1183.0,288.3 C1186.9,291.2 1187.3,293.1 1185.8,297.0 C1184.3,300.9 1176.4,307.8 1174.2,311.7 C1172.0,315.6 1169.8,316.0 1172.7,320.4 C1175.6,324.8 1185.7,335.6 1191.7,338.0 C1197.8,340.4 1204.2,338.9 1209.0,335.0 C1213.8,331.1 1215.9,319.5 1220.8,314.6 C1225.7,309.7 1232.5,308.7 1238.3,305.8 C1244.1,302.9 1251.4,299.9 1255.8,297.0 C1260.2,294.1 1262.2,288.3 1264.6,288.3 C1267.0,288.3 1267.5,295.3 1270.4,297.0 C1273.3,298.7 1277.6,298.5 1282.0,298.5 C1286.4,298.5 1293.3,298.7 1296.7,297.0 C1300.1,295.3 1301.5,292.2 1302.5,288.3 C1303.5,284.4 1302.0,280.1 1302.5,273.8 C1303.0,267.4 1303.0,254.8 1305.4,250.4 C1307.8,246.0 1313.1,250.9 1317.0,247.5 C1320.9,244.1 1328.8,235.8 1328.8,230.0 C1328.8,224.2 1318.2,218.3 1317.0,212.5 C1315.8,206.7 1320.8,197.9 1321.5,195.0" fill="none" stroke="#6a94c8" stroke-width="1.1"/>
<path d="M1556.0,195.0 C1555.1,198.4 1550.4,208.6 1550.4,215.4 C1550.4,222.2 1553.3,229.7 1556.2,235.8 C1559.2,241.9 1562.9,248.6 1568.0,252.0 C1573.1,255.4 1583.8,255.5 1587.0,256.2" fill="none" stroke="#6a94c8" stroke-width="1.1"/>
</g></svg>
<div class="a mlab" style="left:847.0px;top:373.5px">永仁县</div>
<div class="a mlab" style="left:721.8px;top:480.0px">大姚县</div>
<div class="a mlab" style="left:688.1px;top:556.0px">姚安县</div>
<div class="a mlab" style="left:898.9px;top:508.0px">元谋县</div>
<div class="a mlab" style="left:1063.2px;top:585.5px">武定县</div>
<div class="a mlab" style="left:775.5px;top:635.5px">牟定县</div>
<div class="a mlab" style="left:685.1px;top:668.3px">南华县</div>
<div class="a mlab" style="left:944.5px;top:710.5px">禄丰县</div>
<div class="a mlab" style="left:785.1px;top:860.3px">双柏县</div>
<div class="a" style="left:760px;top:737px;font-size:19px;line-height:22px;color:#111;white-space:nowrap">楚雄州</div>
<div id="legend" class="a">
<div class="a sw" style="top:18px;background:#ffff00"></div>
<div class="a sw" style="top:58px;background:#ffa000"></div>
<div class="a sw" style="top:98px;background:#ff0000"></div>
<div class="a lt" style="top:23px">火险低易发区</div>
<div class="a lt" style="top:63px">火险易发区</div>
<div class="a lt" style="top:103px">火险高易发区</div>
</div>
<div id="toolbar" class="a">
<svg class="a" style="left:0;top:0" width="607" height="28" viewBox="700 196 607 28">
<defs>
<radialGradient id="globeg" cx="0.35" cy="0.3" r="0.75"><stop offset="0" stop-color="#bfe4ff"/><stop offset="0.5" stop-color="#2a7fd8"/><stop offset="1" stop-color="#0a3a98"/></radialGradient>
<radialGradient id="redg" cx="0.4" cy="0.35" r="0.7"><stop offset="0" stop-color="#ff8a7a"/><stop offset="0.6" stop-color="#e42a20"/><stop offset="1" stop-color="#b01010"/></radialGradient>
<linearGradient id="arrowg" x1="0" y1="0" x2="1" y2="1"><stop offset="0" stop-color="#9ee07a"/><stop offset="1" stop-color="#2a8a20"/></linearGradient>
</defs>
<g fill="#a0a0b8"><rect x="704" y="202" width="2" height="2"/><rect x="704" y="207" width="2" height="2"/><rect x="704" y="212" width="2" height="2"/><rect x="704" y="217" width="2" height="2"/></g>
<!-- globe -->
<circle cx="726.5" cy="210.5" r="9.5" fill="url(#globeg)"/>
<path d="M722,205 L727,204 L730,208 L726,212 L728,217 L724,216 L721,211Z" fill="#e8f6ff" opacity="0.6"/>
<!-- ruler -->
<g transform="rotate(-45 757.5 210.5)"><rect x="748" y="206.5" width="19" height="8" fill="#e8c050" stroke="#8a6a10" stroke-width="1"/><path d="M751,206.5 v3 M754,206.5 v2 M757,206.5 v3 M760,206.5 v2 M763,206.5 v3" stroke="#6a5010" stroke-width="0.8"/></g>
<!-- select circle arrow -->
<circle cx="786" cy="207" r="6.5" fill="none" stroke="#333" stroke-width="1" stroke-dasharray="1.5 1.5"/>
<path d="M788,204 L797,214 L793,214 L795,219 L792,220 L790,215 L787,217Z" fill="url(#arrowg)" stroke="#2a6a20" stroke-width="0.6"/>
<!-- arrow with rect -->
<path d="M814,203 h4 v4" fill="none" stroke="#333" stroke-width="1.2"/>
<path d="M818,204 L828,214 L824,214 L826,219 L823,220 L821,215 L818,217Z" fill="url(#arrowg)" stroke="#2a6a20" stroke-width="0.6"/>
<!-- dotted circle arrow -->
<ellipse cx="849" cy="207" rx="7" ry="5.5" fill="none" stroke="#333" stroke-width="1" stroke-dasharray="1.5 1.5"/>
<path d="M850,204 L859,214 L855,214 L857,219 L854,220 L852,215 L849,217Z" fill="url(#arrowg)" stroke="#2a6a20" stroke-width="0.6"/>
<!-- zoom in -->
<circle cx="880" cy="209" r="5.5" fill="#f4f8ff" stroke="#333" stroke-width="1.5"/>
<path d="M877,209 h6 M880,206 v6" stroke="#000" stroke-width="1.6"/>
<path d="M884,213 L888,218" stroke="#d08040" stroke-width="2.6" stroke-linecap="round"/>
<!-- zoom out -->
<circle cx="911" cy="209" r="5.5" fill="#f4f8ff" stroke="#333" stroke-width="1.5"/>
<path d="M908,209 h6" stroke="#000" stroke-width="1.6"/>
<path d="M915,213 L919,218" stroke="#d08040" stroke-width="2.6" stroke-linecap="round"/>
<!-- hand -->
<path d="M939,213 L937,207 L939,206 L941,209 L941,203 L943,202 L944,208 L945,202 L947,202 L947,208 L949,203 L951,204 L950,210 L952,207 L954,208 L951,216 L948,219 L942,219Z" fill="#cfe0f8" stroke="#6a8ab8" stroke-width="0.8"/>
<!-- red x -->
<path d="M972,201.5 L980,201.5 L985.5,207 L985.5,215 L980,220.5 L972,220.5 L966.5,215 L966.5,207Z" fill="url(#redg)"/>
<path d="M972.5,207.5 L979.5,214.5 M979.5,207.5 L972.5,214.5" stroke="#fff" stroke-width="2.4"/>
<!-- window -->
<rect x="998" y="203" width="17" height="15" fill="#fff" stroke="#1a5ab0" stroke-width="1"/>
<rect x="998" y="203" width="17" height="2" fill="#1a5ab0"/><rect x="1010" y="203" width="5" height="2" fill="#e03030"/>
<path d="M1001,216 v-6 h5 v6" fill="none" stroke="#1a4a98" stroke-width="1.6"/><path d="M1009,210 L1013,206" stroke="#3a8ae0" stroke-width="1.3"/>
<rect x="998" y="216.5" width="17" height="1.5" fill="#1a5ab0"/>
<!-- doc refresh -->
<path d="M1031,202 h8 l4,4 v14 h-12Z" fill="#fff" stroke="#222" stroke-width="1.1"/>
<path d="M1034,210 a3.5,3.5 0 0 1 6,-1 M1040,213 a3.5,3.5 0 0 1 -6,1" fill="none" stroke="#2a7ad8" stroke-width="1.5"/>
<!-- magnifier ? -->
<circle cx="1068" cy="209" r="5.5" fill="#fff" stroke="#444" stroke-width="1.3"/>
<text x="1065.5" y="212" font-size="8" font-family="Liberation Sans" fill="#222">?</text>
<path d="M1072,213 L1076,218" stroke="#d08040" stroke-width="2.4" stroke-linecap="round"/>
<path d="M1076,203 h2 M1076,206 h2" stroke="#333" stroke-width="1"/>
<!-- picture -->
<rect x="1092" y="204" width="18" height="13" fill="#4a8ad8" stroke="#555" stroke-width="1"/>
<path d="M1093,214 L1099,210 L1104,212 L1109,209 L1109,216 L1093,216Z" fill="#3a8a4a"/>
<rect x="1093" y="205" width="16" height="4" fill="#aad0f0"/>
<!-- blue curve arrow -->
<rect x="1124" y="204" width="17" height="14" fill="#5a9ae8"/>
<path d="M1128,214 a5,5 0 1 1 8,-4" fill="none" stroke="#e8f2ff" stroke-width="2.5"/>
<rect x="1139" y="203" width="2" height="16" fill="#555"/>
<!-- printer -->
<rect x="1158" y="202" width="10" height="6" fill="#fff" stroke="#666" stroke-width="0.8"/>
<rect x="1154" y="207" width="18" height="8" rx="1" fill="#c8c8d0" stroke="#666" stroke-width="0.8"/>
<rect x="1158" y="213" width="10" height="6" fill="#fff" stroke="#666" stroke-width="0.8"/>
<path d="M1161,217 a3,3 0 0 1 5,-2" fill="none" stroke="#2a7ad8" stroke-width="1.4"/>
<!-- printer magnifier -->
<path d="M1188,203 v4 M1198,203 v4" stroke="#555" stroke-width="1"/>
<rect x="1186" y="207" width="18" height="8" rx="1" fill="#c8c8d0" stroke="#666" stroke-width="0.8"/>
<circle cx="1200" cy="216" r="3" fill="#cfe6ff" stroke="#4a7ab8" stroke-width="1"/>
<path d="M1188,216 h9" stroke="#888" stroke-width="1.2"/>
<!-- pin -->
<path d="M1227,202 a5,5 0 0 1 5,5 c0,3 -3,6 -5,12 c-2,-6 -5,-9 -5,-12 a5,5 0 0 1 5,-5Z" fill="#f0c040" stroke="#c89020" stroke-width="0.6"/>
<rect x="1226" y="205" width="2" height="4" fill="#3a2a10"/>
<!-- green arrow -->
<path d="M1251,210 L1258,204 L1258,207.5 L1266,207.5 L1266,213 L1258,213 L1258,216.5Z" fill="#8ed060" stroke="#5a9a30" stroke-width="0.8"/>
<!-- grid image -->
<rect x="1279" y="203" width="17" height="15" fill="#dce8f8" stroke="#8aa0c0" stroke-width="0.8"/>
<path d="M1281,206 h13 M1281,210 h13 M1281,214 h13 M1284,204 v13 M1289,204 v13" stroke="#2a5ad0" stroke-width="1.2"/>
</svg>
</div>

<div id="panel" class="a"></div>
<div class="a ptitle"></div>
<div class="a pt" style="left:1601px;top:198px">森林火险预报</div>
<svg class="a" style="left:1874px;top:197px" width="40" height="18" viewBox="1874 197 40 18">
<path d="M1879,201 h6 v8 h-6Z M1876.5,209 h11 M1882,209 v5" fill="none" stroke="#000" stroke-width="1.8"/>
<path d="M1897.5,201.5 L1908.5,211.5 M1908.5,201.5 L1897.5,211.5" stroke="#000" stroke-width="2"/>
</svg>
<!-- scrollbar -->
<div class="a" style="left:1895px;top:216px;width:21px;height:799px;background:#f0f0f0;border-left:1px solid #fff"></div>
<div class="a" style="left:1896px;top:238px;width:19px;height:663px;background:#cdcdcd"></div><div class="a" style="left:1916px;top:194px;width:4px;height:821px;background:#fff"></div>
<svg class="a" style="left:1895px;top:216px" width="21" height="799" viewBox="0 0 21 799">
<path d="M6,13 L10.5,8.5 L15,13" fill="none" stroke="#606060" stroke-width="2"/>
<path d="M6,786.5 L10.5,791 L15,786.5" fill="none" stroke="#606060" stroke-width="2.2"/>
</svg>
<!-- tabs 1 -->
<div class="a" style="left:1675px;top:222px;width:70px;height:24px;background:#f0f0f0;border:1px solid #d9d9d9;border-bottom:none"></div>
<div class="a" style="left:1597px;top:245px;width:291px;height:125px;background:#fff;border:1px solid #d9d9d9"></div>
<div class="a" style="left:1597px;top:219px;width:78px;height:27px;background:#fff;border:1px solid #d9d9d9;border-bottom:none"></div><div class="a" style="left:1598px;top:244px;width:76px;height:3px;background:#fff"></div>
<div class="a pt" style="left:1606px;top:223px">自动分析</div>
<div class="a pt" style="left:1681px;top:225px">手动标绘</div>
<div class="a pt" style="left:1634px;top:264px">预警日期</div>
<div class="a pt" style="left:1634px;top:293px">预警时次</div>
<div class="a combo" style="left:1710px;top:260px;width:127px;height:26px;padding:4px 0 0 2px">2023年&nbsp; 6月16日<span class="chev"></span></div>
<div class="a combo" style="left:1710px;top:289px;width:126px;height:25px;padding:3px 0 0 2px">08<span class="chev"></span></div>
<div class="a btn" style="left:1636px;top:323px;width:86px;height:26px;border:2px solid #0078d7;line-height:22px">分析成图</div>
<div class="a btn" style="left:1749px;top:323px;width:86px;height:26px;line-height:24px">因子值</div>
<!-- grid -->
<div class="a" style="left:1599px;top:379px;width:286px;height:143px;background:#fff;border:2px solid #1a1a1a"></div>
<div class="a" style="left:1601px;top:381px;width:282px;height:24px;background:#fff;border-bottom:1px solid #a0a0a0"></div>
<div class="a" style="left:1650px;top:381px;width:1px;height:24px;background:#d0d0d0"></div>
<div class="a" style="left:1748px;top:381px;width:1px;height:24px;background:#d0d0d0"></div>
<div class="a" style="left:1846px;top:381px;width:1px;height:24px;background:#d0d0d0"></div>
<div class="a pt" style="left:1658px;top:384px">选择县市</div>
<div class="a pt" style="left:1756px;top:384px">预警区域</div>
<div class="a pt" style="left:1853px;top:384px;width:30px;overflow:hidden">预警</div>
<div class="a" style="left:1601px;top:502px;width:282px;height:18px;background:#f0f0f0"></div>
<div class="a" style="left:1621px;top:502px;width:191px;height:18px;background:#cdcdcd"></div>
<svg class="a" style="left:1601px;top:502px" width="282" height="18" viewBox="0 0 282 18">
<path d="M12,5 L8,9 L12,13" fill="none" stroke="#606060" stroke-width="2"/>
<path d="M270,5 L274,9 L270,13" fill="none" stroke="#606060" stroke-width="2"/>
</svg>
<div class="a btn" style="left:1627px;top:531px;width:109px;height:27px;line-height:25px">获取信息</div>
<div class="a btn" style="left:1750px;top:531px;width:105px;height:27px;line-height:25px">删&nbsp;除</div>
<div class="a btn" style="left:1627px;top:567px;width:109px;height:27px;line-height:25px">发&nbsp;&nbsp;&nbsp;布</div>
<div class="a btn" style="left:1750px;top:567px;width:105px;height:27px;line-height:25px">输&nbsp;&nbsp;&nbsp;出</div>
<!-- tabs 2 -->
<div class="a" style="left:1678px;top:606px;width:70px;height:23px;background:#d8eaf9;border:1px solid #d9d9d9;border-bottom:none"></div>
<div class="a" style="left:1599px;top:628px;width:283px;height:135px;background:#fff;border:1px solid #d9d9d9"></div>
<div class="a" style="left:1599px;top:603px;width:79px;height:26px;background:#fff;border:1px solid #d9d9d9;border-bottom:none"></div>
<div class="a pt" style="left:1608px;top:607px">地理分析</div>
<div class="a pt" style="left:1684px;top:610px">气象信息</div>
<div class="a pt" style="left:1613px;top:656px">分析等级</div>
<div class="a pt" style="left:1614px;top:691px">分析内容</div>
<div class="a combo" style="left:1681px;top:649px;width:154px;height:25px;padding:2px 0 0 2px;font-size:15px">全部<span class="chev" style="top:6px"></span></div>
<div class="a combo" style="left:1681px;top:687px;width:154px;height:25px;padding:2px 0 0 2px;font-size:15px">一请选择地理图层-<span class="chev" style="top:6px;box-shadow:-4px -4px 0 6px #fff"></span></div>
<div class="a btn" style="left:1682px;top:723px;width:152px;height:28px;line-height:26px">分析</div>
<!-- group 1 -->
<div class="a" style="left:1599px;top:782px;width:286px;height:171px;border:1px solid #dcdcdc"></div>
<div class="a pt" style="left:1606px;top:771px;background:#f0f0f0;padding:0 2px">制作预警标绘</div>
<div class="a btn" style="left:1614px;top:799px;width:122px;height:30px;line-height:28px">文档发布</div>
<div class="a btn" style="left:1750px;top:799px;width:124px;height:30px;line-height:28px">预警标绘</div>
<div class="a btn" style="left:1658px;top:839px;width:165px;height:29px;line-height:27px">黄色预警文档编辑</div>
<div class="a btn" style="left:1658px;top:878px;width:165px;height:28px;line-height:27px">橙色预警文档编辑</div>
<div class="a btn" style="left:1658px;top:917px;width:165px;height:29px;line-height:27px">红色预警文档编辑</div>
<!-- group 2 -->
<div class="a" style="left:1599px;top:971px;width:289px;height:60px;border:1px solid #dcdcdc"></div>
<div class="a pt" style="left:1606px;top:960px;background:#f0f0f0;padding:0 2px">发布方式</div>
<div class="a btn" style="left:1614px;top:988px;width:122px;height:30px;line-height:28px">邮件发送</div>
<div class="a btn" style="left:1756px;top:988px;width:124px;height:30px;line-height:28px">传真发送</div>

<div id="status" class="a">
<span class="a" style="left:34px;top:6px">Ready</span>
<span class="a" style="left:166px;top:6px;color:#2a2af0;font-size:15.4px">DMGIS专项服务系统</span>
<span class="a" style="left:371px;top:6px;letter-spacing:-0.1px">经度:103°56'57"</span>
<span class="a" style="left:685px;top:6px;letter-spacing:-0.2px">纬度:25°32'45"</span>
</div>
<div id="sbot" class="a"></div>
</body></html>
